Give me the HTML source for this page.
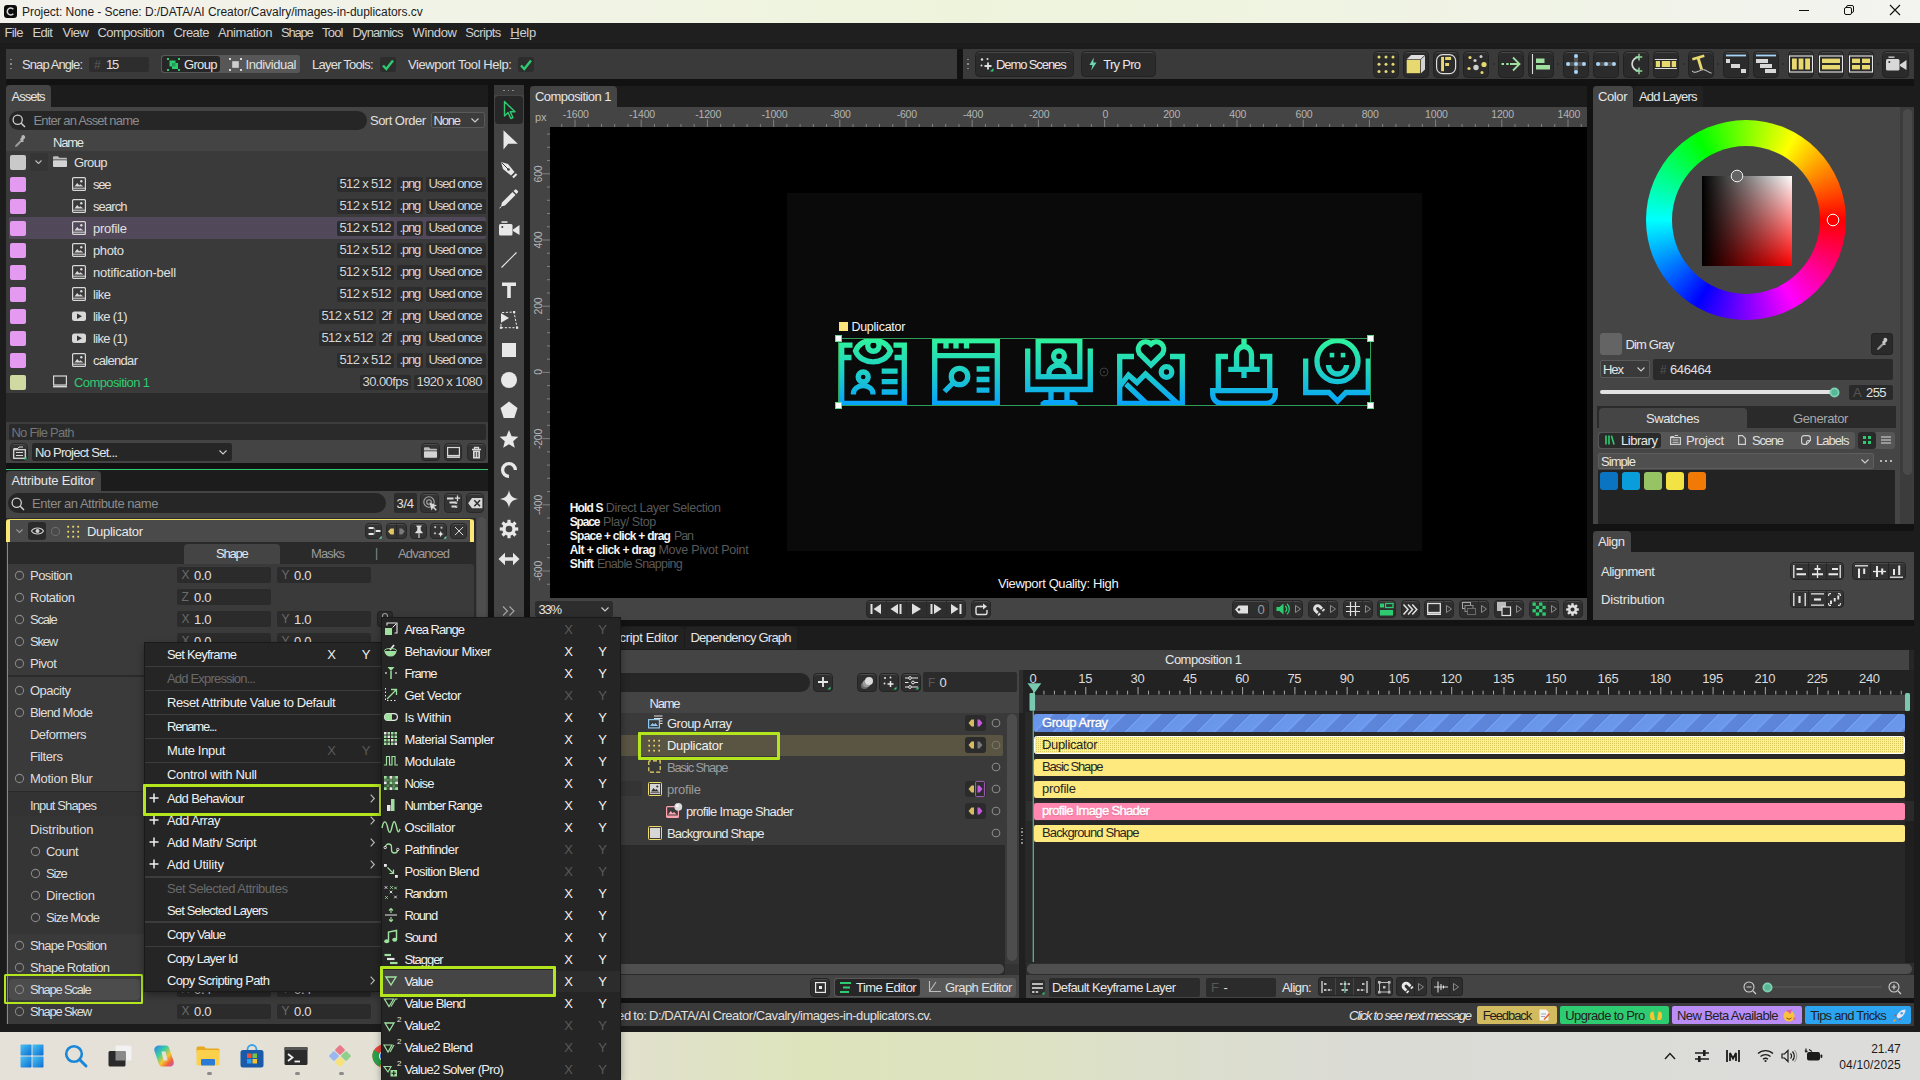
<!DOCTYPE html>
<html lang="en"><head><meta charset="utf-8"><title>Cavalry</title>
<style>
html,body{margin:0;padding:0;}
body{width:1920px;height:1080px;overflow:hidden;position:relative;background:#1e1e1e;
font-family:"Liberation Sans",sans-serif;font-size:13px;color:#dcdcdc;}
.b{position:absolute;display:block;overflow:hidden;}
.t{position:absolute;white-space:pre;}
svg.b{overflow:visible;}
</style></head>
<body>
<!-- p_chrome -->
<div class="b" style="left:0px;top:0px;width:1920px;height:22.6px;background:linear-gradient(90deg,#f3f1ec 0%,#f1f3e6 25%,#eef4dc 50%,#f0f3e4 75%,#f3f3f0 100%);"></div>
<svg class="b" style="left:3.5px;top:4.5px;" width="13" height="13" viewBox="0 0 13 13"><rect x="0" y="0" width="13" height="13" rx="3" fill="#0c0c0c"/><path d="M9.3 4.3A3.4 3.4 0 1 0 9.3 8.7" fill="none" stroke="#d8d8d8" stroke-width="1.5"/></svg>
<div class="t" style="top:3.5px;line-height:16px;font-size:12px;color:#1b1b1b;left:22px;letter-spacing:-0.05px;">Project: None - Scene: D:/DATA/AI Creator/Cavalry/images-in-duplicators.cv</div>
<svg class="b" style="left:1799px;top:5px;" width="10" height="10" viewBox="0 0 10 10"><path d="M0 5.5H10" stroke="#111" stroke-width="1"/></svg>
<svg class="b" style="left:1844px;top:5px;" width="10" height="10" viewBox="0 0 10 10"><rect x="0.5" y="2.5" width="7" height="7" rx="1.5" fill="none" stroke="#111"/><path d="M2.5 2.5V2A1.5 1.5 0 0 1 4 0.5H8A1.5 1.5 0 0 1 9.5 2V6A1.5 1.5 0 0 1 8 7.5H7.5" fill="none" stroke="#111"/></svg>
<svg class="b" style="left:1890px;top:5px;" width="10" height="10" viewBox="0 0 10 10"><path d="M0 0L10 10M10 0L0 10" stroke="#111" stroke-width="1.1"/></svg>
<div class="b" style="left:0px;top:22.6px;width:1920px;height:20.4px;background:#1f1f1f;"></div>
<div class="t" style="top:24px;line-height:17px;font-size:13px;color:#cfcfcf;left:4.5px;letter-spacing:-0.65px;">File</div>
<div class="t" style="top:24px;line-height:17px;font-size:13px;color:#cfcfcf;left:32.5px;letter-spacing:-0.64px;">Edit</div>
<div class="t" style="top:24px;line-height:17px;font-size:13px;color:#cfcfcf;left:62.5px;letter-spacing:-0.48px;">View</div>
<div class="t" style="top:24px;line-height:17px;font-size:13px;color:#cfcfcf;left:97.5px;letter-spacing:-0.53px;">Composition</div>
<div class="t" style="top:24px;line-height:17px;font-size:13px;color:#cfcfcf;left:173.5px;letter-spacing:-0.61px;">Create</div>
<div class="t" style="top:24px;line-height:17px;font-size:13px;color:#cfcfcf;left:218px;letter-spacing:-0.41px;">Animation</div>
<div class="t" style="top:24px;line-height:17px;font-size:13px;color:#cfcfcf;left:281px;letter-spacing:-1.2px;">Shape</div>
<div class="t" style="top:24px;line-height:17px;font-size:13px;color:#cfcfcf;left:322px;letter-spacing:-0.79px;">Tool</div>
<div class="t" style="top:24px;line-height:17px;font-size:13px;color:#cfcfcf;left:352.5px;letter-spacing:-0.87px;">Dynamics</div>
<div class="t" style="top:24px;line-height:17px;font-size:13px;color:#cfcfcf;left:412.5px;letter-spacing:-0.35px;">Window</div>
<div class="t" style="top:24px;line-height:17px;font-size:13px;color:#cfcfcf;left:465.3px;letter-spacing:-0.62px;">Scripts</div>
<div class="t" style="top:24px;line-height:17px;font-size:13px;color:#cfcfcf;left:510.3px;letter-spacing:-0.3px;"><u>H</u>elp</div>
<div class="b" style="left:0px;top:43px;width:1920px;height:989px;background:#1c1c1c;"></div>
<div class="b" style="left:6px;top:49px;width:1908px;height:951px;background:#121212;"></div>
<div class="b" style="left:6px;top:49px;width:951px;height:30px;background:#3a3a3a;"></div>
<div class="b" style="left:10px;top:58.5px;width:1.5px;height:1.5px;background:#8a8a8a;"></div>
<div class="b" style="left:10px;top:63px;width:1.5px;height:1.5px;background:#8a8a8a;"></div>
<div class="b" style="left:10px;top:67.5px;width:1.5px;height:1.5px;background:#8a8a8a;"></div>
<div class="t" style="top:56px;line-height:17px;font-size:13px;color:#e0e0e0;left:22px;letter-spacing:-0.91px;">Snap Angle:</div>
<div class="b" style="left:89px;top:56.5px;width:60px;height:15.5px;background:#2d2d2d;border-radius:2px;"></div>
<div class="t" style="top:56.5px;line-height:16px;font-size:12px;color:#5a5a5a;left:94px;">#</div>
<div class="t" style="top:56px;line-height:17px;font-size:13px;color:#e0e0e0;left:106px;letter-spacing:-1.2px;">15</div>
<div class="b" style="left:161px;top:55px;width:139px;height:18px;background:#575757;border-radius:3px;"></div>
<div class="b" style="left:162px;top:56px;width:58px;height:16px;background:#262626;border-radius:3px;"></div>
<svg class="b" style="left:167px;top:58px;" width="13" height="13" viewBox="0 0 13 13"><rect x="0" y="0" width="2" height="2" fill="#2ecc71"/><rect x="0" y="11" width="2" height="2" fill="#2ecc71"/><rect x="11" y="0" width="2" height="2" fill="#2ecc71"/><rect x="11" y="11" width="2" height="2" fill="#2ecc71"/><rect x="2.500" y="2.500" width="6" height="6" fill="#2ecc71"/><rect x="5" y="5" width="6" height="6" fill="#2ecc71"/><rect x="5" y="5" width="3.500" height="3.500" fill="#1f9f58"/></svg>
<div class="t" style="top:56px;line-height:17px;font-size:13px;color:#e8e8e8;left:184px;letter-spacing:-0.66px;">Group</div>
<svg class="b" style="left:229px;top:58px;" width="13" height="13" viewBox="0 0 13 13"><rect x="0" y="0" width="2" height="2" fill="#d8d8d8"/><rect x="0" y="11" width="2" height="2" fill="#d8d8d8"/><rect x="11" y="0" width="2" height="2" fill="#d8d8d8"/><rect x="11" y="11" width="2" height="2" fill="#d8d8d8"/><rect x="3.200" y="3.200" width="6.600" height="6.600" fill="#cfcfcf"/></svg>
<div class="t" style="top:56px;line-height:17px;font-size:13px;color:#e0e0e0;left:245.5px;letter-spacing:-0.44px;">Individual</div>
<div class="t" style="top:56px;line-height:17px;font-size:13px;color:#e0e0e0;left:312px;letter-spacing:-0.76px;">Layer Tools:</div>
<div class="b" style="left:380px;top:56.5px;width:16px;height:15.5px;background:#2d2d2d;border-radius:2px;"></div>
<svg class="b" style="left:380px;top:56.5px;" width="16" height="16" viewBox="0 0 16 16"><path d="M3 8.500L6.300 12L13 3.500" fill="none" stroke="#2ecc71" stroke-width="2.400"/></svg>
<div class="t" style="top:56px;line-height:17px;font-size:13px;color:#e0e0e0;left:408px;letter-spacing:-0.42px;">Viewport Tool Help:</div>
<div class="b" style="left:518px;top:56.5px;width:16px;height:15.5px;background:#2d2d2d;border-radius:2px;"></div>
<svg class="b" style="left:518px;top:56.5px;" width="16" height="16" viewBox="0 0 16 16"><path d="M3 8.500L6.300 12L13 3.500" fill="none" stroke="#2ecc71" stroke-width="2.400"/></svg>
<div class="b" style="left:963px;top:49px;width:951.2px;height:30px;background:#3a3a3a;"></div>
<div class="b" style="left:967px;top:58.5px;width:1.5px;height:1.5px;background:#8a8a8a;"></div>
<div class="b" style="left:967px;top:63px;width:1.5px;height:1.5px;background:#8a8a8a;"></div>
<div class="b" style="left:967px;top:67.5px;width:1.5px;height:1.5px;background:#8a8a8a;"></div>
<div class="b" style="left:974.5px;top:50.6px;width:99.1px;height:26.7px;background:#2b2b2b;border-radius:4.5px;border:1px solid #222;box-sizing:border-box;box-shadow:inset 0 1px 0 #484848;"></div>
<svg class="b" style="left:979px;top:57px;" width="15" height="15" viewBox="0 0 15 15"><path d="M9 5.5V12.5M5.5 9H12.5" stroke="#e0e0e0" stroke-width="1.8"/><circle cx="3" cy="2.5" r="1.2" fill="#e0e0e0"/><circle cx="8.5" cy="2" r="1" fill="#e0e0e0"/><circle cx="2.5" cy="8.5" r="1" fill="#e0e0e0"/><path d="M14.5 11V14.5H11z" fill="#2ecc71"/></svg>
<div class="t" style="top:56px;line-height:17px;font-size:13px;color:#e8e8e8;left:996px;letter-spacing:-1.1px;">Demo Scenes</div>
<div class="b" style="left:1081px;top:50.6px;width:74.5px;height:26.7px;background:#2b2b2b;border-radius:4.5px;border:1px solid #222;box-sizing:border-box;box-shadow:inset 0 1px 0 #484848;"></div>
<svg class="b" style="left:1088px;top:57px;" width="10" height="15" viewBox="0 0 10 15"><path d="M5.800 0.500L1.500 8H4.500L3.200 13.500L8.500 5.500H5.300z" fill="#6fd8b0"/></svg>
<div class="t" style="top:56px;line-height:17px;font-size:13px;color:#e8e8e8;left:1103.3px;letter-spacing:-0.74px;">Try Pro</div>
<div class="b" style="left:1372.6px;top:50.7px;width:26.4px;height:26.9px;background:#2b2b2b;border-radius:4.5px;border:1px solid #222;box-sizing:border-box;box-shadow:inset 0 1px 0 #484848;"></div>
<div class="b" style="left:1402.8px;top:50.7px;width:26.4px;height:26.9px;background:#2b2b2b;border-radius:4.5px;border:1px solid #222;box-sizing:border-box;box-shadow:inset 0 1px 0 #484848;"></div>
<div class="b" style="left:1432.7px;top:50.7px;width:26.4px;height:26.9px;background:#2b2b2b;border-radius:4.5px;border:1px solid #222;box-sizing:border-box;box-shadow:inset 0 1px 0 #484848;"></div>
<div class="b" style="left:1462.8px;top:50.7px;width:26.4px;height:26.9px;background:#2b2b2b;border-radius:4.5px;border:1px solid #222;box-sizing:border-box;box-shadow:inset 0 1px 0 #484848;"></div>
<div class="b" style="left:1497.6px;top:50.7px;width:26.4px;height:26.9px;background:#2b2b2b;border-radius:4.5px;border:1px solid #222;box-sizing:border-box;box-shadow:inset 0 1px 0 #484848;"></div>
<div class="b" style="left:1527.5px;top:50.7px;width:26.4px;height:26.9px;background:#2b2b2b;border-radius:4.5px;border:1px solid #222;box-sizing:border-box;box-shadow:inset 0 1px 0 #484848;"></div>
<div class="b" style="left:1562.5px;top:50.7px;width:26.4px;height:26.9px;background:#2b2b2b;border-radius:4.5px;border:1px solid #222;box-sizing:border-box;box-shadow:inset 0 1px 0 #484848;"></div>
<div class="b" style="left:1592.7px;top:50.7px;width:26.4px;height:26.9px;background:#2b2b2b;border-radius:4.5px;border:1px solid #222;box-sizing:border-box;box-shadow:inset 0 1px 0 #484848;"></div>
<div class="b" style="left:1622.7px;top:50.7px;width:26.4px;height:26.9px;background:#2b2b2b;border-radius:4.5px;border:1px solid #222;box-sizing:border-box;box-shadow:inset 0 1px 0 #484848;"></div>
<div class="b" style="left:1652.8px;top:50.7px;width:26.4px;height:26.9px;background:#2b2b2b;border-radius:4.5px;border:1px solid #222;box-sizing:border-box;box-shadow:inset 0 1px 0 #484848;"></div>
<div class="b" style="left:1687.8px;top:50.7px;width:26.4px;height:26.9px;background:#2b2b2b;border-radius:4.5px;border:1px solid #222;box-sizing:border-box;box-shadow:inset 0 1px 0 #484848;"></div>
<div class="b" style="left:1722.5px;top:50.7px;width:26.4px;height:26.9px;background:#2b2b2b;border-radius:4.5px;border:1px solid #222;box-sizing:border-box;box-shadow:inset 0 1px 0 #484848;"></div>
<div class="b" style="left:1752.6px;top:50.7px;width:26.4px;height:26.9px;background:#2b2b2b;border-radius:4.5px;border:1px solid #222;box-sizing:border-box;box-shadow:inset 0 1px 0 #484848;"></div>
<div class="b" style="left:1787.6px;top:50.7px;width:26.4px;height:26.9px;background:#2b2b2b;border-radius:4.5px;border:1px solid #222;box-sizing:border-box;box-shadow:inset 0 1px 0 #484848;"></div>
<div class="b" style="left:1817.6px;top:50.7px;width:26.4px;height:26.9px;background:#2b2b2b;border-radius:4.5px;border:1px solid #222;box-sizing:border-box;box-shadow:inset 0 1px 0 #484848;"></div>
<div class="b" style="left:1847.7px;top:50.7px;width:26.4px;height:26.9px;background:#2b2b2b;border-radius:4.5px;border:1px solid #222;box-sizing:border-box;box-shadow:inset 0 1px 0 #484848;"></div>
<div class="b" style="left:1882.4px;top:50.7px;width:26.4px;height:26.9px;background:#2b2b2b;border-radius:4.5px;border:1px solid #222;box-sizing:border-box;box-shadow:inset 0 1px 0 #484848;"></div>
<div class="b" style="left:1492.5px;top:63px;width:2px;height:2px;background:#2a2a2a;border-radius:1px;"></div>
<div class="b" style="left:1557.2px;top:63px;width:2px;height:2px;background:#2a2a2a;border-radius:1px;"></div>
<div class="b" style="left:1682.5px;top:63px;width:2px;height:2px;background:#2a2a2a;border-radius:1px;"></div>
<div class="b" style="left:1717.4px;top:63px;width:2px;height:2px;background:#2a2a2a;border-radius:1px;"></div>
<div class="b" style="left:1782.3px;top:63px;width:2px;height:2px;background:#2a2a2a;border-radius:1px;"></div>
<div class="b" style="left:1877.2px;top:63px;width:2px;height:2px;background:#2a2a2a;border-radius:1px;"></div>
<svg class="b" style="left:1375.9px;top:54px;" width="20" height="20" viewBox="0 0 20 20"><circle cx="3" cy="3.0" r="1.5" fill="#e8d870"/><circle cx="10" cy="3.0" r="1.5" fill="#e8d870"/><circle cx="17" cy="3.0" r="1.5" fill="#e8d870"/><circle cx="3" cy="10.2" r="1.5" fill="#e8d870"/><circle cx="10" cy="10.2" r="1.5" fill="#e8d870"/><circle cx="17" cy="10.2" r="1.5" fill="#e8d870"/><circle cx="3" cy="17.4" r="1.5" fill="#e8d870"/><circle cx="10" cy="17.4" r="1.5" fill="#e8d870"/><circle cx="17" cy="17.4" r="1.5" fill="#e8d870"/></svg>
<svg class="b" style="left:1406.1px;top:54px;" width="20" height="20" viewBox="0 0 20 20"><path d="M0.7 5.2L5.200 0.900H18.800L14.500 5.200z" fill="#dedede"/><path d="M14.900 5.600L19 1.700V15.500L15 19.200z" fill="#d4d4d4"/><rect x="0.700" y="5.900" width="13.500" height="13.300" fill="#e8d870"/></svg>
<svg class="b" style="left:1436px;top:54px;" width="20" height="20" viewBox="0 0 20 20"><rect x="0.600" y="0.600" width="19" height="19" rx="6" fill="none" stroke="#dcdcdc" stroke-width="1.200"/><rect x="5.100" y="2.900" width="2.900" height="14.300" fill="#e8d870"/><rect x="9.200" y="2.900" width="5.900" height="3.100" fill="#e8d870"/><rect x="9.200" y="9" width="3.900" height="3" fill="#e8d870"/></svg>
<svg class="b" style="left:1466.1px;top:54px;" width="20" height="20" viewBox="0 0 20 20"><circle cx="4" cy="3.5" r="1.6" fill="#e8d870"/><circle cx="15" cy="2.5" r="1.5" fill="#cfcfcf"/><circle cx="9" cy="6.5" r="1.6" fill="#cfcfcf"/><circle cx="18" cy="10.5" r="2.6" fill="#e8d870"/><circle cx="10" cy="13.5" r="2.7" fill="#cfcfcf"/><circle cx="3" cy="14.5" r="1.6" fill="#e8d870"/><circle cx="16" cy="18.5" r="1.5" fill="#e8d870"/></svg>
<svg class="b" style="left:1500.9px;top:54px;" width="20" height="20" viewBox="0 0 20 20"><path d="M0.5 10H13" stroke="#9fe09f" stroke-width="1.8" stroke-dasharray="2.5 2.2"/><path d="M12 3.5L18.5 10L12 16.5M9 10H18" fill="none" stroke="#9fe09f" stroke-width="1.8"/></svg>
<svg class="b" style="left:1530.8px;top:54px;" width="20" height="20" viewBox="0 0 20 20"><path d="M1.5 0V20" stroke="#dcdcdc" stroke-width="1.1"/><rect x="5" y="4.5" width="8.5" height="4.5" fill="#9fe09f"/><rect x="5" y="11" width="14" height="4.5" fill="#9fe09f"/></svg>
<svg class="b" style="left:1565.8px;top:54px;" width="20" height="20" viewBox="0 0 20 20"><path d="M10 2V18M2 10H18" stroke="#555" stroke-width="4"/><circle cx="10" cy="2" r="2" fill="#a8d4f8"/><circle cx="10" cy="10" r="2" fill="#a8d4f8"/><circle cx="10" cy="18" r="2" fill="#a8d4f8"/><circle cx="2" cy="10" r="2" fill="#a8d4f8"/><circle cx="18" cy="10" r="2" fill="#a8d4f8"/></svg>
<svg class="b" style="left:1596px;top:54px;" width="20" height="20" viewBox="0 0 20 20"><path d="M2 10H18" stroke="#555" stroke-width="4"/><circle cx="2" cy="10" r="2" fill="#a8d4f8"/><circle cx="10" cy="10" r="2" fill="#a8d4f8"/><circle cx="18" cy="10" r="2" fill="#a8d4f8"/></svg>
<svg class="b" style="left:1626px;top:54px;" width="20" height="20" viewBox="0 0 20 20"><path d="M13 3.1A6.9 6.9 0 0 0 13 16.9" fill="none" stroke="#d8d8d8" stroke-width="1.7"/><path d="M9.700 3.100H16.300M13 -0.200V6.400M9.700 16.900H16.300M13 13.600V20.200" stroke="#8fd69a" stroke-width="1.500"/></svg>
<svg class="b" style="left:1656.1px;top:54px;" width="20" height="20" viewBox="0 0 20 20"><path d="M-1.200 5.500H20.900M-1.200 14.500H20.900" stroke="#dcdcdc" stroke-width="1"/><rect x="-0.200" y="7" width="4.200" height="6" fill="#e8d870"/><rect x="5.800" y="7" width="8.400" height="6" fill="#e8d870"/><rect x="15.700" y="7" width="4.400" height="6" fill="#e8d870"/></svg>
<svg class="b" style="left:1691.1px;top:54px;" width="20" height="20" viewBox="0 0 20 20"><path d="M1 4L13 0.5L13.6 3L8.8 4.4L12 15L9.2 15.8L6 5.2L1.7 6.5z" fill="#e8d870"/><path d="M1 17C5 21 10 14 14 16S19 19 20.5 19" fill="none" stroke="#dcdcdc" stroke-width="1"/></svg>
<svg class="b" style="left:1725.8px;top:54px;" width="20" height="20" viewBox="0 0 20 20"><path d="M0 1.5H20" stroke="#a8d4f8" stroke-width="1.8"/><rect x="0" y="5" width="4" height="4" fill="#d8d8d8"/><rect x="5" y="10" width="9" height="4" fill="#d8d8d8"/><rect x="15" y="15" width="5" height="4" fill="#d8d8d8"/></svg>
<svg class="b" style="left:1755.9px;top:54px;" width="20" height="20" viewBox="0 0 20 20"><path d="M0 1.5H20" stroke="#a8d4f8" stroke-width="1.8"/><rect x="0" y="5" width="12" height="4" fill="#d8d8d8"/><rect x="4" y="10" width="12" height="4" fill="#d8d8d8"/><rect x="9" y="15" width="11" height="4" fill="#d8d8d8"/></svg>
<svg class="b" style="left:1790.9px;top:54px;" width="20" height="20" viewBox="0 0 20 20"><rect x="-1.5" y="2" width="23" height="16" fill="none" stroke="#e8e8e8" stroke-width="1.1"/><rect x="1" y="4.5" width="4.8" height="11" fill="#e8d870"/><rect x="7.6" y="4.5" width="4.8" height="11" fill="#e8d870"/><rect x="14.2" y="4.5" width="4.8" height="11" fill="#e8d870"/></svg>
<svg class="b" style="left:1820.9px;top:54px;" width="20" height="20" viewBox="0 0 20 20"><rect x="-1.5" y="2" width="23" height="16" fill="none" stroke="#e8e8e8" stroke-width="1.1"/><rect x="1" y="4.6" width="18" height="4.4" fill="#e8d870"/><rect x="1" y="11" width="18" height="4.4" fill="#e8d870"/></svg>
<svg class="b" style="left:1851px;top:54px;" width="20" height="20" viewBox="0 0 20 20"><rect x="-1.5" y="2" width="23" height="16" fill="none" stroke="#e8e8e8" stroke-width="1.1"/><rect x="1" y="4.6" width="8" height="4.4" fill="#e8d870"/><rect x="1" y="11" width="8" height="4.4" fill="#e8d870"/><rect x="11" y="4.6" width="8" height="4.4" fill="#e8d870"/><rect x="11" y="11" width="8" height="4.4" fill="#e8d870"/></svg>
<svg class="b" style="left:1885.7px;top:54px;" width="20" height="20" viewBox="0 0 20 20"><rect x="0" y="5" width="13.5" height="11.5" rx="1.5" fill="#d8d8d8"/><path d="M14 10.5L20.5 6V16L14 12z" fill="#d8d8d8"/><rect x="2.5" y="2.5" width="6" height="1.3" fill="#d8d8d8"/><circle cx="3.3" cy="8" r="1" fill="#333"/></svg>
<!-- p_left -->
<div class="b" style="left:6px;top:85px;width:482px;height:22px;background:#1c1c1c;"></div>
<div class="b" style="left:6px;top:85px;width:45px;height:22px;background:#444;border-radius:4px 4px 0 0;"></div>
<div class="t" style="top:88px;line-height:17px;font-size:13px;color:#e6e6e6;left:11.5px;letter-spacing:-1px;">Assets</div>
<div class="b" style="left:6px;top:107px;width:482px;height:356px;background:#444;"></div>
<div class="b" style="left:9px;top:110.5px;width:357.5px;height:19px;background:#262626;border-radius:9.5px;"></div>
<svg class="b" style="left:12px;top:113.5px;" width="14" height="14" viewBox="0 0 14 14"><circle cx="5.7" cy="5.7" r="4.6" fill="none" stroke="#d0d0d0" stroke-width="1.3"/><path d="M9.2 9.2L13 13" stroke="#d0d0d0" stroke-width="1.5"/></svg>
<div class="t" style="top:112px;line-height:17px;font-size:13px;color:#8c8c8c;left:33.5px;letter-spacing:-0.82px;">Enter an Asset name</div>
<div class="t" style="top:112px;line-height:17px;font-size:13px;color:#e0e0e0;left:370px;letter-spacing:-0.52px;">Sort Order</div>
<div class="b" style="left:430.5px;top:112px;width:54.5px;height:16px;background:#3c3c3c;border-radius:2px;border:1px solid #5a5a5a;box-sizing:border-box;"></div>
<div class="t" style="top:112px;line-height:17px;font-size:13px;color:#e0e0e0;left:433.5px;letter-spacing:-1.19px;">None</div>
<svg class="b" style="left:471px;top:118px;" width="8" height="5" viewBox="0 0 8 5"><path d="M0.5 0.5L4 4L7.5 0.5" fill="none" stroke="#cfcfcf" stroke-width="1.1"/></svg>
<div class="b" style="left:6px;top:134px;width:482px;height:17px;background:#444;"></div>
<svg class="b" style="left:14px;top:136px;" width="12" height="12" viewBox="0 0 12 12"><path d="M1 11L1.5 9L7 3.5L8.5 5L3 10.5z" fill="#9a9a9a"/><path d="M6.5 2.5L9.5 5.5M8 4L10 2A1.2 1.2 0 0 0 8.3 0.3z" stroke="#b8b8b8" stroke-width="1.6" fill="#b8b8b8"/></svg>
<div class="t" style="top:134px;line-height:17px;font-size:13px;color:#e6e6e6;left:53px;letter-spacing:-1.2px;">Name</div>
<div class="b" style="left:6px;top:151px;width:482px;height:242px;background:#3a3a3a;"></div>
<div class="b" style="left:10px;top:154.5px;width:16px;height:15.5px;background:#c9c9c9;border-radius:2px;"></div>
<div class="b" style="left:30px;top:153px;width:17.5px;height:18px;background:#353535;border-radius:2px;"></div>
<svg class="b" style="left:35px;top:160.25px;" width="7" height="4.5" viewBox="0 0 7 4.5"><path d="M0.5 0.5L3.5 3.5L6.5 0.5" fill="none" stroke="#bdbdbd" stroke-width="1.1"/></svg>
<svg class="b" style="left:53px;top:155px;" width="14" height="13" viewBox="0 0 14 13"><path d="M0 2.2A1 1 0 0 1 1 1.2H5L6.3 2.8H13A1 1 0 0 1 14 3.8V4.6H0z" fill="#bcbcbc"/><rect x="0" y="5.3" width="14" height="6.8" rx="0.8" fill="#d4d4d4"/></svg>
<div class="t" style="top:154px;line-height:17px;font-size:13px;color:#e0e0e0;left:74px;letter-spacing:-0.66px;">Group</div>
<div class="b" style="left:10px;top:176.5px;width:16px;height:15.5px;background:#e59af1;border-radius:2px;"></div>
<svg class="b" style="left:72px;top:177px;" width="14" height="14" viewBox="0 0 14 14"><rect x="0.6" y="0.6" width="12.8" height="12.8" rx="1" fill="none" stroke="#d8d8d8" stroke-width="1.2"/><path d="M2.5 9.5L5.2 6L7.2 8.3L8.3 7.2L11.5 9.5z" fill="#d8d8d8"/><circle cx="9.3" cy="4.3" r="1.2" fill="#d8d8d8"/><path d="M1 11.2H13" stroke="#d8d8d8" stroke-width="1"/></svg>
<div class="t" style="top:176px;line-height:17px;font-size:13px;color:#e0e0e0;left:93px;letter-spacing:-1.2px;">see</div>
<div class="b" style="left:337px;top:176.5px;width:57px;height:15.5px;background:#2c2c2c;border-radius:2px;"></div><div class="t" style="top:175px;line-height:17px;font-size:13px;color:#d6d6d6;left:339.5px;letter-spacing:-0.64px;">512 x 512</div>
<div class="b" style="left:397px;top:176.5px;width:26px;height:15.5px;background:#2c2c2c;border-radius:2px;"></div><div class="t" style="top:175px;line-height:17px;font-size:13px;color:#d6d6d6;left:399.5px;letter-spacing:-1.2px;">.png</div>
<div class="b" style="left:426px;top:176.5px;width:59.5px;height:15.5px;background:#2c2c2c;border-radius:2px;"></div><div class="t" style="top:175px;line-height:17px;font-size:13px;color:#d6d6d6;left:428.5px;letter-spacing:-1.02px;">Used once</div>
<div class="b" style="left:10px;top:198.5px;width:16px;height:15.5px;background:#e59af1;border-radius:2px;"></div>
<svg class="b" style="left:72px;top:199px;" width="14" height="14" viewBox="0 0 14 14"><rect x="0.6" y="0.6" width="12.8" height="12.8" rx="1" fill="none" stroke="#d8d8d8" stroke-width="1.2"/><path d="M2.5 9.5L5.2 6L7.2 8.3L8.3 7.2L11.5 9.5z" fill="#d8d8d8"/><circle cx="9.3" cy="4.3" r="1.2" fill="#d8d8d8"/><path d="M1 11.2H13" stroke="#d8d8d8" stroke-width="1"/></svg>
<div class="t" style="top:198px;line-height:17px;font-size:13px;color:#e0e0e0;left:93px;letter-spacing:-0.91px;">search</div>
<div class="b" style="left:337px;top:198.5px;width:57px;height:15.5px;background:#2c2c2c;border-radius:2px;"></div><div class="t" style="top:197px;line-height:17px;font-size:13px;color:#d6d6d6;left:339.5px;letter-spacing:-0.64px;">512 x 512</div>
<div class="b" style="left:397px;top:198.5px;width:26px;height:15.5px;background:#2c2c2c;border-radius:2px;"></div><div class="t" style="top:197px;line-height:17px;font-size:13px;color:#d6d6d6;left:399.5px;letter-spacing:-1.2px;">.png</div>
<div class="b" style="left:426px;top:198.5px;width:59.5px;height:15.5px;background:#2c2c2c;border-radius:2px;"></div><div class="t" style="top:197px;line-height:17px;font-size:13px;color:#d6d6d6;left:428.5px;letter-spacing:-1.02px;">Used once</div>
<div class="b" style="left:9px;top:217px;width:477px;height:22px;background:#51495a;border-radius:2px;"></div>
<div class="b" style="left:10px;top:220.5px;width:16px;height:15.5px;background:#e59af1;border-radius:2px;"></div>
<svg class="b" style="left:72px;top:221px;" width="14" height="14" viewBox="0 0 14 14"><rect x="0.6" y="0.6" width="12.8" height="12.8" rx="1" fill="none" stroke="#d8d8d8" stroke-width="1.2"/><path d="M2.5 9.5L5.2 6L7.2 8.3L8.3 7.2L11.5 9.5z" fill="#d8d8d8"/><circle cx="9.3" cy="4.3" r="1.2" fill="#d8d8d8"/><path d="M1 11.2H13" stroke="#d8d8d8" stroke-width="1"/></svg>
<div class="t" style="top:220px;line-height:17px;font-size:13px;color:#e0e0e0;left:93px;letter-spacing:-0.24px;">profile</div>
<div class="b" style="left:337px;top:220.5px;width:57px;height:15.5px;background:#2c2c2c;border-radius:2px;"></div><div class="t" style="top:219px;line-height:17px;font-size:13px;color:#d6d6d6;left:339.5px;letter-spacing:-0.64px;">512 x 512</div>
<div class="b" style="left:397px;top:220.5px;width:26px;height:15.5px;background:#2c2c2c;border-radius:2px;"></div><div class="t" style="top:219px;line-height:17px;font-size:13px;color:#d6d6d6;left:399.5px;letter-spacing:-1.2px;">.png</div>
<div class="b" style="left:426px;top:220.5px;width:59.5px;height:15.5px;background:#2c2c2c;border-radius:2px;"></div><div class="t" style="top:219px;line-height:17px;font-size:13px;color:#d6d6d6;left:428.5px;letter-spacing:-1.02px;">Used once</div>
<div class="b" style="left:10px;top:242.5px;width:16px;height:15.5px;background:#e59af1;border-radius:2px;"></div>
<svg class="b" style="left:72px;top:243px;" width="14" height="14" viewBox="0 0 14 14"><rect x="0.6" y="0.6" width="12.8" height="12.8" rx="1" fill="none" stroke="#d8d8d8" stroke-width="1.2"/><path d="M2.5 9.5L5.2 6L7.2 8.3L8.3 7.2L11.5 9.5z" fill="#d8d8d8"/><circle cx="9.3" cy="4.3" r="1.2" fill="#d8d8d8"/><path d="M1 11.2H13" stroke="#d8d8d8" stroke-width="1"/></svg>
<div class="t" style="top:242px;line-height:17px;font-size:13px;color:#e0e0e0;left:93px;letter-spacing:-0.39px;">photo</div>
<div class="b" style="left:337px;top:242.5px;width:57px;height:15.5px;background:#2c2c2c;border-radius:2px;"></div><div class="t" style="top:241px;line-height:17px;font-size:13px;color:#d6d6d6;left:339.5px;letter-spacing:-0.64px;">512 x 512</div>
<div class="b" style="left:397px;top:242.5px;width:26px;height:15.5px;background:#2c2c2c;border-radius:2px;"></div><div class="t" style="top:241px;line-height:17px;font-size:13px;color:#d6d6d6;left:399.5px;letter-spacing:-1.2px;">.png</div>
<div class="b" style="left:426px;top:242.5px;width:59.5px;height:15.5px;background:#2c2c2c;border-radius:2px;"></div><div class="t" style="top:241px;line-height:17px;font-size:13px;color:#d6d6d6;left:428.5px;letter-spacing:-1.02px;">Used once</div>
<div class="b" style="left:10px;top:264.5px;width:16px;height:15.5px;background:#e59af1;border-radius:2px;"></div>
<svg class="b" style="left:72px;top:265px;" width="14" height="14" viewBox="0 0 14 14"><rect x="0.6" y="0.6" width="12.8" height="12.8" rx="1" fill="none" stroke="#d8d8d8" stroke-width="1.2"/><path d="M2.5 9.5L5.2 6L7.2 8.3L8.3 7.2L11.5 9.5z" fill="#d8d8d8"/><circle cx="9.3" cy="4.3" r="1.2" fill="#d8d8d8"/><path d="M1 11.2H13" stroke="#d8d8d8" stroke-width="1"/></svg>
<div class="t" style="top:264px;line-height:17px;font-size:13px;color:#e0e0e0;left:93px;letter-spacing:-0.23px;">notification-bell</div>
<div class="b" style="left:337px;top:264.5px;width:57px;height:15.5px;background:#2c2c2c;border-radius:2px;"></div><div class="t" style="top:263px;line-height:17px;font-size:13px;color:#d6d6d6;left:339.5px;letter-spacing:-0.64px;">512 x 512</div>
<div class="b" style="left:397px;top:264.5px;width:26px;height:15.5px;background:#2c2c2c;border-radius:2px;"></div><div class="t" style="top:263px;line-height:17px;font-size:13px;color:#d6d6d6;left:399.5px;letter-spacing:-1.2px;">.png</div>
<div class="b" style="left:426px;top:264.5px;width:59.5px;height:15.5px;background:#2c2c2c;border-radius:2px;"></div><div class="t" style="top:263px;line-height:17px;font-size:13px;color:#d6d6d6;left:428.5px;letter-spacing:-1.02px;">Used once</div>
<div class="b" style="left:10px;top:286.5px;width:16px;height:15.5px;background:#e59af1;border-radius:2px;"></div>
<svg class="b" style="left:72px;top:287px;" width="14" height="14" viewBox="0 0 14 14"><rect x="0.6" y="0.6" width="12.8" height="12.8" rx="1" fill="none" stroke="#d8d8d8" stroke-width="1.2"/><path d="M2.5 9.5L5.2 6L7.2 8.3L8.3 7.2L11.5 9.5z" fill="#d8d8d8"/><circle cx="9.3" cy="4.3" r="1.2" fill="#d8d8d8"/><path d="M1 11.2H13" stroke="#d8d8d8" stroke-width="1"/></svg>
<div class="t" style="top:286px;line-height:17px;font-size:13px;color:#e0e0e0;left:93px;letter-spacing:-0.51px;">like</div>
<div class="b" style="left:337px;top:286.5px;width:57px;height:15.5px;background:#2c2c2c;border-radius:2px;"></div><div class="t" style="top:285px;line-height:17px;font-size:13px;color:#d6d6d6;left:339.5px;letter-spacing:-0.64px;">512 x 512</div>
<div class="b" style="left:397px;top:286.5px;width:26px;height:15.5px;background:#2c2c2c;border-radius:2px;"></div><div class="t" style="top:285px;line-height:17px;font-size:13px;color:#d6d6d6;left:399.5px;letter-spacing:-1.2px;">.png</div>
<div class="b" style="left:426px;top:286.5px;width:59.5px;height:15.5px;background:#2c2c2c;border-radius:2px;"></div><div class="t" style="top:285px;line-height:17px;font-size:13px;color:#d6d6d6;left:428.5px;letter-spacing:-1.02px;">Used once</div>
<div class="b" style="left:10px;top:308.5px;width:16px;height:15.5px;background:#e59af1;border-radius:2px;"></div>
<svg class="b" style="left:72px;top:309px;" width="14" height="14" viewBox="0 0 14 14"><rect x="0" y="2.5" width="14" height="9.5" rx="2.5" fill="#d8d8d8"/><path d="M5 4.5V10L10 7.2z" fill="#333"/></svg>
<div class="t" style="top:308px;line-height:17px;font-size:13px;color:#e0e0e0;left:93px;letter-spacing:-0.65px;">like (1)</div>
<div class="b" style="left:319px;top:308.5px;width:56.5px;height:15.5px;background:#2c2c2c;border-radius:2px;"></div><div class="t" style="top:307px;line-height:17px;font-size:13px;color:#d6d6d6;left:321.5px;letter-spacing:-0.64px;">512 x 512</div>
<div class="b" style="left:379px;top:308.5px;width:15px;height:15.5px;background:#2c2c2c;border-radius:2px;"></div><div class="t" style="top:307px;line-height:17px;font-size:13px;color:#d6d6d6;left:381.5px;letter-spacing:-0.84px;">2f</div>
<div class="b" style="left:397px;top:308.5px;width:26px;height:15.5px;background:#2c2c2c;border-radius:2px;"></div><div class="t" style="top:307px;line-height:17px;font-size:13px;color:#d6d6d6;left:399.5px;letter-spacing:-1.2px;">.png</div>
<div class="b" style="left:426px;top:308.5px;width:59.5px;height:15.5px;background:#2c2c2c;border-radius:2px;"></div><div class="t" style="top:307px;line-height:17px;font-size:13px;color:#d6d6d6;left:428.5px;letter-spacing:-1.02px;">Used once</div>
<div class="b" style="left:10px;top:330.5px;width:16px;height:15.5px;background:#e59af1;border-radius:2px;"></div>
<svg class="b" style="left:72px;top:331px;" width="14" height="14" viewBox="0 0 14 14"><rect x="0" y="2.5" width="14" height="9.5" rx="2.5" fill="#d8d8d8"/><path d="M5 4.5V10L10 7.2z" fill="#333"/></svg>
<div class="t" style="top:330px;line-height:17px;font-size:13px;color:#e0e0e0;left:93px;letter-spacing:-0.65px;">like (1)</div>
<div class="b" style="left:319px;top:330.5px;width:56.5px;height:15.5px;background:#2c2c2c;border-radius:2px;"></div><div class="t" style="top:329px;line-height:17px;font-size:13px;color:#d6d6d6;left:321.5px;letter-spacing:-0.64px;">512 x 512</div>
<div class="b" style="left:379px;top:330.5px;width:15px;height:15.5px;background:#2c2c2c;border-radius:2px;"></div><div class="t" style="top:329px;line-height:17px;font-size:13px;color:#d6d6d6;left:381.5px;letter-spacing:-0.84px;">2f</div>
<div class="b" style="left:397px;top:330.5px;width:26px;height:15.5px;background:#2c2c2c;border-radius:2px;"></div><div class="t" style="top:329px;line-height:17px;font-size:13px;color:#d6d6d6;left:399.5px;letter-spacing:-1.2px;">.png</div>
<div class="b" style="left:426px;top:330.5px;width:59.5px;height:15.5px;background:#2c2c2c;border-radius:2px;"></div><div class="t" style="top:329px;line-height:17px;font-size:13px;color:#d6d6d6;left:428.5px;letter-spacing:-1.02px;">Used once</div>
<div class="b" style="left:10px;top:352.5px;width:16px;height:15.5px;background:#e59af1;border-radius:2px;"></div>
<svg class="b" style="left:72px;top:353px;" width="14" height="14" viewBox="0 0 14 14"><rect x="0.6" y="0.6" width="12.8" height="12.8" rx="1" fill="none" stroke="#d8d8d8" stroke-width="1.2"/><path d="M2.5 9.5L5.2 6L7.2 8.3L8.3 7.2L11.5 9.5z" fill="#d8d8d8"/><circle cx="9.3" cy="4.3" r="1.2" fill="#d8d8d8"/><path d="M1 11.2H13" stroke="#d8d8d8" stroke-width="1"/></svg>
<div class="t" style="top:352px;line-height:17px;font-size:13px;color:#e0e0e0;left:93px;letter-spacing:-0.7px;">calendar</div>
<div class="b" style="left:337px;top:352.5px;width:57px;height:15.5px;background:#2c2c2c;border-radius:2px;"></div><div class="t" style="top:351px;line-height:17px;font-size:13px;color:#d6d6d6;left:339.5px;letter-spacing:-0.64px;">512 x 512</div>
<div class="b" style="left:397px;top:352.5px;width:26px;height:15.5px;background:#2c2c2c;border-radius:2px;"></div><div class="t" style="top:351px;line-height:17px;font-size:13px;color:#d6d6d6;left:399.5px;letter-spacing:-1.2px;">.png</div>
<div class="b" style="left:426px;top:352.5px;width:59.5px;height:15.5px;background:#2c2c2c;border-radius:2px;"></div><div class="t" style="top:351px;line-height:17px;font-size:13px;color:#d6d6d6;left:428.5px;letter-spacing:-1.02px;">Used once</div>
<div class="b" style="left:10px;top:374.5px;width:16px;height:15.5px;background:#d0d9a2;border-radius:2px;"></div>
<svg class="b" style="left:53px;top:375px;" width="14" height="13" viewBox="0 0 14 13"><rect x="0.6" y="1" width="12.8" height="9" fill="none" stroke="#d8d8d8" stroke-width="1.2"/><rect x="0" y="10.8" width="14" height="1.6" fill="#d8d8d8"/></svg>
<div class="t" style="top:374px;line-height:17px;font-size:13px;color:#2ecc71;left:74px;letter-spacing:-0.59px;">Composition 1</div>
<div class="b" style="left:360px;top:374.5px;width:50.5px;height:15.5px;background:#2c2c2c;border-radius:2px;"></div><div class="t" style="top:373px;line-height:17px;font-size:13px;color:#d6d6d6;left:362.5px;letter-spacing:-0.55px;">30.00fps</div>
<div class="b" style="left:414px;top:374.5px;width:71.5px;height:15.5px;background:#2c2c2c;border-radius:2px;"></div><div class="t" style="top:373px;line-height:17px;font-size:13px;color:#d6d6d6;left:416.5px;letter-spacing:-0.56px;">1920 x 1080</div>
<div class="b" style="left:6px;top:393px;width:482px;height:28.5px;background:#2a2a2a;"></div>
<div class="b" style="left:6px;top:421.5px;width:482px;height:18.5px;background:#3d3d3d;"></div>
<div class="b" style="left:8.75px;top:423.75px;width:476.75px;height:16.25px;background:#2a2a2a;border-radius:2px;"></div>
<div class="t" style="top:424px;line-height:17px;font-size:13px;color:#707878;left:11.5px;letter-spacing:-0.78px;">No File Path</div>
<div class="b" style="left:6px;top:440px;width:482px;height:23px;background:#444;"></div>
<div class="b" style="left:9.7px;top:442.5px;width:18.8px;height:18.8px;background:#333;border-radius:4px;border:1px solid #282828;box-sizing:border-box;box-shadow:inset 0 1px 0 #4c4c4c;"></div>
<svg class="b" style="left:12.7px;top:445.5px;" width="13" height="13" viewBox="0 0 13 13"><path d="M0.5 2.5H5L6 1H10" stroke="#d8d8d8" fill="none"/><rect x="0.7" y="3.7" width="11.6" height="8.6" fill="none" stroke="#d8d8d8" stroke-width="1.3"/><path d="M3 6.5H10M3 9.5H10" stroke="#d8d8d8" stroke-width="1.2"/><path d="M13.5 10.5V13.5H10.5z" fill="#2ecc71"/></svg>
<div class="b" style="left:32.2px;top:443px;width:199.8px;height:17.6px;background:#262626;border-radius:2.5px;"></div>
<div class="t" style="top:443.5px;line-height:17px;font-size:13px;color:#e6e6e6;left:35px;letter-spacing:-0.73px;">No Project Set...</div>
<svg class="b" style="left:218.5px;top:450px;" width="8" height="5" viewBox="0 0 8 5"><path d="M0.5 0.5L4 4L7.5 0.5" fill="none" stroke="#cfcfcf" stroke-width="1.1"/></svg>
<div class="b" style="left:421px;top:442.5px;width:18.5px;height:18.8px;background:#333;border-radius:4px;border:1px solid #282828;box-sizing:border-box;box-shadow:inset 0 1px 0 #4c4c4c;"></div>
<svg class="b" style="left:424px;top:445.5px;" width="13" height="13" viewBox="0 0 13 13"><path d="M0 2.2A1 1 0 0 1 1 1.2H5L6.3 2.8H12A1 1 0 0 1 13 3.8V4.6H0z" fill="#bcbcbc"/><rect x="0" y="5.3" width="13" height="6.5" rx="0.8" fill="#d4d4d4"/></svg>
<div class="b" style="left:443.5px;top:442.5px;width:18.5px;height:18.8px;background:#333;border-radius:4px;border:1px solid #282828;box-sizing:border-box;box-shadow:inset 0 1px 0 #4c4c4c;"></div>
<svg class="b" style="left:446.5px;top:445.5px;" width="13" height="13" viewBox="0 0 13 13"><rect x="0.6" y="1.5" width="11.8" height="8" fill="none" stroke="#d8d8d8" stroke-width="1.2"/><rect x="0" y="10.3" width="13" height="1.6" fill="#d8d8d8"/></svg>
<div class="b" style="left:466.5px;top:442.5px;width:19px;height:18.8px;background:#333;border-radius:4px;border:1px solid #282828;box-sizing:border-box;box-shadow:inset 0 1px 0 #4c4c4c;"></div>
<svg class="b" style="left:469.5px;top:445.5px;" width="13" height="13" viewBox="0 0 13 13"><path d="M2 3.5H11M4.5 3V1.5H8.5V3" stroke="#d8d8d8" stroke-width="1.3" fill="none"/><path d="M3 4.5H10V12.5H3z" fill="#d8d8d8"/><path d="M5.2 6V11M7.8 6V11" stroke="#353535" stroke-width="1"/></svg>
<div class="b" style="left:6px;top:468.7px;width:482px;height:1.5px;background:#2ecc71;"></div>
<div class="b" style="left:6px;top:470.2px;width:482px;height:20.8px;background:#1c1c1c;"></div>
<div class="b" style="left:6px;top:470.5px;width:95px;height:20.5px;background:#444;border-radius:4px 4px 0 0;"></div>
<div class="t" style="top:471.8px;line-height:17px;font-size:13px;color:#e6e6e6;left:11.5px;letter-spacing:-0.17px;">Attribute Editor</div>
<div class="b" style="left:6px;top:491px;width:482px;height:533px;background:#444;"></div>
<div class="b" style="left:8px;top:493.2px;width:377.7px;height:19.8px;background:#262626;border-radius:10px;"></div>
<svg class="b" style="left:11px;top:496.5px;" width="14" height="14" viewBox="0 0 14 14"><circle cx="5.7" cy="5.7" r="4.6" fill="none" stroke="#d0d0d0" stroke-width="1.3"/><path d="M9.2 9.2L13 13" stroke="#d0d0d0" stroke-width="1.5"/></svg>
<div class="t" style="top:495px;line-height:17px;font-size:13px;color:#8c8c8c;left:32px;letter-spacing:-0.46px;">Enter an Attribute name</div>
<div class="b" style="left:394.2px;top:493.2px;width:22.5px;height:19.5px;background:#2c2c2c;border-radius:2.5px;"></div>
<div class="t" style="top:495px;line-height:17px;font-size:13px;color:#e0e0e0;left:396.5px;letter-spacing:-0.29px;">3/4</div>
<div class="b" style="left:420.3px;top:493.4px;width:19.1px;height:19.3px;background:#333;border-radius:4px;border:1px solid #282828;box-sizing:border-box;box-shadow:inset 0 1px 0 #4c4c4c;"></div>
<svg class="b" style="left:422.8px;top:495.5px;" width="15" height="15" viewBox="0 0 15 15"><circle cx="6" cy="6" r="5.200" fill="none" stroke="#a8a8a8" stroke-width="1.100"/><circle cx="6" cy="6" r="2.300" fill="none" stroke="#a8a8a8" stroke-width="1.100"/><path d="M6.500 6.500L14 9.500L11 10.800L13.800 13.800L12.800 14.800L10 12L8.500 14.500z" fill="#d8d8d8"/></svg>
<div class="b" style="left:443.6px;top:493.4px;width:18.6px;height:19.3px;background:#333;border-radius:4px;border:1px solid #282828;box-sizing:border-box;box-shadow:inset 0 1px 0 #4c4c4c;"></div>
<svg class="b" style="left:446px;top:496px;" width="14" height="14" viewBox="0 0 14 14"><path d="M1 2.500H7.500M3.500 6.500H10M5.500 10.500H10" stroke="#dcdcdc" stroke-width="2.200"/><path d="M10.800 5.500V7.500H9.500M10.800 9.500V11.500H9.500" stroke="#dcdcdc" stroke-width="1" fill="none"/><path d="M11.500 -0.500V5M8.800 2.200H14.200" stroke="#dcdcdc" stroke-width="1.300"/></svg>
<div class="b" style="left:465.6px;top:493.4px;width:18.6px;height:19.3px;background:#333;border-radius:4px;border:1px solid #282828;box-sizing:border-box;box-shadow:inset 0 1px 0 #4c4c4c;"></div>
<svg class="b" style="left:467.8px;top:498px;" width="15" height="10.5" viewBox="0 0 15 10.5"><path d="M0.200 5.200L4 0.100H14.400V10.200H4z" fill="#d8d8d8"/><path d="M6.300 2.200L12 8.200M12 2.200L6.300 8.200" stroke="#2c2c2c" stroke-width="1.500"/></svg>
<div class="b" style="left:6px;top:518.3px;width:470px;height:505.7px;background:#2a2a2a;"></div>
<div class="b" style="left:476.5px;top:516.5px;width:9px;height:507.5px;background:#4e4e4e;border-radius:4.5px;"></div>
<div class="b" style="left:6px;top:519px;width:468.2px;height:23px;background:#4a4a4a;border-top:1.5px solid #f3e163;border-left:4px solid #fbe877;border-right:4px solid #fbe877;box-sizing:border-box;border-radius:3px 3px 0 0;"></div>
<svg class="b" style="left:15.5px;top:529.25px;" width="7" height="4.5" viewBox="0 0 7 4.5"><path d="M0.5 0.5L3.5 3.5L6.5 0.5" fill="none" stroke="#9a9a9a" stroke-width="1.1"/></svg>
<div class="b" style="left:28px;top:522px;width:18px;height:18px;background:#2a2a2a;border-radius:3px;"></div>
<svg class="b" style="left:30.5px;top:526px;" width="13" height="10" viewBox="0 0 13 10"><path d="M0.5 5C3 1 10 1 12.5 5C10 9 3 9 0.5 5z" fill="none" stroke="#d0d0d0" stroke-width="1.2"/><circle cx="6.5" cy="5" r="2" fill="#d0d0d0"/></svg>
<svg class="b" style="left:49.5px;top:525.5px;" width="11" height="11" viewBox="0 0 11 11"><circle cx="5.5" cy="5.5" r="4.1" fill="none" stroke="#6a6a6a" stroke-width="1.1"/></svg>
<svg class="b" style="left:67px;top:525px;" width="13" height="13" viewBox="0 0 13 13"><rect x="0.3" y="0.8" width="1.8" height="1.8" fill="#f0dc6a"/><rect x="5.3" y="0.8" width="1.8" height="1.8" fill="#f0dc6a"/><rect x="10.3" y="0.8" width="1.8" height="1.8" fill="#f0dc6a"/><rect x="0.3" y="5.8" width="1.8" height="1.8" fill="#f0dc6a"/><rect x="5.3" y="5.8" width="1.8" height="1.8" fill="#f0dc6a"/><rect x="10.3" y="5.8" width="1.8" height="1.8" fill="#f0dc6a"/><rect x="0.3" y="10.8" width="1.8" height="1.8" fill="#f0dc6a"/><rect x="5.3" y="10.8" width="1.8" height="1.8" fill="#f0dc6a"/><rect x="10.3" y="10.8" width="1.8" height="1.8" fill="#f0dc6a"/></svg>
<div class="t" style="top:523px;line-height:17px;font-size:13px;color:#e8e8e8;left:87px;letter-spacing:-0.28px;">Duplicator</div>
<div class="b" style="left:365.4px;top:522.5px;width:16.9px;height:16.9px;background:#333;border-radius:4px;border:1px solid #272727;box-sizing:border-box;box-shadow:inset 0 1px 0 #4c4c4c;"></div>
<svg class="b" style="left:367.5px;top:525px;" width="13" height="13" viewBox="0 0 13 13"><path d="M0.600 3H5.700M0.600 9H5.700M7.700 6H12.500" stroke="#e6e6e6" stroke-width="2"/><path d="M5.700 3H6.700V9H5.700" stroke="#8a8a8a" stroke-width="0.800" fill="none"/><path d="M13.700 10.700V13.700H10.700z" fill="#5fd0a5"/></svg>
<div class="b" style="left:386.4px;top:522.5px;width:20.3px;height:16.9px;background:#333;border-radius:4px;border:1px solid #272727;box-sizing:border-box;box-shadow:inset 0 1px 0 #4c4c4c;"></div>
<div class="b" style="left:396px;top:523.5px;width:1px;height:14.9px;background:#272727;"></div>
<svg class="b" style="left:388px;top:526.5px;" width="18" height="9" viewBox="0 0 18 9"><path d="M0.100 4.500L2.700 1.400H5.900V7.600H2.700z" fill="#e2c766"/><path d="M16.700 4.500L14.100 1.400H11.300V7.600H14.100z" fill="#7a7a7a"/></svg>
<div class="b" style="left:410.4px;top:522.5px;width:17px;height:16.9px;background:#333;border-radius:4px;border:1px solid #272727;box-sizing:border-box;box-shadow:inset 0 1px 0 #4c4c4c;"></div>
<svg class="b" style="left:412.9px;top:524.5px;" width="12" height="13" viewBox="0 0 12 13"><path d="M3.400 0.500H8.600V1.500L7.700 2.300V5.300L9.700 7.500V8.300H2.300V7.500L4.300 5.300V2.300L3.400 1.500z" fill="#dcdcdc"/><path d="M6 8.300V13" stroke="#dcdcdc" stroke-width="1.100"/></svg>
<div class="b" style="left:430.4px;top:522.5px;width:16.9px;height:16.9px;background:#333;border-radius:4px;border:1px solid #272727;box-sizing:border-box;box-shadow:inset 0 1px 0 #4c4c4c;"></div>
<svg class="b" style="left:432.4px;top:524.5px;" width="13" height="13" viewBox="0 0 13 13"><path d="M8.700 5.500C9 8 9.700 8.700 12.200 9C9.700 9.300 9 10 8.700 12.500C8.400 10 7.700 9.300 5.200 9C7.700 8.700 8.400 8 8.700 5.500z" fill="#e6e6e6"/><circle cx="3.200" cy="2.200" r="1.100" fill="#bdbdbd"/><circle cx="9.500" cy="2.700" r="1.100" fill="#bdbdbd"/><circle cx="3" cy="8.300" r="1.100" fill="#bdbdbd"/><path d="M14.300 10.700V13.700H11.300z" fill="#5fd0a5"/></svg>
<div class="b" style="left:450.4px;top:522.5px;width:16.9px;height:16.9px;background:#333;border-radius:4px;border:1px solid #272727;box-sizing:border-box;box-shadow:inset 0 1px 0 #4c4c4c;"></div>
<svg class="b" style="left:454.8px;top:526.9px;" width="8.1" height="8.1" viewBox="0 0 8.1 8.1"><path d="M0 0L8.100 8.100M8.100 0L0 8.100" stroke="#dcdcdc" stroke-width="1"/></svg>
<div class="b" style="left:6.6px;top:542px;width:1px;height:482px;background:#2bbd68;"></div>
<div class="b" style="left:7.5px;top:542px;width:468.5px;height:22px;background:#2a2a2a;"></div>
<div class="b" style="left:7.5px;top:564px;width:466.5px;height:111px;background:#3a3a3a;border-radius:0 3px 0 0;"></div>
<div class="b" style="left:7.5px;top:677px;width:466.5px;height:114px;background:#3a3a3a;"></div>
<div class="b" style="left:7.5px;top:816px;width:466.5px;height:118px;background:#353535;"></div>
<div class="b" style="left:7.5px;top:934px;width:466.5px;height:90px;background:#3a3a3a;"></div>
<div class="b" style="left:184px;top:544px;width:96px;height:20px;background:#444;border-radius:4px 4px 0 0;"></div>
<div class="t" style="top:545px;line-height:17px;font-size:13px;color:#e8e8e8;left:216px;letter-spacing:-1.2px;">Shape</div>
<div class="t" style="top:545px;line-height:17px;font-size:13px;color:#9a9a9a;left:311px;letter-spacing:-0.89px;">Masks</div>
<div class="t" style="top:545px;line-height:16px;font-size:12px;color:#8a8a8a;left:76.5px;width:600px;text-align:center;">|</div>
<div class="t" style="top:545px;line-height:17px;font-size:13px;color:#9a9a9a;left:398px;letter-spacing:-0.83px;">Advanced</div>
<svg class="b" style="left:13.5px;top:569.5px;" width="11" height="11" viewBox="0 0 11 11"><circle cx="5.5" cy="5.5" r="4.1" fill="none" stroke="#858585" stroke-width="1.1"/></svg><div class="t" style="top:567px;line-height:17px;font-size:13px;color:#dedede;left:30px;letter-spacing:-0.54px;">Position</div>
<div class="b" style="left:177px;top:567px;width:94px;height:16px;background:#2b2b2b;border-radius:2px;"></div><div class="t" style="top:567px;line-height:16px;font-size:12px;color:#6a6a6a;left:181.5px;letter-spacing:-0.5px;">X</div><div class="t" style="top:566.5px;line-height:17px;font-size:13px;color:#e0e0e0;left:194px;letter-spacing:-0.3px;">0.0</div>
<div class="b" style="left:277px;top:567px;width:94px;height:16px;background:#2b2b2b;border-radius:2px;"></div><div class="t" style="top:567px;line-height:16px;font-size:12px;color:#6a6a6a;left:281.5px;letter-spacing:-0.5px;">Y</div><div class="t" style="top:566.5px;line-height:17px;font-size:13px;color:#e0e0e0;left:294px;letter-spacing:-0.3px;">0.0</div>
<svg class="b" style="left:13.5px;top:591.5px;" width="11" height="11" viewBox="0 0 11 11"><circle cx="5.5" cy="5.5" r="4.1" fill="none" stroke="#858585" stroke-width="1.1"/></svg><div class="t" style="top:589px;line-height:17px;font-size:13px;color:#dedede;left:30px;letter-spacing:-0.49px;">Rotation</div>
<div class="b" style="left:177px;top:589px;width:94px;height:16px;background:#2b2b2b;border-radius:2px;"></div><div class="t" style="top:589px;line-height:16px;font-size:12px;color:#6a6a6a;left:181.5px;letter-spacing:-0.5px;">Z</div><div class="t" style="top:588.5px;line-height:17px;font-size:13px;color:#e0e0e0;left:194px;letter-spacing:-0.3px;">0.0</div>
<svg class="b" style="left:13.5px;top:613.5px;" width="11" height="11" viewBox="0 0 11 11"><circle cx="5.5" cy="5.5" r="4.1" fill="none" stroke="#858585" stroke-width="1.1"/></svg><div class="t" style="top:611px;line-height:17px;font-size:13px;color:#dedede;left:30px;letter-spacing:-1.2px;">Scale</div>
<div class="b" style="left:177px;top:611px;width:94px;height:16px;background:#2b2b2b;border-radius:2px;"></div><div class="t" style="top:611px;line-height:16px;font-size:12px;color:#6a6a6a;left:181.5px;letter-spacing:-0.5px;">X</div><div class="t" style="top:610.5px;line-height:17px;font-size:13px;color:#e0e0e0;left:194px;letter-spacing:-0.3px;">1.0</div>
<div class="b" style="left:277px;top:611px;width:94px;height:16px;background:#2b2b2b;border-radius:2px;"></div><div class="t" style="top:611px;line-height:16px;font-size:12px;color:#6a6a6a;left:281.5px;letter-spacing:-0.5px;">Y</div><div class="t" style="top:610.5px;line-height:17px;font-size:13px;color:#e0e0e0;left:294px;letter-spacing:-0.3px;">1.0</div>
<div class="b" style="left:377px;top:611px;width:15.5px;height:16px;background:#2b2b2b;border-radius:3px;border:1px solid #222;box-sizing:border-box;"></div>
<svg class="b" style="left:381px;top:613px;" width="8" height="6" viewBox="0 0 8 6"><path d="M1.5 6V3A2.5 2.5 0 0 1 6.5 3V6" fill="none" stroke="#9a9a9a" stroke-width="1.2"/></svg>
<svg class="b" style="left:13.5px;top:635.5px;" width="11" height="11" viewBox="0 0 11 11"><circle cx="5.5" cy="5.5" r="4.1" fill="none" stroke="#858585" stroke-width="1.1"/></svg><div class="t" style="top:633px;line-height:17px;font-size:13px;color:#dedede;left:30px;letter-spacing:-1.2px;">Skew</div>
<div class="b" style="left:177px;top:633px;width:94px;height:16px;background:#2b2b2b;border-radius:2px;"></div><div class="t" style="top:633px;line-height:16px;font-size:12px;color:#6a6a6a;left:181.5px;letter-spacing:-0.5px;">X</div><div class="t" style="top:632.5px;line-height:17px;font-size:13px;color:#e0e0e0;left:194px;letter-spacing:-0.3px;">0.0</div>
<div class="b" style="left:277px;top:633px;width:94px;height:16px;background:#2b2b2b;border-radius:2px;"></div><div class="t" style="top:633px;line-height:16px;font-size:12px;color:#6a6a6a;left:281.5px;letter-spacing:-0.5px;">Y</div><div class="t" style="top:632.5px;line-height:17px;font-size:13px;color:#e0e0e0;left:294px;letter-spacing:-0.3px;">0.0</div>
<svg class="b" style="left:13.5px;top:657.5px;" width="11" height="11" viewBox="0 0 11 11"><circle cx="5.5" cy="5.5" r="4.1" fill="none" stroke="#858585" stroke-width="1.1"/></svg><div class="t" style="top:655px;line-height:17px;font-size:13px;color:#dedede;left:30px;letter-spacing:-0.48px;">Pivot</div>
<svg class="b" style="left:13.5px;top:684.5px;" width="11" height="11" viewBox="0 0 11 11"><circle cx="5.5" cy="5.5" r="4.1" fill="none" stroke="#858585" stroke-width="1.1"/></svg><div class="t" style="top:682px;line-height:17px;font-size:13px;color:#dedede;left:30px;letter-spacing:-0.51px;">Opacity</div>
<svg class="b" style="left:13.5px;top:706.5px;" width="11" height="11" viewBox="0 0 11 11"><circle cx="5.5" cy="5.5" r="4.1" fill="none" stroke="#858585" stroke-width="1.1"/></svg><div class="t" style="top:704px;line-height:17px;font-size:13px;color:#dedede;left:30px;letter-spacing:-0.71px;">Blend Mode</div>
<div class="t" style="top:726px;line-height:17px;font-size:13px;color:#dedede;left:30px;letter-spacing:-0.52px;">Deformers</div>
<div class="t" style="top:748px;line-height:17px;font-size:13px;color:#dedede;left:30px;letter-spacing:-0.4px;">Filters</div>
<svg class="b" style="left:13.5px;top:772.5px;" width="11" height="11" viewBox="0 0 11 11"><circle cx="5.5" cy="5.5" r="4.1" fill="none" stroke="#858585" stroke-width="1.1"/></svg><div class="t" style="top:770px;line-height:17px;font-size:13px;color:#dedede;left:30px;letter-spacing:-0.28px;">Motion Blur</div>
<div class="b" style="left:7.5px;top:792px;width:466.5px;height:24px;background:#333;"></div>
<div class="t" style="top:797px;line-height:17px;font-size:13px;color:#dedede;left:30px;letter-spacing:-0.88px;">Input Shapes</div>
<div class="t" style="top:821px;line-height:17px;font-size:13px;color:#dedede;left:30px;letter-spacing:-0.14px;">Distribution</div>
<svg class="b" style="left:29.5px;top:845.5px;" width="11" height="11" viewBox="0 0 11 11"><circle cx="5.5" cy="5.5" r="4.1" fill="none" stroke="#858585" stroke-width="1.1"/></svg><div class="t" style="top:843px;line-height:17px;font-size:13px;color:#dedede;left:46px;letter-spacing:-0.55px;">Count</div>
<svg class="b" style="left:29.5px;top:867.5px;" width="11" height="11" viewBox="0 0 11 11"><circle cx="5.5" cy="5.5" r="4.1" fill="none" stroke="#858585" stroke-width="1.1"/></svg><div class="t" style="top:865px;line-height:17px;font-size:13px;color:#dedede;left:46px;letter-spacing:-1.2px;">Size</div>
<svg class="b" style="left:29.5px;top:889.5px;" width="11" height="11" viewBox="0 0 11 11"><circle cx="5.5" cy="5.5" r="4.1" fill="none" stroke="#858585" stroke-width="1.1"/></svg><div class="t" style="top:887px;line-height:17px;font-size:13px;color:#dedede;left:46px;letter-spacing:-0.29px;">Direction</div>
<svg class="b" style="left:29.5px;top:911.5px;" width="11" height="11" viewBox="0 0 11 11"><circle cx="5.5" cy="5.5" r="4.1" fill="none" stroke="#858585" stroke-width="1.1"/></svg><div class="t" style="top:909px;line-height:17px;font-size:13px;color:#dedede;left:46px;letter-spacing:-0.93px;">Size Mode</div>
<svg class="b" style="left:13.5px;top:939.5px;" width="11" height="11" viewBox="0 0 11 11"><circle cx="5.5" cy="5.5" r="4.1" fill="none" stroke="#858585" stroke-width="1.1"/></svg><div class="t" style="top:937px;line-height:17px;font-size:13px;color:#dedede;left:30px;letter-spacing:-0.8px;">Shape Position</div>
<svg class="b" style="left:13.5px;top:961.5px;" width="11" height="11" viewBox="0 0 11 11"><circle cx="5.5" cy="5.5" r="4.1" fill="none" stroke="#858585" stroke-width="1.1"/></svg><div class="t" style="top:959px;line-height:17px;font-size:13px;color:#dedede;left:30px;letter-spacing:-0.74px;">Shape Rotation</div>
<div class="b" style="left:9px;top:978.7px;width:131px;height:21.3px;background:#4c4c4c;border-radius:4px;"></div>
<svg class="b" style="left:13.5px;top:983.5px;" width="11" height="11" viewBox="0 0 11 11"><circle cx="5.5" cy="5.5" r="4.1" fill="none" stroke="#858585" stroke-width="1.1"/></svg><div class="t" style="top:981px;line-height:17px;font-size:13px;color:#dedede;left:30px;letter-spacing:-1.2px;">Shape Scale</div>
<div class="b" style="left:177px;top:981px;width:94px;height:16px;background:#2b2b2b;border-radius:2px;"></div><div class="t" style="top:981px;line-height:16px;font-size:12px;color:#6a6a6a;left:181.5px;letter-spacing:-0.5px;">X</div><div class="t" style="top:980.5px;line-height:17px;font-size:13px;color:#e0e0e0;left:194px;letter-spacing:-0.3px;">0.4</div>
<div class="b" style="left:277px;top:981px;width:94px;height:16px;background:#2b2b2b;border-radius:2px;"></div><div class="t" style="top:981px;line-height:16px;font-size:12px;color:#6a6a6a;left:281.5px;letter-spacing:-0.5px;">Y</div><div class="t" style="top:980.5px;line-height:17px;font-size:13px;color:#e0e0e0;left:294px;letter-spacing:-0.3px;">0.4</div>
<svg class="b" style="left:13.5px;top:1005.5px;" width="11" height="11" viewBox="0 0 11 11"><circle cx="5.5" cy="5.5" r="4.1" fill="none" stroke="#858585" stroke-width="1.1"/></svg><div class="t" style="top:1003px;line-height:17px;font-size:13px;color:#dedede;left:30px;letter-spacing:-1.2px;">Shape Skew</div>
<div class="b" style="left:177px;top:1003.5px;width:94px;height:15.5px;background:#2b2b2b;border-radius:2px;"></div><div class="t" style="top:1003.25px;line-height:16px;font-size:12px;color:#6a6a6a;left:181.5px;letter-spacing:-0.5px;">X</div><div class="t" style="top:1002.75px;line-height:17px;font-size:13px;color:#e0e0e0;left:194px;letter-spacing:-0.3px;">0.0</div>
<div class="b" style="left:277px;top:1003.5px;width:94px;height:15.5px;background:#2b2b2b;border-radius:2px;"></div><div class="t" style="top:1003.25px;line-height:16px;font-size:12px;color:#6a6a6a;left:281.5px;letter-spacing:-0.5px;">Y</div><div class="t" style="top:1002.75px;line-height:17px;font-size:13px;color:#e0e0e0;left:294px;letter-spacing:-0.3px;">0.0</div>
<div class="b" style="left:4px;top:974.2px;width:139px;height:29.6px;border-radius:1.5px;border:2.6px solid #b4e61e;box-sizing:border-box;"></div>
<div class="b" style="left:494px;top:85px;width:30px;height:535px;background:#444;"></div>
<div class="b" style="left:494px;top:85px;width:30px;height:9.7px;background:#3a3a3a;"></div>
<div class="b" style="left:503px;top:89.5px;width:1.5px;height:1.5px;background:#8a8a8a;"></div>
<div class="b" style="left:507.5px;top:89.5px;width:1.5px;height:1.5px;background:#8a8a8a;"></div>
<div class="b" style="left:512px;top:89.5px;width:1.5px;height:1.5px;background:#8a8a8a;"></div>
<div class="b" style="left:495.2px;top:96px;width:27.6px;height:27.5px;background:#272727;border-radius:3.5px;"></div>
<svg class="b" style="left:499px;top:100px;" width="20" height="20" viewBox="0 0 20 20"><path d="M5.5 1.5V16L9 12.5L11.8 18.5L14 17.5L11.2 11.8H16z" fill="none" stroke="#2ecc71" stroke-width="1.4" stroke-linejoin="round"/></svg>
<svg class="b" style="left:499px;top:130px;" width="20" height="20" viewBox="0 0 20 20"><path d="M4.5 0.3V19.5L9.2 13.8H18.8z" fill="#e8e8e8"/></svg>
<svg class="b" style="left:499px;top:160px;" width="20" height="20" viewBox="0 0 20 20"><path d="M2 2L9 4L15.5 12L12 15.5L4 9z" fill="#e8e8e8"/><path d="M13.2 16.8L16.8 13.2L18.3 14.7L14.7 18.3z" fill="#e8e8e8"/><path d="M2.5 2.5L9 9" stroke="#3b3b3b" stroke-width="1"/><circle cx="9.5" cy="9.5" r="1.3" fill="#3b3b3b"/></svg>
<svg class="b" style="left:499px;top:189px;" width="20" height="20" viewBox="0 0 20 20"><path d="M2 17.5L3 13.5L13.5 3L16.5 6L6 16.5z" fill="#e8e8e8"/><path d="M14.5 2L16 0.7A1 1 0 0 1 17.5 0.7L18.8 2A1 1 0 0 1 18.8 3.5L17.5 5z" fill="#e8e8e8"/><path d="M0.7 19.3L2 17.5" stroke="#e8e8e8" stroke-width="1"/></svg>
<svg class="b" style="left:499px;top:219px;" width="20" height="20" viewBox="0 0 20 20"><rect x="0" y="5" width="13.5" height="11.5" rx="1.5" fill="#e8e8e8"/><path d="M14 10.5L20.5 6V16L14 12z" fill="#e8e8e8"/><rect x="2.5" y="2.3" width="6" height="1.5" fill="#e8e8e8"/><circle cx="3.3" cy="8" r="1" fill="#333"/></svg>
<svg class="b" style="left:499px;top:250px;" width="20" height="20" viewBox="0 0 20 20"><path d="M2.5 17.5L17.5 2.5" stroke="#e8e8e8" stroke-width="1.1"/></svg>
<svg class="b" style="left:499px;top:280px;" width="20" height="20" viewBox="0 0 20 20"><path d="M3 2.5H17V6H11.8V18H8.2V6H3z" fill="#e8e8e8"/></svg>
<svg class="b" style="left:499px;top:310px;" width="20" height="20" viewBox="0 0 20 20"><path d="M2 3.2V12.7L10 8z" fill="#e8e8e8"/><path d="M3 2.6L15 2L18 17.7H2V13" stroke="#e8e8e8" stroke-width="1" fill="none" stroke-dasharray="2.2 1.6"/><rect x="14" y="1" width="2.2" height="2.2" fill="#e8e8e8"/><rect x="17" y="16.6" width="2.2" height="2.2" fill="#e8e8e8"/><rect x="0.9" y="16.6" width="2.2" height="2.2" fill="#e8e8e8"/></svg>
<svg class="b" style="left:499px;top:340px;" width="20" height="20" viewBox="0 0 20 20"><rect x="3" y="3" width="14" height="14" fill="#e8e8e8"/></svg>
<svg class="b" style="left:499px;top:370px;" width="20" height="20" viewBox="0 0 20 20"><circle cx="10" cy="10" r="8" fill="#e8e8e8"/></svg>
<svg class="b" style="left:499px;top:400px;" width="20" height="20" viewBox="0 0 20 20"><path d="M10 1.5L18.5 8L15.3 18H4.7L1.5 8z" fill="#e8e8e8"/></svg>
<svg class="b" style="left:499px;top:429px;" width="20" height="20" viewBox="0 0 20 20"><path d="M10 1L12.6 7.2L19.3 7.8L14.2 12.2L15.8 18.8L10 15.3L4.2 18.8L5.8 12.2L0.7 7.8L7.4 7.2z" fill="#e8e8e8"/></svg>
<svg class="b" style="left:499px;top:459px;" width="20" height="20" viewBox="0 0 20 20"><path d="M16.4 11A6.4 6.4 0 1 0 10 17.4" fill="none" stroke="#e8e8e8" stroke-width="3.3"/></svg>
<svg class="b" style="left:499px;top:489px;" width="20" height="20" viewBox="0 0 20 20"><path d="M10 1C10.8 6.5 13.5 9.2 19 10C13.5 10.8 10.8 13.5 10 19C9.2 13.5 6.5 10.8 1 10C6.5 9.2 9.2 6.5 10 1z" fill="#e8e8e8"/></svg>
<svg class="b" style="left:499px;top:519px;" width="20" height="20" viewBox="0 0 20 20"><rect x="8.4" y="0.8" width="3.2" height="4.4" fill="#e8e8e8" transform="rotate(0 10 10)"/><rect x="8.4" y="0.8" width="3.2" height="4.4" fill="#e8e8e8" transform="rotate(45 10 10)"/><rect x="8.4" y="0.8" width="3.2" height="4.4" fill="#e8e8e8" transform="rotate(90 10 10)"/><rect x="8.4" y="0.8" width="3.2" height="4.4" fill="#e8e8e8" transform="rotate(135 10 10)"/><rect x="8.4" y="0.8" width="3.2" height="4.4" fill="#e8e8e8" transform="rotate(180 10 10)"/><rect x="8.4" y="0.8" width="3.2" height="4.4" fill="#e8e8e8" transform="rotate(225 10 10)"/><rect x="8.4" y="0.8" width="3.2" height="4.4" fill="#e8e8e8" transform="rotate(270 10 10)"/><rect x="8.4" y="0.8" width="3.2" height="4.4" fill="#e8e8e8" transform="rotate(315 10 10)"/><circle cx="10" cy="10" r="5" fill="none" stroke="#e8e8e8" stroke-width="3.4"/></svg>
<svg class="b" style="left:499px;top:549px;" width="20" height="20" viewBox="0 0 20 20"><path d="M-0.5 10L6 3.8V8.3H14V3.8L20.5 10L14 16.2V11.700H6V16.2z" fill="#e8e8e8"/></svg>
<svg class="b" style="left:502px;top:606px;" width="14" height="10" viewBox="0 0 14 10"><path d="M1 0.5L5.5 5L1 9.5M7.5 0.5L12 5L7.5 9.5" fill="none" stroke="#a8a8a8" stroke-width="1.1"/></svg>
<!-- p_view -->
<div class="b" style="left:530px;top:85.5px;width:1057px;height:21.5px;background:#1c1c1c;"></div>
<div class="b" style="left:530px;top:85.5px;width:87px;height:21.5px;background:#444;border-radius:4px 4px 0 0;"></div>
<div class="t" style="top:88px;line-height:17px;font-size:13px;color:#e6e6e6;left:535px;letter-spacing:-0.55px;">Composition 1</div>
<div class="b" style="left:530px;top:107px;width:1057px;height:513px;background:#444;"></div>
<div class="b" style="left:550px;top:127px;width:1037px;height:471px;background:#000;"></div>
<div class="b" style="left:786.8px;top:193px;width:635.6px;height:357.5px;background:#0a0a0a;"></div>
<svg class="b" style="left:530px;top:107px;" width="1057" height="20" viewBox="0 0 1057 20"><rect x="31.26" y="17" width="1" height="3" fill="#808080"/><rect x="44.5" y="12.5" width="1" height="7.5" fill="#808080"/><rect x="57.74" y="17" width="1" height="3" fill="#808080"/><rect x="70.98" y="17" width="1" height="3" fill="#808080"/><rect x="84.22" y="17" width="1" height="3" fill="#808080"/><rect x="97.46" y="17" width="1" height="3" fill="#808080"/><rect x="110.7" y="12.5" width="1" height="7.5" fill="#808080"/><rect x="123.94" y="17" width="1" height="3" fill="#808080"/><rect x="137.18" y="17" width="1" height="3" fill="#808080"/><rect x="150.42" y="17" width="1" height="3" fill="#808080"/><rect x="163.66" y="17" width="1" height="3" fill="#808080"/><rect x="176.9" y="12.5" width="1" height="7.5" fill="#808080"/><rect x="190.14" y="17" width="1" height="3" fill="#808080"/><rect x="203.38" y="17" width="1" height="3" fill="#808080"/><rect x="216.62" y="17" width="1" height="3" fill="#808080"/><rect x="229.86" y="17" width="1" height="3" fill="#808080"/><rect x="243.1" y="12.5" width="1" height="7.5" fill="#808080"/><rect x="256.34" y="17" width="1" height="3" fill="#808080"/><rect x="269.58" y="17" width="1" height="3" fill="#808080"/><rect x="282.82" y="17" width="1" height="3" fill="#808080"/><rect x="296.06" y="17" width="1" height="3" fill="#808080"/><rect x="309.3" y="12.5" width="1" height="7.5" fill="#808080"/><rect x="322.54" y="17" width="1" height="3" fill="#808080"/><rect x="335.78" y="17" width="1" height="3" fill="#808080"/><rect x="349.02" y="17" width="1" height="3" fill="#808080"/><rect x="362.26" y="17" width="1" height="3" fill="#808080"/><rect x="375.5" y="12.5" width="1" height="7.5" fill="#808080"/><rect x="388.74" y="17" width="1" height="3" fill="#808080"/><rect x="401.98" y="17" width="1" height="3" fill="#808080"/><rect x="415.22" y="17" width="1" height="3" fill="#808080"/><rect x="428.46" y="17" width="1" height="3" fill="#808080"/><rect x="441.7" y="12.5" width="1" height="7.5" fill="#808080"/><rect x="454.94" y="17" width="1" height="3" fill="#808080"/><rect x="468.18" y="17" width="1" height="3" fill="#808080"/><rect x="481.42" y="17" width="1" height="3" fill="#808080"/><rect x="494.66" y="17" width="1" height="3" fill="#808080"/><rect x="507.9" y="12.5" width="1" height="7.5" fill="#808080"/><rect x="521.14" y="17" width="1" height="3" fill="#808080"/><rect x="534.38" y="17" width="1" height="3" fill="#808080"/><rect x="547.62" y="17" width="1" height="3" fill="#808080"/><rect x="560.86" y="17" width="1" height="3" fill="#808080"/><rect x="574.1" y="12.5" width="1" height="7.5" fill="#808080"/><rect x="587.34" y="17" width="1" height="3" fill="#808080"/><rect x="600.58" y="17" width="1" height="3" fill="#808080"/><rect x="613.82" y="17" width="1" height="3" fill="#808080"/><rect x="627.06" y="17" width="1" height="3" fill="#808080"/><rect x="640.3" y="12.5" width="1" height="7.5" fill="#808080"/><rect x="653.54" y="17" width="1" height="3" fill="#808080"/><rect x="666.78" y="17" width="1" height="3" fill="#808080"/><rect x="680.02" y="17" width="1" height="3" fill="#808080"/><rect x="693.26" y="17" width="1" height="3" fill="#808080"/><rect x="706.5" y="12.5" width="1" height="7.5" fill="#808080"/><rect x="719.74" y="17" width="1" height="3" fill="#808080"/><rect x="732.98" y="17" width="1" height="3" fill="#808080"/><rect x="746.22" y="17" width="1" height="3" fill="#808080"/><rect x="759.46" y="17" width="1" height="3" fill="#808080"/><rect x="772.7" y="12.5" width="1" height="7.5" fill="#808080"/><rect x="785.94" y="17" width="1" height="3" fill="#808080"/><rect x="799.18" y="17" width="1" height="3" fill="#808080"/><rect x="812.42" y="17" width="1" height="3" fill="#808080"/><rect x="825.66" y="17" width="1" height="3" fill="#808080"/><rect x="838.9" y="12.5" width="1" height="7.5" fill="#808080"/><rect x="852.14" y="17" width="1" height="3" fill="#808080"/><rect x="865.38" y="17" width="1" height="3" fill="#808080"/><rect x="878.62" y="17" width="1" height="3" fill="#808080"/><rect x="891.86" y="17" width="1" height="3" fill="#808080"/><rect x="905.1" y="12.5" width="1" height="7.5" fill="#808080"/><rect x="918.34" y="17" width="1" height="3" fill="#808080"/><rect x="931.58" y="17" width="1" height="3" fill="#808080"/><rect x="944.82" y="17" width="1" height="3" fill="#808080"/><rect x="958.06" y="17" width="1" height="3" fill="#808080"/><rect x="971.3" y="12.5" width="1" height="7.5" fill="#808080"/><rect x="984.54" y="17" width="1" height="3" fill="#808080"/><rect x="997.78" y="17" width="1" height="3" fill="#808080"/><rect x="1011.02" y="17" width="1" height="3" fill="#808080"/><rect x="1024.26" y="17" width="1" height="3" fill="#808080"/><rect x="1037.5" y="12.5" width="1" height="7.5" fill="#808080"/><rect x="1050.74" y="17" width="1" height="3" fill="#808080"/></svg>
<div class="t" style="top:107.25px;line-height:14.5px;font-size:10.5px;color:#b4b4b4;left:275.8px;width:600px;text-align:center;letter-spacing:-0.2px;">-1600</div>
<div class="t" style="top:107.25px;line-height:14.5px;font-size:10.5px;color:#b4b4b4;left:342px;width:600px;text-align:center;letter-spacing:-0.2px;">-1400</div>
<div class="t" style="top:107.25px;line-height:14.5px;font-size:10.5px;color:#b4b4b4;left:408.2px;width:600px;text-align:center;letter-spacing:-0.2px;">-1200</div>
<div class="t" style="top:107.25px;line-height:14.5px;font-size:10.5px;color:#b4b4b4;left:474.4px;width:600px;text-align:center;letter-spacing:-0.2px;">-1000</div>
<div class="t" style="top:107.25px;line-height:14.5px;font-size:10.5px;color:#b4b4b4;left:540.6px;width:600px;text-align:center;letter-spacing:-0.2px;">-800</div>
<div class="t" style="top:107.25px;line-height:14.5px;font-size:10.5px;color:#b4b4b4;left:606.8px;width:600px;text-align:center;letter-spacing:-0.2px;">-600</div>
<div class="t" style="top:107.25px;line-height:14.5px;font-size:10.5px;color:#b4b4b4;left:673px;width:600px;text-align:center;letter-spacing:-0.2px;">-400</div>
<div class="t" style="top:107.25px;line-height:14.5px;font-size:10.5px;color:#b4b4b4;left:739.2px;width:600px;text-align:center;letter-spacing:-0.2px;">-200</div>
<div class="t" style="top:107.25px;line-height:14.5px;font-size:10.5px;color:#b4b4b4;left:805.4px;width:600px;text-align:center;letter-spacing:-0.2px;">0</div>
<div class="t" style="top:107.25px;line-height:14.5px;font-size:10.5px;color:#b4b4b4;left:871.6px;width:600px;text-align:center;letter-spacing:-0.2px;">200</div>
<div class="t" style="top:107.25px;line-height:14.5px;font-size:10.5px;color:#b4b4b4;left:937.8px;width:600px;text-align:center;letter-spacing:-0.2px;">400</div>
<div class="t" style="top:107.25px;line-height:14.5px;font-size:10.5px;color:#b4b4b4;left:1004px;width:600px;text-align:center;letter-spacing:-0.2px;">600</div>
<div class="t" style="top:107.25px;line-height:14.5px;font-size:10.5px;color:#b4b4b4;left:1070.2px;width:600px;text-align:center;letter-spacing:-0.2px;">800</div>
<div class="t" style="top:107.25px;line-height:14.5px;font-size:10.5px;color:#b4b4b4;left:1136.4px;width:600px;text-align:center;letter-spacing:-0.2px;">1000</div>
<div class="t" style="top:107.25px;line-height:14.5px;font-size:10.5px;color:#b4b4b4;left:1202.6px;width:600px;text-align:center;letter-spacing:-0.2px;">1200</div>
<div class="t" style="top:107.25px;line-height:14.5px;font-size:10.5px;color:#b4b4b4;left:1268.8px;width:600px;text-align:center;letter-spacing:-0.2px;">1400</div>
<div class="t" style="top:110px;line-height:15px;font-size:11px;color:#b4b4b4;left:535px;letter-spacing:-0.2px;">px</div>
<svg class="b" style="left:530px;top:127px;" width="20" height="471" viewBox="0 0 20 471"><rect x="17" y="456.74" width="3" height="1" fill="#808080"/><rect x="12.5" y="443.5" width="7.5" height="1" fill="#808080"/><rect x="17" y="430.26" width="3" height="1" fill="#808080"/><rect x="17" y="417.02" width="3" height="1" fill="#808080"/><rect x="17" y="403.78" width="3" height="1" fill="#808080"/><rect x="17" y="390.54" width="3" height="1" fill="#808080"/><rect x="12.5" y="377.3" width="7.5" height="1" fill="#808080"/><rect x="17" y="364.06" width="3" height="1" fill="#808080"/><rect x="17" y="350.82" width="3" height="1" fill="#808080"/><rect x="17" y="337.58" width="3" height="1" fill="#808080"/><rect x="17" y="324.34" width="3" height="1" fill="#808080"/><rect x="12.5" y="311.1" width="7.5" height="1" fill="#808080"/><rect x="17" y="297.86" width="3" height="1" fill="#808080"/><rect x="17" y="284.62" width="3" height="1" fill="#808080"/><rect x="17" y="271.38" width="3" height="1" fill="#808080"/><rect x="17" y="258.14" width="3" height="1" fill="#808080"/><rect x="12.5" y="244.9" width="7.5" height="1" fill="#808080"/><rect x="17" y="231.66" width="3" height="1" fill="#808080"/><rect x="17" y="218.42" width="3" height="1" fill="#808080"/><rect x="17" y="205.18" width="3" height="1" fill="#808080"/><rect x="17" y="191.94" width="3" height="1" fill="#808080"/><rect x="12.5" y="178.7" width="7.5" height="1" fill="#808080"/><rect x="17" y="165.46" width="3" height="1" fill="#808080"/><rect x="17" y="152.22" width="3" height="1" fill="#808080"/><rect x="17" y="138.98" width="3" height="1" fill="#808080"/><rect x="17" y="125.74" width="3" height="1" fill="#808080"/><rect x="12.5" y="112.5" width="7.5" height="1" fill="#808080"/><rect x="17" y="99.26" width="3" height="1" fill="#808080"/><rect x="17" y="86.02" width="3" height="1" fill="#808080"/><rect x="17" y="72.78" width="3" height="1" fill="#808080"/><rect x="17" y="59.54" width="3" height="1" fill="#808080"/><rect x="12.5" y="46.3" width="7.5" height="1" fill="#808080"/><rect x="17" y="33.06" width="3" height="1" fill="#808080"/><rect x="17" y="19.82" width="3" height="1" fill="#808080"/><rect x="17" y="6.58" width="3" height="1" fill="#808080"/></svg>
<div class="t" style="left:507.5px;top:166.8px;width:60px;height:14px;line-height:14px;text-align:center;font-size:10.5px;color:#b4b4b4;letter-spacing:-0.2px;transform:rotate(-90deg);">600</div>
<div class="t" style="left:507.5px;top:233px;width:60px;height:14px;line-height:14px;text-align:center;font-size:10.5px;color:#b4b4b4;letter-spacing:-0.2px;transform:rotate(-90deg);">400</div>
<div class="t" style="left:507.5px;top:299.2px;width:60px;height:14px;line-height:14px;text-align:center;font-size:10.5px;color:#b4b4b4;letter-spacing:-0.2px;transform:rotate(-90deg);">200</div>
<div class="t" style="left:507.5px;top:365.4px;width:60px;height:14px;line-height:14px;text-align:center;font-size:10.5px;color:#b4b4b4;letter-spacing:-0.2px;transform:rotate(-90deg);">0</div>
<div class="t" style="left:507.5px;top:431.6px;width:60px;height:14px;line-height:14px;text-align:center;font-size:10.5px;color:#b4b4b4;letter-spacing:-0.2px;transform:rotate(-90deg);">-200</div>
<div class="t" style="left:507.5px;top:497.8px;width:60px;height:14px;line-height:14px;text-align:center;font-size:10.5px;color:#b4b4b4;letter-spacing:-0.2px;transform:rotate(-90deg);">-400</div>
<div class="t" style="left:507.5px;top:564px;width:60px;height:14px;line-height:14px;text-align:center;font-size:10.5px;color:#b4b4b4;letter-spacing:-0.2px;transform:rotate(-90deg);">-600</div>
<div class="b" style="left:839px;top:322.3px;width:9px;height:9px;background:#fbe27a;"></div>
<div class="t" style="top:318.75px;line-height:16.5px;font-size:12.5px;color:#f4f4f4;left:851.4px;letter-spacing:-0.25px;">Duplicator</div>
<svg class="b" style="left:0px;top:0px;" width="1" height="1" viewBox="0 0 1 1"><defs><linearGradient id="ig" gradientUnits="userSpaceOnUse" x1="0" y1="0" x2="0" y2="68"><stop offset="0" stop-color="#2ff59a"/><stop offset="0.5" stop-color="#1fcfc6"/><stop offset="1" stop-color="#06a0ff"/></linearGradient></defs></svg>
<svg class="b" style="left:838.9px;top:338.2px;overflow:hidden;" width="68" height="68" viewBox="0 0 68 68"><path d="M13.5 7.2H2.7V65.3H65.3V7.2H54.5M2.7 19.5H12.5M65.3 19.5H55.5" fill="none" stroke="url(#ig)" stroke-width="5.3"/><clipPath id="eyec"><path d="M16.5 13C22 -1.5 46 -1.5 51.5 13C46 27.5 22 27.5 16.5 13z"/></clipPath><g clip-path="url(#eyec)"><circle cx="34.4" cy="7.8" r="8.3" fill="url(#ig)"/><circle cx="34.4" cy="7.6" r="3" fill="#0a0a0a"/></g><path d="M16.5 13C22 -1.5 46 -1.5 51.5 13C46 27.5 22 27.5 16.5 13z" fill="none" stroke="url(#ig)" stroke-width="5.3"/><circle cx="24.2" cy="39" r="5" fill="none" stroke="url(#ig)" stroke-width="5.3"/><path d="M14.4 56.5V55.5A9.8 7.8 0 0 1 34 55.5V56.5" fill="none" stroke="url(#ig)" stroke-width="5.3"/><path d="M42.7 33.2H58.6M42.7 43.6H58.6M42.7 54H58.6" fill="none" stroke="url(#ig)" stroke-width="5.3"/></svg>
<svg class="b" style="left:931.7px;top:338.2px;overflow:hidden;" width="68" height="68" viewBox="0 0 68 68"><rect x="2.7" y="2.7" width="62.6" height="62.6" fill="none" stroke="url(#ig)" stroke-width="5.3"/><path d="M2.7 17.7H65.3M14 3V10.5M24 3V10.5M34.5 3V10.5" fill="none" stroke="url(#ig)" stroke-width="5.3"/><circle cx="27.5" cy="38.5" r="8.2" fill="none" stroke="url(#ig)" stroke-width="5.3"/><path d="M21 45L12.5 53.5" fill="none" stroke="url(#ig)" stroke-width="5.3"/><path d="M44.6 31H57.4M44.6 41.5H57.4M44.6 52.1H57.4" fill="none" stroke="url(#ig)" stroke-width="5.3"/></svg>
<svg class="b" style="left:1024.5px;top:338.2px;overflow:hidden;" width="68" height="68" viewBox="0 0 68 68"><rect x="13.2" y="2.7" width="41.6" height="36" fill="none" stroke="url(#ig)" stroke-width="5.3"/><circle cx="34" cy="18.2" r="5.4" fill="none" stroke="url(#ig)" stroke-width="5.3"/><path d="M24 38V35A10 8 0 0 1 44 35V38" fill="none" stroke="url(#ig)" stroke-width="5.3"/><path d="M2.7 10.5V51.5H65.3V10.5" fill="none" stroke="url(#ig)" stroke-width="5.3"/><path d="M26 54V62M42 54V62" fill="none" stroke="url(#ig)" stroke-width="5.3"/><path d="M15.5 68V64.5L19 62H49L52.5 64.5V68z" fill="url(#ig)"/></svg>
<svg class="b" style="left:1117.3px;top:338.2px;overflow:hidden;" width="68" height="68" viewBox="0 0 68 68"><path d="M17 18.5H2.7V65.3H65.3V18.5H53" fill="none" stroke="url(#ig)" stroke-width="5.3"/><path d="M34 27L22.5 15.5A7.5 7.5 0 0 1 34 6A7.5 7.5 0 0 1 45.5 15.5z" fill="none" stroke="url(#ig)" stroke-width="5.3" stroke-linejoin="miter"/><circle cx="49.5" cy="34" r="5.3" fill="none" stroke="url(#ig)" stroke-width="5.3"/><path d="M3 48L11.5 37L20 44.5L28.5 36L60 65M9 46L29 65" fill="none" stroke="url(#ig)" stroke-width="5.3"/></svg>
<svg class="b" style="left:1210.1px;top:338.2px;overflow:hidden;" width="68" height="68" viewBox="0 0 68 68"><path d="M18 18.5H8.3V53M50 18.5H59.7V53" fill="none" stroke="url(#ig)" stroke-width="5.3"/><path d="M2.7 52.6H65.3V56A9 9 0 0 1 56.3 65.3H11.7A9 9 0 0 1 2.7 56z" fill="none" stroke="url(#ig)" stroke-width="5.3"/><path d="M34 0V6M26.5 31V17A7.5 8.5 0 0 1 41.5 17V31M18.3 31.3H49.7M34 34V40" fill="none" stroke="url(#ig)" stroke-width="5.3"/></svg>
<svg class="b" style="left:1302.9px;top:338.2px;overflow:hidden;" width="68" height="68" viewBox="0 0 68 68"><path d="M2.7 20.5V54.5H26L34.5 63L43 54.5H65.3V20.5" fill="none" stroke="url(#ig)" stroke-width="5.3"/><circle cx="34.5" cy="23.2" r="20.5" fill="none" stroke="url(#ig)" stroke-width="5.3"/><rect x="26.7" y="14.8" width="4.6" height="4.6" fill="url(#ig)"/><rect x="37.7" y="14.8" width="4.6" height="4.6" fill="url(#ig)"/><path d="M25.5 27A9 9 0 0 0 43.5 27" fill="none" stroke="url(#ig)" stroke-width="5.3"/></svg>
<svg class="b" style="left:1099px;top:367px;" width="10" height="10" viewBox="0 0 10 10"><circle cx="5" cy="5" r="4" fill="none" stroke="#3c3c3c" stroke-width="1"/><circle cx="5" cy="5" r="1" fill="#3c3c3c"/></svg>
<div class="b" style="left:838.4px;top:338.2px;width:532.5px;height:68.2px;border:1px solid #2f9e58;box-sizing:border-box;"></div>
<div class="b" style="left:834.9px;top:334.7px;width:7px;height:7px;background:#fff;border:1px solid #6fd69a;box-sizing:border-box;"></div>
<div class="b" style="left:1366.9px;top:334.7px;width:7px;height:7px;background:#fff;border:1px solid #6fd69a;box-sizing:border-box;"></div>
<div class="b" style="left:834.9px;top:402.4px;width:7px;height:7px;background:#fff;border:1px solid #6fd69a;box-sizing:border-box;"></div>
<div class="b" style="left:1366.9px;top:402.4px;width:7px;height:7px;background:#fff;border:1px solid #6fd69a;box-sizing:border-box;"></div>
<div class="t" style="top:499.8px;line-height:16px;font-size:12px;color:#f4f4f4;left:569.8px;font-weight:700;letter-spacing:-0.88px;">Hold S</div>
<div class="t" style="top:499.55px;line-height:16.5px;font-size:12.5px;color:#595959;left:605.8px;letter-spacing:-0.34px;">Direct Layer Selection</div>
<div class="t" style="top:513.9px;line-height:16px;font-size:12px;color:#f4f4f4;left:569.8px;font-weight:700;letter-spacing:-1.2px;">Space</div>
<div class="t" style="top:513.65px;line-height:16.5px;font-size:12.5px;color:#595959;left:603.1px;letter-spacing:-0.42px;">Play/ Stop</div>
<div class="t" style="top:528px;line-height:16px;font-size:12px;color:#f4f4f4;left:569.8px;font-weight:700;letter-spacing:-0.75px;">Space + click + drag</div>
<div class="t" style="top:527.75px;line-height:16.5px;font-size:12.5px;color:#595959;left:674px;letter-spacing:-1.2px;">Pan</div>
<div class="t" style="top:542.1px;line-height:16px;font-size:12px;color:#f4f4f4;left:569.8px;font-weight:700;letter-spacing:-0.59px;">Alt + click + drag</div>
<div class="t" style="top:541.85px;line-height:16.5px;font-size:12.5px;color:#595959;left:658.4px;letter-spacing:-0.23px;">Move Pivot Point</div>
<div class="t" style="top:556.2px;line-height:16px;font-size:12px;color:#f4f4f4;left:569.8px;font-weight:700;letter-spacing:-0.67px;">Shift</div>
<div class="t" style="top:555.95px;line-height:16.5px;font-size:12.5px;color:#595959;left:596.9px;letter-spacing:-0.67px;">Enable Snapping</div>
<div class="t" style="top:574.5px;line-height:17px;font-size:13px;color:#f2f2f2;left:998px;letter-spacing:-0.37px;">Viewport Quality: High</div>
<div class="b" style="left:530px;top:598px;width:1057px;height:22px;background:#444;"></div>
<div class="b" style="left:535px;top:601px;width:77.8px;height:15.5px;background:#2d2d2d;border-radius:2.5px;"></div>
<div class="t" style="top:600.5px;line-height:17px;font-size:13px;color:#e6e6e6;left:538.5px;letter-spacing:-1.2px;">33%</div>
<svg class="b" style="left:600.5px;top:606.5px;" width="8" height="5" viewBox="0 0 8 5"><path d="M0.5 0.5L4 4L7.5 0.5" fill="none" stroke="#cfcfcf" stroke-width="1.1"/></svg>
<div class="b" style="left:866px;top:599.5px;width:99.5px;height:18.8px;background:#2e2e2e;border-radius:4px;border:1px solid #262626;box-sizing:border-box;box-shadow:inset 0 1px 0 #4a4a4a;"></div>
<div class="b" style="left:885.5px;top:600.5px;width:1px;height:17px;background:#2a2a2a;"></div>
<div class="b" style="left:905.5px;top:600.5px;width:1px;height:17px;background:#2a2a2a;"></div>
<div class="b" style="left:925.5px;top:600.5px;width:1px;height:17px;background:#2a2a2a;"></div>
<div class="b" style="left:945.5px;top:600.5px;width:1px;height:17px;background:#2a2a2a;"></div>
<svg class="b" style="left:870px;top:603px;" width="12" height="12" viewBox="0 0 12 12"><path d="M1.5 1V11" stroke="#e0e0e0" stroke-width="2"/><path d="M11 1V11L3.5 6z" fill="#e0e0e0"/></svg>
<svg class="b" style="left:890px;top:603px;" width="12" height="12" viewBox="0 0 12 12"><path d="M10.5 1V11" stroke="#e0e0e0" stroke-width="2"/><path d="M8 1V11L0.5 6z" fill="#e0e0e0"/></svg>
<svg class="b" style="left:910px;top:603px;" width="12" height="12" viewBox="0 0 12 12"><path d="M2 0.5V11.5L11 6z" fill="#e0e0e0"/></svg>
<svg class="b" style="left:930px;top:603px;" width="12" height="12" viewBox="0 0 12 12"><path d="M1.5 1V11" stroke="#e0e0e0" stroke-width="2"/><path d="M4 1V11L11.5 6z" fill="#e0e0e0"/></svg>
<svg class="b" style="left:950px;top:603px;" width="12" height="12" viewBox="0 0 12 12"><path d="M10.5 1V11" stroke="#e0e0e0" stroke-width="2"/><path d="M1 1V11L8.5 6z" fill="#e0e0e0"/></svg>
<div class="b" style="left:971px;top:599.5px;width:20px;height:18.8px;background:#2e2e2e;border-radius:4px;border:1px solid #262626;box-sizing:border-box;box-shadow:inset 0 1px 0 #4a4a4a;"></div>
<svg class="b" style="left:974.5px;top:602.5px;" width="13" height="13" viewBox="0 0 13 13"><path d="M7 3.5H2.5A1.5 1.5 0 0 0 1 5V10A1.5 1.5 0 0 0 2.5 11.5H10.5A1.5 1.5 0 0 0 12 10V7" fill="none" stroke="#e0e0e0" stroke-width="1.4"/><path d="M8 0.5L12 3.5L8 6.5z" fill="#e0e0e0"/><path d="M5 3.5H9" stroke="#e0e0e0" stroke-width="1.4"/></svg>
<div class="b" style="left:1232px;top:599.5px;width:37px;height:18.8px;background:#2e2e2e;border-radius:4px;border:1px solid #262626;box-sizing:border-box;box-shadow:inset 0 1px 0 #4a4a4a;"></div>
<svg class="b" style="left:1235px;top:603.5px;" width="14" height="11" viewBox="0 0 14 11"><path d="M0 5.5L3.5 1.5H13V9.5H3.5z" fill="#e0e0e0"/><circle cx="4" cy="5.5" r="1.3" fill="#2e2e2e"/></svg>
<div class="t" style="top:600.5px;line-height:17px;font-size:13px;color:#9a9a9a;left:961px;width:600px;text-align:center;">0</div>
<div class="b" style="left:1272.5px;top:599.5px;width:30.5px;height:18.8px;background:#2e2e2e;border-radius:4px;border:1px solid #262626;box-sizing:border-box;box-shadow:inset 0 1px 0 #4a4a4a;"></div>
<div class="b" style="left:1291.5px;top:600.5px;width:1px;height:17px;background:#2a2a2a;"></div>
<svg class="b" style="left:1275.5px;top:602px;" width="14" height="14" viewBox="0 0 14 14"><path d="M0.5 5H3.5L7.5 1.5V12.5L3.5 9H0.5z" fill="#2ecc71"/><path d="M9.3 4A4 4 0 0 1 9.3 10M11 1.8A7 7 0 0 1 11 12.2" fill="none" stroke="#2ecc71" stroke-width="1.3"/></svg>
<svg class="b" style="left:1295px;top:605px;" width="6" height="8" viewBox="0 0 6 8"><path d="M0.5 0.5L5.5 4L0.5 7.5z" fill="none" stroke="#8a8a8a" stroke-width="1"/></svg>
<div class="b" style="left:1307.5px;top:599.5px;width:30.5px;height:18.8px;background:#2e2e2e;border-radius:4px;border:1px solid #262626;box-sizing:border-box;box-shadow:inset 0 1px 0 #4a4a4a;"></div>
<div class="b" style="left:1326.5px;top:600.5px;width:1px;height:17px;background:#2a2a2a;"></div>
<svg class="b" style="left:1310.5px;top:602px;" width="14" height="14" viewBox="0 0 14 14"><g transform="translate(0.5 0.5)"><g transform="rotate(-45 6.5 6.5)"><path d="M2 12V6A4.5 4.5 0 0 1 11 6V12H8V6A1.500 1.500 0 0 0 5 6V12z" fill="#e0e0e0"/><path d="M1.500 9.700H5.500M7.500 9.700H11.500" stroke="#2e2e2e" stroke-width="1"/></g></g></svg>
<svg class="b" style="left:1330px;top:605px;" width="6" height="8" viewBox="0 0 6 8"><path d="M0.5 0.5L5.5 4L0.5 7.5z" fill="none" stroke="#8a8a8a" stroke-width="1"/></svg>
<div class="b" style="left:1342.5px;top:599.5px;width:30.5px;height:18.8px;background:#2e2e2e;border-radius:4px;border:1px solid #262626;box-sizing:border-box;box-shadow:inset 0 1px 0 #4a4a4a;"></div>
<div class="b" style="left:1361.5px;top:600.5px;width:1px;height:17px;background:#2a2a2a;"></div>
<svg class="b" style="left:1345.5px;top:602px;" width="14" height="14" viewBox="0 0 14 14"><path d="M4.5 0V14M9.5 0V14M0 4.5H14M0 9.5H14" stroke="#e0e0e0" stroke-width="1.2"/></svg>
<svg class="b" style="left:1365px;top:605px;" width="6" height="8" viewBox="0 0 6 8"><path d="M0.5 0.5L5.5 4L0.5 7.5z" fill="none" stroke="#8a8a8a" stroke-width="1"/></svg>
<div class="b" style="left:1377px;top:599.5px;width:19px;height:18.8px;background:#2e2e2e;border-radius:4px;border:1px solid #262626;box-sizing:border-box;box-shadow:inset 0 1px 0 #4a4a4a;"></div>
<svg class="b" style="left:1380px;top:602.5px;" width="13" height="13" viewBox="0 0 13 13"><rect x="0" y="0.5" width="4" height="4" fill="#2ecc71"/><rect x="5.5" y="0.5" width="7.5" height="4" fill="none" stroke="#2ecc71" stroke-width="1.3"/><rect x="0" y="7" width="13" height="5.5" fill="#2ecc71"/></svg>
<div class="b" style="left:1400.5px;top:599.5px;width:19px;height:18.8px;background:#2e2e2e;border-radius:4px;border:1px solid #262626;box-sizing:border-box;box-shadow:inset 0 1px 0 #4a4a4a;"></div>
<svg class="b" style="left:1403px;top:603.5px;" width="14" height="11" viewBox="0 0 14 11"><path d="M0.5 0.5L5 5.5L0.5 10.5M5 0.5L9.5 5.5L5 10.5M9.3 0.5L13.8 5.5L9.3 10.5" fill="none" stroke="#e0e0e0" stroke-width="1.5"/></svg>
<div class="b" style="left:1423.5px;top:599.5px;width:30.5px;height:18.8px;background:#2e2e2e;border-radius:4px;border:1px solid #262626;box-sizing:border-box;box-shadow:inset 0 1px 0 #4a4a4a;"></div>
<div class="b" style="left:1442.5px;top:600.5px;width:1px;height:17px;background:#2a2a2a;"></div>
<svg class="b" style="left:1426.5px;top:602px;" width="14" height="14" viewBox="0 0 14 14"><rect x="0.7" y="1.5" width="12.6" height="9" fill="none" stroke="#e0e0e0" stroke-width="1.3"/><rect x="0" y="11.3" width="14" height="1.7" fill="#e0e0e0"/></svg>
<svg class="b" style="left:1446px;top:605px;" width="6" height="8" viewBox="0 0 6 8"><path d="M0.5 0.5L5.5 4L0.5 7.5z" fill="none" stroke="#8a8a8a" stroke-width="1"/></svg>
<div class="b" style="left:1458.5px;top:599.5px;width:30.5px;height:18.8px;background:#2e2e2e;border-radius:4px;border:1px solid #262626;box-sizing:border-box;box-shadow:inset 0 1px 0 #4a4a4a;"></div>
<div class="b" style="left:1477.5px;top:600.5px;width:1px;height:17px;background:#2a2a2a;"></div>
<svg class="b" style="left:1461.5px;top:602px;" width="14" height="14" viewBox="0 0 14 14"><rect x="0.5" y="0.5" width="8" height="6" fill="none" stroke="#a8a8a8"/><rect x="3" y="3.5" width="8" height="6" fill="#2e2e2e" stroke="#8a8a8a"/><rect x="5.5" y="6.5" width="8" height="6" fill="#2e2e2e" stroke="#6a6a6a"/></svg>
<svg class="b" style="left:1481px;top:605px;" width="6" height="8" viewBox="0 0 6 8"><path d="M0.5 0.5L5.5 4L0.5 7.5z" fill="none" stroke="#8a8a8a" stroke-width="1"/></svg>
<div class="b" style="left:1493.5px;top:599.5px;width:30.5px;height:18.8px;background:#2e2e2e;border-radius:4px;border:1px solid #262626;box-sizing:border-box;box-shadow:inset 0 1px 0 #4a4a4a;"></div>
<div class="b" style="left:1512.5px;top:600.5px;width:1px;height:17px;background:#2a2a2a;"></div>
<svg class="b" style="left:1496.5px;top:602px;" width="14" height="14" viewBox="0 0 14 14"><rect x="0" y="0" width="9" height="9" fill="#bdbdbd"/><rect x="5" y="5" width="8.5" height="8.5" fill="#2e2e2e" stroke="#e0e0e0" stroke-width="1.2"/></svg>
<svg class="b" style="left:1516px;top:605px;" width="6" height="8" viewBox="0 0 6 8"><path d="M0.5 0.5L5.5 4L0.5 7.5z" fill="none" stroke="#8a8a8a" stroke-width="1"/></svg>
<div class="b" style="left:1528.5px;top:599.5px;width:30.5px;height:18.8px;background:#2e2e2e;border-radius:4px;border:1px solid #262626;box-sizing:border-box;box-shadow:inset 0 1px 0 #4a4a4a;"></div>
<div class="b" style="left:1547.5px;top:600.5px;width:1px;height:17px;background:#2a2a2a;"></div>
<svg class="b" style="left:1531.5px;top:602px;" width="14" height="14" viewBox="0 0 14 14"><rect x="0.5" y="0.5" width="3.3" height="3.3" fill="#2ecc71"/><rect x="7.1" y="0.5" width="3.3" height="3.3" fill="#2ecc71"/><rect x="3.8" y="3.8" width="3.3" height="3.3" fill="#2ecc71"/><rect x="10.399999999999999" y="3.8" width="3.3" height="3.3" fill="#2ecc71"/><rect x="0.5" y="7.1" width="3.3" height="3.3" fill="#2ecc71"/><rect x="7.1" y="7.1" width="3.3" height="3.3" fill="#2ecc71"/><rect x="3.8" y="10.399999999999999" width="3.3" height="3.3" fill="#2ecc71"/><rect x="10.399999999999999" y="10.399999999999999" width="3.3" height="3.3" fill="#2ecc71"/></svg>
<svg class="b" style="left:1551px;top:605px;" width="6" height="8" viewBox="0 0 6 8"><path d="M0.5 0.5L5.5 4L0.5 7.5z" fill="none" stroke="#8a8a8a" stroke-width="1"/></svg>
<div class="b" style="left:1563px;top:599.5px;width:19.5px;height:18.8px;background:#2e2e2e;border-radius:4px;border:1px solid #262626;box-sizing:border-box;box-shadow:inset 0 1px 0 #4a4a4a;"></div>
<svg class="b" style="left:1566.3px;top:602.5px;" width="13" height="13" viewBox="0 0 13 13"><rect x="5.3" y="0.2" width="2.4" height="3.2" fill="#e0e0e0" transform="rotate(0 6.5 6.5)"/><rect x="5.3" y="0.2" width="2.4" height="3.2" fill="#e0e0e0" transform="rotate(45 6.5 6.5)"/><rect x="5.3" y="0.2" width="2.4" height="3.2" fill="#e0e0e0" transform="rotate(90 6.5 6.5)"/><rect x="5.3" y="0.2" width="2.4" height="3.2" fill="#e0e0e0" transform="rotate(135 6.5 6.5)"/><rect x="5.3" y="0.2" width="2.4" height="3.2" fill="#e0e0e0" transform="rotate(180 6.5 6.5)"/><rect x="5.3" y="0.2" width="2.4" height="3.2" fill="#e0e0e0" transform="rotate(225 6.5 6.5)"/><rect x="5.3" y="0.2" width="2.4" height="3.2" fill="#e0e0e0" transform="rotate(270 6.5 6.5)"/><rect x="5.3" y="0.2" width="2.4" height="3.2" fill="#e0e0e0" transform="rotate(315 6.5 6.5)"/><circle cx="6.5" cy="6.5" r="3.3" fill="none" stroke="#e0e0e0" stroke-width="2.4"/></svg>
<!-- p_right -->
<div class="b" style="left:1593px;top:85.5px;width:321px;height:21.5px;background:#1c1c1c;"></div>
<div class="b" style="left:1593px;top:85.5px;width:40px;height:21.5px;background:#454545;border-radius:4px 4px 0 0;"></div>
<div class="b" style="left:1634px;top:85.5px;width:68.5px;height:21.5px;background:#222;border-radius:4px 4px 0 0;"></div>
<div class="t" style="top:88px;line-height:17px;font-size:13px;color:#e6e6e6;left:1598px;letter-spacing:-0.39px;">Color</div>
<div class="t" style="top:88px;line-height:17px;font-size:13px;color:#e6e6e6;left:1639px;letter-spacing:-0.81px;">Add Layers</div>
<div class="b" style="left:1593px;top:107px;width:321px;height:417px;background:#3c3c3c;"></div>
<div class="b" style="left:1593px;top:107px;width:307px;height:417px;background:#454545;"></div>
<div class="b" style="left:1902.5px;top:109px;width:9px;height:366px;background:#4a4a4a;border-radius:4.5px;"></div>
<div class="b" style="left:1646px;top:120px;width:200px;height:200px;background:conic-gradient(from 90deg,#f00,#f0f,#00f,#0ff,#0f0,#ff0,#f00);border-radius:50%;"></div>
<div class="b" style="left:1672px;top:146px;width:148px;height:148px;background:#454545;border-radius:50%;"></div>
<div class="b" style="left:1702px;top:176px;width:90px;height:90px;background:linear-gradient(to right,#000,rgba(0,0,0,0)),linear-gradient(to bottom,#fff,#f00);"></div>
<svg class="b" style="left:1730px;top:169px;" width="14" height="14" viewBox="0 0 14 14"><circle cx="7" cy="7" r="5.8" fill="#646464" stroke="#f0f0f0" stroke-width="1"/></svg>
<svg class="b" style="left:1826px;top:213px;" width="14" height="14" viewBox="0 0 14 14"><circle cx="7" cy="7" r="5.8" fill="#ff0000" stroke="#fff" stroke-width="1"/></svg>
<div class="b" style="left:1600px;top:333px;width:22px;height:22px;background:#646464;border-radius:3px;"></div>
<div class="t" style="top:336px;line-height:17px;font-size:13px;color:#e6e6e6;left:1625.5px;letter-spacing:-0.84px;">Dim Gray</div>
<div class="b" style="left:1871px;top:333px;width:22px;height:22px;background:#2a2a2a;border-radius:3px;border:1px solid #222;box-sizing:border-box;"></div>
<svg class="b" style="left:1875.5px;top:337.5px;" width="13" height="13" viewBox="0 0 13 13"><path d="M1 12L1.5 10L7 4.5L8.5 6L3 11.5z" fill="#9a9a9a"/><path d="M6.5 3.5L9.5 6.5M8 5L10.3 2.7A1.3 1.3 0 0 0 8.5 0.9z" stroke="#c8c8c8" stroke-width="1.7" fill="#c8c8c8"/></svg>
<div class="b" style="left:1600px;top:360px;width:49.5px;height:17.5px;background:#3a3a3a;border-radius:2px;border:1px solid #5a5a5a;box-sizing:border-box;"></div>
<div class="t" style="top:360.5px;line-height:17px;font-size:13px;color:#e6e6e6;left:1603px;letter-spacing:-1.06px;">Hex</div>
<svg class="b" style="left:1636.5px;top:366.5px;" width="8" height="5" viewBox="0 0 8 5"><path d="M0.5 0.5L4 4L7.5 0.5" fill="none" stroke="#cfcfcf" stroke-width="1.1"/></svg>
<div class="b" style="left:1653px;top:358.5px;width:240px;height:21.5px;background:#2a2a2a;border-radius:2px;"></div>
<div class="t" style="top:361.5px;line-height:16px;font-size:12px;color:#555;left:1660px;">#</div>
<div class="t" style="top:361px;line-height:17px;font-size:13px;color:#e0e0e0;left:1670px;letter-spacing:-0.38px;">646464</div>
<div class="b" style="left:1600px;top:390px;width:235px;height:4px;background:#e2e2e2;border-radius:2px;"></div>
<svg class="b" style="left:1828.5px;top:386.5px;" width="11" height="11" viewBox="0 0 11 11"><circle cx="5.5" cy="5.5" r="5" fill="#7fd1b4"/><circle cx="5.5" cy="5.5" r="3.2" fill="#58b896"/></svg>
<div class="b" style="left:1849px;top:384.5px;width:44px;height:15px;background:#2a2a2a;border-radius:2px;"></div>
<div class="t" style="top:383.5px;line-height:17px;font-size:13px;color:#555;left:1853px;">A</div>
<div class="t" style="top:383.5px;line-height:17px;font-size:13px;color:#e0e0e0;left:1866px;letter-spacing:-0.6px;">255</div>
<div class="b" style="left:1597px;top:406px;width:299px;height:22px;background:#2a2a2a;"></div>
<div class="b" style="left:1599px;top:408px;width:148px;height:20px;background:#454545;border-radius:4px 4px 0 0;"></div>
<div class="t" style="top:409.5px;line-height:17px;font-size:13px;color:#e8e8e8;left:1372.5px;width:600px;text-align:center;letter-spacing:-0.4px;">Swatches</div>
<div class="t" style="top:409.5px;line-height:17px;font-size:13px;color:#a8a8a8;left:1520.5px;width:600px;text-align:center;letter-spacing:-0.4px;">Generator</div>
<div class="b" style="left:1598px;top:431.5px;width:257px;height:17px;background:#565656;border-radius:3px;"></div>
<div class="b" style="left:1599px;top:432.5px;width:62px;height:15px;background:#2a2a2a;border-radius:3px;"></div>
<svg class="b" style="left:1605px;top:435px;" width="10" height="10" viewBox="0 0 10 10"><path d="M1 0.5V9.5M4 0.5V9.5M6.5 0.8L9 9.5" stroke="#2ecc71" stroke-width="1.6"/></svg>
<div class="t" style="top:431.5px;line-height:17px;font-size:13px;color:#e8e8e8;left:1621px;letter-spacing:-0.46px;">Library</div>
<svg class="b" style="left:1670px;top:434.5px;" width="11" height="10" viewBox="0 0 11 10"><path d="M0.5 1.5H4L5 0.5H8" stroke="#cfcfcf" fill="none"/><rect x="0.6" y="2.6" width="9.8" height="6.8" fill="none" stroke="#cfcfcf" stroke-width="1.2"/><path d="M2.5 5H8.5M2.5 7.3H8.5" stroke="#cfcfcf" stroke-width="1"/></svg>
<div class="t" style="top:431.5px;line-height:17px;font-size:13px;color:#e0e0e0;left:1686px;letter-spacing:-0.41px;">Project</div>
<svg class="b" style="left:1738px;top:434.5px;" width="8" height="10" viewBox="0 0 8 10"><path d="M0.6 0.6H4.5L7.4 3.5V9.4H0.6z" fill="none" stroke="#cfcfcf" stroke-width="1.2"/></svg>
<div class="t" style="top:431.5px;line-height:17px;font-size:13px;color:#e0e0e0;left:1752px;letter-spacing:-1.2px;">Scene</div>
<svg class="b" style="left:1801px;top:434.5px;" width="10" height="10" viewBox="0 0 10 10"><path d="M3 0.6H7A2.4 2.4 0 0 1 9.4 3V5.5L5.5 9.4H3A2.4 2.4 0 0 1 0.6 7V3A2.4 2.4 0 0 1 3 0.6z" fill="none" stroke="#cfcfcf" stroke-width="1.2"/><path d="M9.4 5.5H7A1.5 1.5 0 0 0 5.5 7V9.4" fill="none" stroke="#cfcfcf" stroke-width="1"/></svg>
<div class="t" style="top:431.5px;line-height:17px;font-size:13px;color:#e0e0e0;left:1816px;letter-spacing:-0.96px;">Labels</div>
<div class="b" style="left:1858px;top:431.5px;width:37px;height:17px;background:#565656;border-radius:3px;"></div>
<div class="b" style="left:1858px;top:431.5px;width:17.5px;height:17px;background:#2a2a2a;border-radius:3px;"></div>
<svg class="b" style="left:1862.5px;top:436px;" width="8" height="8" viewBox="0 0 8 8"><rect x="0" y="0" width="3" height="3" fill="#2ecc71"/><rect x="0" y="5" width="3" height="3" fill="#2ecc71"/><rect x="5" y="0" width="3" height="3" fill="#2ecc71"/><rect x="5" y="5" width="3" height="3" fill="#2ecc71"/></svg>
<svg class="b" style="left:1880.5px;top:436px;" width="10" height="8" viewBox="0 0 10 8"><path d="M0 1H10M0 4H10M0 7H10" stroke="#dcdcdc" stroke-width="1.1"/></svg>
<div class="b" style="left:1598px;top:452.5px;width:275.5px;height:16.5px;background:#4f4f4f;border-radius:2px;border:1px solid #5e5e5e;box-sizing:border-box;"></div>
<div class="t" style="top:452.5px;line-height:17px;font-size:13px;color:#e8e8e8;left:1601px;letter-spacing:-0.95px;">Simple</div>
<svg class="b" style="left:1860.5px;top:458.5px;" width="8" height="5" viewBox="0 0 8 5"><path d="M0.5 0.5L4 4L7.5 0.5" fill="none" stroke="#cfcfcf" stroke-width="1.1"/></svg>
<div class="b" style="left:1880px;top:460px;width:2px;height:2px;background:#dcdcdc;border-radius:1px;"></div>
<div class="b" style="left:1885px;top:460px;width:2px;height:2px;background:#dcdcdc;border-radius:1px;"></div>
<div class="b" style="left:1890px;top:460px;width:2px;height:2px;background:#dcdcdc;border-radius:1px;"></div>
<div class="b" style="left:1598px;top:470px;width:297px;height:54px;background:#232323;"></div>
<div class="b" style="left:1600px;top:472px;width:18px;height:18px;background:#0b74c2;border-radius:3px;"></div>
<div class="b" style="left:1622px;top:472px;width:18px;height:18px;background:#0a9ddb;border-radius:3px;"></div>
<div class="b" style="left:1644px;top:472px;width:18px;height:18px;background:#96c465;border-radius:3px;"></div>
<div class="b" style="left:1666px;top:472px;width:18px;height:18px;background:#f2e243;border-radius:3px;"></div>
<div class="b" style="left:1688px;top:472px;width:18px;height:18px;background:#f07a05;border-radius:3px;"></div>
<div class="b" style="left:1593px;top:530.5px;width:321px;height:21px;background:#1c1c1c;"></div>
<div class="b" style="left:1593px;top:530.5px;width:38px;height:21px;background:#454545;border-radius:4px 4px 0 0;"></div>
<div class="t" style="top:533px;line-height:17px;font-size:13px;color:#e6e6e6;left:1598px;letter-spacing:-0.48px;">Align</div>
<div class="b" style="left:1593px;top:551.5px;width:321px;height:68.5px;background:#454545;"></div>
<div class="t" style="top:562.8px;line-height:17px;font-size:13px;color:#e6e6e6;left:1601px;letter-spacing:-0.48px;">Alignment</div>
<div class="t" style="top:591px;line-height:17px;font-size:13px;color:#e6e6e6;left:1601px;letter-spacing:-0.14px;">Distribution</div>
<div class="b" style="left:1790.2px;top:562.3px;width:53.6px;height:17.5px;background:#333;border-radius:4px;border:1px solid #262626;box-sizing:border-box;box-shadow:inset 0 1px 0 #4a4a4a;"></div>
<div class="b" style="left:1807.6px;top:563.3px;width:1px;height:15.5px;background:#262626;"></div>
<div class="b" style="left:1825.5px;top:563.3px;width:1px;height:15.5px;background:#262626;"></div>
<div class="b" style="left:1852.2px;top:562.3px;width:53.6px;height:17.5px;background:#333;border-radius:4px;border:1px solid #262626;box-sizing:border-box;box-shadow:inset 0 1px 0 #4a4a4a;"></div>
<div class="b" style="left:1869.6px;top:563.3px;width:1px;height:15.5px;background:#262626;"></div>
<div class="b" style="left:1887.5px;top:563.3px;width:1px;height:15.5px;background:#262626;"></div>
<div class="b" style="left:1790.2px;top:590.3px;width:53.6px;height:17.5px;background:#333;border-radius:4px;border:1px solid #262626;box-sizing:border-box;box-shadow:inset 0 1px 0 #4a4a4a;"></div>
<div class="b" style="left:1807.6px;top:591.3px;width:1px;height:15.5px;background:#262626;"></div>
<div class="b" style="left:1825.5px;top:591.3px;width:1px;height:15.5px;background:#262626;"></div>
<svg class="b" style="left:1792.6px;top:564.6px;" width="13" height="13" viewBox="0 0 13 13"><path d="M0.800 0V13" stroke="#e8e8e8" stroke-width="1.300"/><path d="M3.500 4H9.500M3.500 9.300H13" stroke="#e8e8e8" stroke-width="2"/></svg>
<svg class="b" style="left:1810.5px;top:564.6px;" width="13" height="13" viewBox="0 0 13 13"><path d="M6.500 0V13" stroke="#e8e8e8" stroke-width="1.300"/><path d="M3.500 4H9.500M1 9.300H12" stroke="#e8e8e8" stroke-width="2"/></svg>
<svg class="b" style="left:1828.4px;top:564.6px;" width="13" height="13" viewBox="0 0 13 13"><path d="M12.200 0V13" stroke="#e8e8e8" stroke-width="1.300"/><path d="M4 4H10M0.500 9.300H10" stroke="#e8e8e8" stroke-width="2"/></svg>
<svg class="b" style="left:1854.6px;top:564.6px;" width="13" height="13" viewBox="0 0 13 13"><path d="M0 0.800H13" stroke="#e8e8e8" stroke-width="1.300"/><path d="M4 3.500V13M9.200 3.500V9" stroke="#e8e8e8" stroke-width="2"/></svg>
<svg class="b" style="left:1872.5px;top:564.6px;" width="13" height="13" viewBox="0 0 13 13"><path d="M0 6.500H13" stroke="#e8e8e8" stroke-width="1.300"/><path d="M4 1V12M9.200 3.500V9.500" stroke="#e8e8e8" stroke-width="2"/></svg>
<svg class="b" style="left:1890.4px;top:564.6px;" width="13" height="13" viewBox="0 0 13 13"><path d="M0 12.200H13" stroke="#e8e8e8" stroke-width="1.300"/><path d="M4 4V10M9.200 0.500V10" stroke="#e8e8e8" stroke-width="2"/></svg>
<svg class="b" style="left:1792.6px;top:592.6px;" width="13" height="13" viewBox="0 0 13 13"><path d="M0.800 0V13M12.200 0V13" stroke="#e8e8e8" stroke-width="1.300"/><path d="M6.500 3V10" stroke="#e8e8e8" stroke-width="2.200"/></svg>
<svg class="b" style="left:1810.5px;top:592.6px;" width="13" height="13" viewBox="0 0 13 13"><path d="M0 0.800H13M0 12.200H13" stroke="#e8e8e8" stroke-width="1.300"/><path d="M3 6.500H10" stroke="#e8e8e8" stroke-width="2.200"/></svg>
<svg class="b" style="left:1828.4px;top:592.6px;" width="13" height="13" viewBox="0 0 13 13"><path d="M0.600 3V2A1.400 1.400 0 0 1 2 0.600H3M10 0.600H11A1.400 1.400 0 0 1 12.400 2V3M12.400 10V11A1.400 1.400 0 0 1 11 12.400H10M3 12.400H2A1.400 1.400 0 0 1 0.600 11V10" fill="none" stroke="#e8e8e8" stroke-width="1.100"/><path d="M3 7.500V11M6.700 5V8.500M10.300 2.500V6.500" stroke="#e8e8e8" stroke-width="1.900"/></svg>
<!-- p_bottom -->
<div class="b" style="left:494px;top:626px;width:1420px;height:24px;background:#1c1c1c;"></div>
<div class="b" style="left:494px;top:626px;width:66px;height:24px;background:#444;border-radius:4px 4px 0 0;"></div>
<div class="b" style="left:561px;top:626.5px;width:122.5px;height:22.5px;background:#222;border-radius:4px 4px 0 0;"></div>
<div class="t" style="top:629px;line-height:17px;font-size:13px;color:#e6e6e6;left:619.5px;letter-spacing:-0.33px;">cript Editor</div>
<div class="b" style="left:685px;top:626.5px;width:112px;height:22.5px;background:#222;border-radius:4px 4px 0 0;"></div>
<div class="t" style="top:629px;line-height:17px;font-size:13px;color:#e6e6e6;left:690.5px;letter-spacing:-0.78px;">Dependency Graph</div>
<div class="b" style="left:494px;top:650px;width:1420px;height:348.3px;background:#444;"></div>
<div class="b" style="left:1908.8px;top:650px;width:5.2px;height:20px;background:#262626;"></div>
<div class="t" style="top:650.8px;line-height:17px;font-size:13px;color:#e6e6e6;left:1165px;letter-spacing:-0.51px;">Composition 1</div>
<div class="b" style="left:500px;top:672.5px;width:310px;height:19px;background:#262626;border-radius:9.5px;"></div>
<div class="b" style="left:813px;top:673px;width:19.5px;height:18.5px;background:#2e2e2e;border-radius:4px;border:1px solid #242424;box-sizing:border-box;box-shadow:inset 0 1px 0 #4a4a4a;"></div>
<svg class="b" style="left:816.5px;top:676px;" width="12" height="12" viewBox="0 0 12 12"><path d="M6 1V11M1 6H11" stroke="#e8e8e8" stroke-width="1.8"/><path d="M13.5 10.5V13.5H10.5z" fill="#2ecc71"/></svg>
<div class="b" style="left:857px;top:673px;width:19.5px;height:18.5px;background:#2e2e2e;border-radius:4px;border:1px solid #242424;box-sizing:border-box;box-shadow:inset 0 1px 0 #4a4a4a;"></div>
<svg class="b" style="left:860px;top:675.5px;" width="14" height="14" viewBox="0 0 14 14"><circle cx="4.5" cy="9.5" r="3.6" fill="#6a6a6a"/><circle cx="6.5" cy="7.5" r="3.8" fill="#9a9a9a"/><circle cx="9" cy="5" r="4" fill="#dcdcdc"/></svg>
<div class="b" style="left:879px;top:673px;width:19.5px;height:18.5px;background:#2e2e2e;border-radius:4px;border:1px solid #242424;box-sizing:border-box;box-shadow:inset 0 1px 0 #4a4a4a;"></div>
<svg class="b" style="left:882.5px;top:676px;" width="13" height="13" viewBox="0 0 13 13"><path d="M7.5 5V11M4.5 8H10.5" stroke="#e8e8e8" stroke-width="1.5"/><circle cx="2" cy="2" r="1" fill="#e8e8e8"/><circle cx="7.5" cy="1.5" r="0.9" fill="#e8e8e8"/><circle cx="1.5" cy="7.5" r="0.9" fill="#e8e8e8"/><path d="M13.5 10.5V13.5H10.5z" fill="#2ecc71"/></svg>
<div class="b" style="left:901px;top:673px;width:19.5px;height:18.5px;background:#2e2e2e;border-radius:4px;border:1px solid #242424;box-sizing:border-box;box-shadow:inset 0 1px 0 #4a4a4a;"></div>
<svg class="b" style="left:904.5px;top:676px;" width="13" height="13" viewBox="0 0 13 13"><path d="M0 2H13M0 6.5H13M0 11H13" stroke="#e8e8e8" stroke-width="1" stroke-dasharray="3.5 3 6.5 0"/><circle cx="5" cy="2" r="1.4" fill="#2e2e2e" stroke="#e8e8e8"/><circle cx="8" cy="6.5" r="1.4" fill="#2e2e2e" stroke="#e8e8e8"/><circle cx="5" cy="11" r="1.4" fill="#2e2e2e" stroke="#e8e8e8"/><path d="M13.5 10.5V13.5H10.5z" fill="#2ecc71"/></svg>
<div class="b" style="left:923px;top:672px;width:94px;height:19.5px;background:#2b2b2b;border-radius:2px;"></div>
<div class="t" style="top:674.5px;line-height:16px;font-size:12px;color:#585858;left:928px;">F</div>
<div class="t" style="top:674px;line-height:17px;font-size:13px;color:#e0e0e0;left:939.5px;">0</div>
<div class="t" style="top:695px;line-height:17px;font-size:13px;color:#e6e6e6;left:649.5px;letter-spacing:-1.2px;">Name</div>
<div class="b" style="left:494px;top:712.5px;width:511px;height:132px;background:#3a3a3a;"></div>
<div class="b" style="left:494px;top:844.5px;width:525px;height:130.8px;background:#2a2a2a;"></div>
<div class="b" style="left:1005px;top:962px;width:14px;height:13.3px;background:#333;"></div>
<div class="b" style="left:1005px;top:712.5px;width:14px;height:251.5px;background:#3a3a3a;"></div>
<div class="b" style="left:1007px;top:713.5px;width:10px;height:247px;background:#4d4d4d;border-radius:5px;"></div>
<div class="b" style="left:494px;top:735px;width:509px;height:21px;background:#5a5442;border-radius:2px;"></div>
<div class="t" style="top:715px;line-height:17px;font-size:13px;color:#e8e8e8;left:667px;letter-spacing:-0.51px;">Group Array</div>
<svg class="b" style="left:991px;top:718px;" width="10" height="10" viewBox="0 0 10 10"><circle cx="5" cy="5" r="3.8" fill="none" stroke="#8a8a8a" stroke-width="1.1"/></svg>
<div class="t" style="top:737px;line-height:17px;font-size:13px;color:#f0f0f0;left:667px;letter-spacing:-0.28px;">Duplicator</div>
<svg class="b" style="left:991px;top:740px;" width="10" height="10" viewBox="0 0 10 10"><circle cx="5" cy="5" r="3.8" fill="none" stroke="#7a7a6a" stroke-width="1.1"/></svg>
<div class="t" style="top:759px;line-height:17px;font-size:13px;color:#9c9c9c;left:667px;letter-spacing:-1.15px;">Basic Shape</div>
<svg class="b" style="left:991px;top:762px;" width="10" height="10" viewBox="0 0 10 10"><circle cx="5" cy="5" r="3.8" fill="none" stroke="#8a8a8a" stroke-width="1.1"/></svg>
<div class="t" style="top:781px;line-height:17px;font-size:13px;color:#9c9c9c;left:667px;letter-spacing:-0.24px;">profile</div>
<svg class="b" style="left:991px;top:784px;" width="10" height="10" viewBox="0 0 10 10"><circle cx="5" cy="5" r="3.8" fill="none" stroke="#8a8a8a" stroke-width="1.1"/></svg>
<div class="t" style="top:803px;line-height:17px;font-size:13px;color:#e8e8e8;left:686px;letter-spacing:-0.69px;">profile Image Shader</div>
<svg class="b" style="left:991px;top:806px;" width="10" height="10" viewBox="0 0 10 10"><circle cx="5" cy="5" r="3.8" fill="none" stroke="#8a8a8a" stroke-width="1.1"/></svg>
<div class="t" style="top:825px;line-height:17px;font-size:13px;color:#e8e8e8;left:667px;letter-spacing:-0.87px;">Background Shape</div>
<svg class="b" style="left:991px;top:828px;" width="10" height="10" viewBox="0 0 10 10"><circle cx="5" cy="5" r="3.8" fill="none" stroke="#8a8a8a" stroke-width="1.1"/></svg>
<svg class="b" style="left:647.7px;top:715.3px;" width="15" height="14" viewBox="0 0 15 14"><path d="M6 1H14.5M6 3.5H14.5" stroke="#e0e0e0" stroke-width="1.1"/><rect x="0.6" y="4.6" width="10.8" height="8.3" fill="none" stroke="#8cc8f0" stroke-width="1.2"/><path d="M2 11L4.5 8L6 9.5L7.5 8L10 11z" fill="#8cc8f0"/><path d="M12 6H14.5M12 8.5H14.5" stroke="#e0e0e0" stroke-width="1.1"/></svg>
<svg class="b" style="left:648.3px;top:738.5px;" width="13" height="13" viewBox="0 0 13 13"><rect x="0.3" y="0.8" width="1.7" height="1.7" fill="#f0dc6a"/><rect x="5.3" y="0.8" width="1.7" height="1.7" fill="#f0dc6a"/><rect x="10.3" y="0.8" width="1.7" height="1.7" fill="#f0dc6a"/><rect x="0.3" y="5.8" width="1.7" height="1.7" fill="#f0dc6a"/><rect x="5.3" y="5.8" width="1.7" height="1.7" fill="#f0dc6a"/><rect x="10.3" y="5.8" width="1.7" height="1.7" fill="#f0dc6a"/><rect x="0.3" y="10.8" width="1.7" height="1.7" fill="#f0dc6a"/><rect x="5.3" y="10.8" width="1.7" height="1.7" fill="#f0dc6a"/><rect x="10.3" y="10.8" width="1.7" height="1.7" fill="#f0dc6a"/></svg>
<svg class="b" style="left:648.3px;top:760.3px;" width="13" height="13" viewBox="0 0 13 13"><rect x="0.8" y="0.8" width="11.4" height="11.4" fill="none" stroke="#f0dc6a" stroke-width="1.2" stroke-dasharray="4 2.2" stroke-dashoffset="2"/></svg>
<svg class="b" style="left:647.7px;top:781.8px;" width="14" height="14" viewBox="0 0 14 14"><rect x="0.5" y="0.5" width="13" height="13" rx="1" fill="none" stroke="#f0dc6a" stroke-width="1"/><rect x="2" y="2" width="10" height="10" fill="#d6d6d6"/><path d="M3 9.500L5.500 6L7.200 8L8.300 7L11 9.500z" fill="#333"/><circle cx="9.300" cy="4.500" r="1.100" fill="#333"/><path d="M2.500 10.700H11.500" stroke="#333" stroke-width="0.800"/></svg>
<svg class="b" style="left:666px;top:803.3px;" width="17" height="15" viewBox="0 0 17 15"><rect x="0.600" y="3.600" width="11.800" height="10.800" rx="1" fill="none" stroke="#ffa3b0" stroke-width="1.200"/><path d="M2 11.500L4.800 8L6.800 10.200L8 9L10.800 11.500z" fill="#ffa3b0"/><path d="M0.600 12.500H12.400V14.400H0.600z" fill="#ffa3b0"/><circle cx="12.300" cy="3.800" r="3.900" fill="#dcdcdc"/><circle cx="11.300" cy="2.800" r="1.300" fill="#fff"/></svg>
<svg class="b" style="left:647.7px;top:825.8px;" width="14" height="14" viewBox="0 0 14 14"><rect x="0.5" y="0.5" width="13" height="13" rx="1" fill="none" stroke="#f0dc6a" stroke-width="1"/><rect x="2" y="2" width="10" height="10" fill="#d6d6d6"/></svg>
<div class="b" style="left:606px;top:781px;width:35.6px;height:15px;background:#343434;border-radius:3px;"></div>
<div class="b" style="left:637.9px;top:732px;width:142.1px;height:27.8px;border-radius:1px;border:3px solid #b4e61e;box-sizing:border-box;"></div>
<div class="b" style="left:965px;top:715px;width:21px;height:16px;background:#2b2b2b;border-radius:3px;"></div>
<svg class="b" style="left:968px;top:718px;" width="15" height="10" viewBox="0 0 15 10"><path d="M0.5 5L3.5 1.5H6V8.5H3.5z" fill="#d9bc62"/><path d="M14.5 5L11.5 1.5H9.5V8.5H11.5z" fill="#c45ce0"/></svg>
<div class="b" style="left:965px;top:737px;width:21px;height:16px;background:#2b2b2b;border-radius:3px;"></div>
<svg class="b" style="left:968px;top:740px;" width="15" height="10" viewBox="0 0 15 10"><path d="M0.5 5L3.5 1.5H6V8.5H3.5z" fill="#d9bc62"/><path d="M14.5 5L11.5 1.5H9.5V8.5H11.5z" fill="#7a7a7a"/></svg>
<div class="b" style="left:965px;top:781px;width:21px;height:16px;background:#2b2b2b;border-radius:3px;"></div>
<svg class="b" style="left:968px;top:784px;" width="15" height="10" viewBox="0 0 15 10"><path d="M0.5 5L3.5 1.5H6V8.5H3.5z" fill="#d9bc62"/><path d="M14.5 5L11.5 1.5H9.5V8.5H11.5z" fill="#c45ce0"/><rect x="7.6" y="-2.6" width="8.8" height="15.2" rx="1" fill="none" stroke="#a860c0" stroke-width="1"/></svg>
<div class="b" style="left:965px;top:803px;width:21px;height:16px;background:#2b2b2b;border-radius:3px;"></div>
<svg class="b" style="left:968px;top:806px;" width="15" height="10" viewBox="0 0 15 10"><path d="M0.5 5L3.5 1.5H6V8.5H3.5z" fill="#d9bc62"/><path d="M14.5 5L11.5 1.5H9.5V8.5H11.5z" fill="#c45ce0"/></svg>
<div class="b" style="left:494px;top:964.2px;width:510.2px;height:9.5px;background:#4f4f4f;border-radius:4.7px;"></div>
<div class="b" style="left:494px;top:975.3px;width:525px;height:23px;background:#444;"></div>
<div class="b" style="left:810px;top:977.5px;width:20px;height:19px;background:#2e2e2e;border-radius:4px;border:1px solid #242424;box-sizing:border-box;box-shadow:inset 0 1px 0 #4a4a4a;"></div>
<svg class="b" style="left:814.5px;top:981.5px;" width="11" height="11" viewBox="0 0 11 11"><rect x="0.6" y="0.6" width="9.8" height="9.8" fill="none" stroke="#e8e8e8" stroke-width="1.2"/><rect x="4" y="4" width="3" height="3" fill="#e8e8e8"/></svg>
<div class="b" style="left:833.5px;top:977.5px;width:182.5px;height:19px;background:#575757;border-radius:3px;"></div>
<div class="b" style="left:834.5px;top:978.5px;width:85.5px;height:17px;background:#262626;border-radius:3px;"></div>
<svg class="b" style="left:840px;top:981.5px;" width="12" height="11" viewBox="0 0 12 11"><path d="M0 1H11M3 5.5H10M0 10H9" stroke="#2ecc71" stroke-width="1.8"/></svg>
<div class="t" style="top:978.5px;line-height:17px;font-size:13px;color:#e8e8e8;left:856px;letter-spacing:-0.53px;">Time Editor</div>
<svg class="b" style="left:927.5px;top:981px;" width="13" height="12" viewBox="0 0 13 12"><path d="M1.5 0V10.5H13" fill="none" stroke="#bdbdbd" stroke-width="1.1"/><path d="M1.5 10.5L8 1" stroke="#bdbdbd" stroke-width="1.1"/></svg>
<div class="t" style="top:978.5px;line-height:17px;font-size:13px;color:#e0e0e0;left:945px;letter-spacing:-0.58px;">Graph Editor</div>
<div class="b" style="left:1019px;top:670px;width:6.8px;height:328.3px;background:#202020;"></div>
<div class="b" style="left:1019px;top:670px;width:4.3px;height:43px;background:#2e2e2e;"></div>
<div class="b" style="left:1021.3px;top:827.5px;width:1.5px;height:1.5px;background:#8a8a8a;"></div>
<div class="b" style="left:1021.3px;top:831.2px;width:1.5px;height:1.5px;background:#8a8a8a;"></div>
<div class="b" style="left:1021.3px;top:834.9px;width:1.5px;height:1.5px;background:#8a8a8a;"></div>
<div class="b" style="left:1021.3px;top:838.6px;width:1.5px;height:1.5px;background:#8a8a8a;"></div>
<div class="b" style="left:1021.3px;top:842.3px;width:1.5px;height:1.5px;background:#8a8a8a;"></div>
<div class="b" style="left:1023.3px;top:670px;width:890.7px;height:43px;background:#222;"></div>
<div class="b" style="left:1034.5px;top:694.5px;width:871.5px;height:16px;background:#444;"></div>
<div class="b" style="left:1025px;top:712px;width:889px;height:252px;background:#282828;"></div>
<div class="b" style="left:1025.8px;top:800.7px;width:879.2px;height:20px;background:#2f2f2f;"></div>
<div class="b" style="left:1905px;top:712px;width:9px;height:252px;background:#1f1f1f;"></div>
<div class="b" style="left:1905px;top:800.7px;width:9px;height:20px;background:#2a2a2a;"></div>
<svg class="b" style="left:1025px;top:670px;" width="889" height="25" viewBox="0 0 889 25"><rect x="8" y="17" width="1" height="7.5" fill="#a8a8a8"/><rect x="18.45" y="20.7" width="1" height="3.8" fill="#a8a8a8"/><rect x="28.91" y="20.7" width="1" height="3.8" fill="#a8a8a8"/><rect x="39.37" y="20.7" width="1" height="3.8" fill="#a8a8a8"/><rect x="49.82" y="20.7" width="1" height="3.8" fill="#a8a8a8"/><rect x="60.28" y="17" width="1" height="7.5" fill="#a8a8a8"/><rect x="70.73" y="20.7" width="1" height="3.8" fill="#a8a8a8"/><rect x="81.18" y="20.7" width="1" height="3.8" fill="#a8a8a8"/><rect x="91.64" y="20.7" width="1" height="3.8" fill="#a8a8a8"/><rect x="102.1" y="20.7" width="1" height="3.8" fill="#a8a8a8"/><rect x="112.55" y="17" width="1" height="7.5" fill="#a8a8a8"/><rect x="123.01" y="20.7" width="1" height="3.8" fill="#a8a8a8"/><rect x="133.46" y="20.7" width="1" height="3.8" fill="#a8a8a8"/><rect x="143.91" y="20.7" width="1" height="3.8" fill="#a8a8a8"/><rect x="154.37" y="20.7" width="1" height="3.8" fill="#a8a8a8"/><rect x="164.83" y="17" width="1" height="7.5" fill="#a8a8a8"/><rect x="175.28" y="20.7" width="1" height="3.8" fill="#a8a8a8"/><rect x="185.73" y="20.7" width="1" height="3.8" fill="#a8a8a8"/><rect x="196.19" y="20.7" width="1" height="3.8" fill="#a8a8a8"/><rect x="206.64" y="20.7" width="1" height="3.8" fill="#a8a8a8"/><rect x="217.1" y="17" width="1" height="7.5" fill="#a8a8a8"/><rect x="227.56" y="20.7" width="1" height="3.8" fill="#a8a8a8"/><rect x="238.01" y="20.7" width="1" height="3.8" fill="#a8a8a8"/><rect x="248.46" y="20.7" width="1" height="3.8" fill="#a8a8a8"/><rect x="258.92" y="20.7" width="1" height="3.8" fill="#a8a8a8"/><rect x="269.38" y="17" width="1" height="7.5" fill="#a8a8a8"/><rect x="279.83" y="20.7" width="1" height="3.8" fill="#a8a8a8"/><rect x="290.28" y="20.7" width="1" height="3.8" fill="#a8a8a8"/><rect x="300.74" y="20.7" width="1" height="3.8" fill="#a8a8a8"/><rect x="311.19" y="20.7" width="1" height="3.8" fill="#a8a8a8"/><rect x="321.65" y="17" width="1" height="7.5" fill="#a8a8a8"/><rect x="332.11" y="20.7" width="1" height="3.8" fill="#a8a8a8"/><rect x="342.56" y="20.7" width="1" height="3.8" fill="#a8a8a8"/><rect x="353.01" y="20.7" width="1" height="3.8" fill="#a8a8a8"/><rect x="363.47" y="20.7" width="1" height="3.8" fill="#a8a8a8"/><rect x="373.92" y="17" width="1" height="7.5" fill="#a8a8a8"/><rect x="384.38" y="20.7" width="1" height="3.8" fill="#a8a8a8"/><rect x="394.84" y="20.7" width="1" height="3.8" fill="#a8a8a8"/><rect x="405.29" y="20.7" width="1" height="3.8" fill="#a8a8a8"/><rect x="415.74" y="20.7" width="1" height="3.8" fill="#a8a8a8"/><rect x="426.2" y="17" width="1" height="7.5" fill="#a8a8a8"/><rect x="436.65" y="20.7" width="1" height="3.8" fill="#a8a8a8"/><rect x="447.11" y="20.7" width="1" height="3.8" fill="#a8a8a8"/><rect x="457.57" y="20.7" width="1" height="3.8" fill="#a8a8a8"/><rect x="468.02" y="20.7" width="1" height="3.8" fill="#a8a8a8"/><rect x="478.47" y="17" width="1" height="7.5" fill="#a8a8a8"/><rect x="488.93" y="20.7" width="1" height="3.8" fill="#a8a8a8"/><rect x="499.38" y="20.7" width="1" height="3.8" fill="#a8a8a8"/><rect x="509.84" y="20.7" width="1" height="3.8" fill="#a8a8a8"/><rect x="520.3" y="20.7" width="1" height="3.8" fill="#a8a8a8"/><rect x="530.75" y="17" width="1" height="7.5" fill="#a8a8a8"/><rect x="541.2" y="20.7" width="1" height="3.8" fill="#a8a8a8"/><rect x="551.66" y="20.7" width="1" height="3.8" fill="#a8a8a8"/><rect x="562.12" y="20.7" width="1" height="3.8" fill="#a8a8a8"/><rect x="572.57" y="20.7" width="1" height="3.8" fill="#a8a8a8"/><rect x="583.03" y="17" width="1" height="7.5" fill="#a8a8a8"/><rect x="593.48" y="20.7" width="1" height="3.8" fill="#a8a8a8"/><rect x="603.93" y="20.7" width="1" height="3.8" fill="#a8a8a8"/><rect x="614.39" y="20.7" width="1" height="3.8" fill="#a8a8a8"/><rect x="624.85" y="20.7" width="1" height="3.8" fill="#a8a8a8"/><rect x="635.3" y="17" width="1" height="7.5" fill="#a8a8a8"/><rect x="645.76" y="20.7" width="1" height="3.8" fill="#a8a8a8"/><rect x="656.21" y="20.7" width="1" height="3.8" fill="#a8a8a8"/><rect x="666.66" y="20.7" width="1" height="3.8" fill="#a8a8a8"/><rect x="677.12" y="20.7" width="1" height="3.8" fill="#a8a8a8"/><rect x="687.57" y="17" width="1" height="7.5" fill="#a8a8a8"/><rect x="698.03" y="20.7" width="1" height="3.8" fill="#a8a8a8"/><rect x="708.49" y="20.7" width="1" height="3.8" fill="#a8a8a8"/><rect x="718.94" y="20.7" width="1" height="3.8" fill="#a8a8a8"/><rect x="729.39" y="20.7" width="1" height="3.8" fill="#a8a8a8"/><rect x="739.85" y="17" width="1" height="7.5" fill="#a8a8a8"/><rect x="750.3" y="20.7" width="1" height="3.8" fill="#a8a8a8"/><rect x="760.76" y="20.7" width="1" height="3.8" fill="#a8a8a8"/><rect x="771.21" y="20.7" width="1" height="3.8" fill="#a8a8a8"/><rect x="781.67" y="20.7" width="1" height="3.8" fill="#a8a8a8"/><rect x="792.12" y="17" width="1" height="7.5" fill="#a8a8a8"/><rect x="802.58" y="20.7" width="1" height="3.8" fill="#a8a8a8"/><rect x="813.03" y="20.7" width="1" height="3.8" fill="#a8a8a8"/><rect x="823.49" y="20.7" width="1" height="3.8" fill="#a8a8a8"/><rect x="833.94" y="20.7" width="1" height="3.8" fill="#a8a8a8"/><rect x="844.4" y="17" width="1" height="7.5" fill="#a8a8a8"/><rect x="854.86" y="20.7" width="1" height="3.8" fill="#a8a8a8"/><rect x="865.31" y="20.7" width="1" height="3.8" fill="#a8a8a8"/><rect x="875.76" y="20.7" width="1" height="3.8" fill="#a8a8a8"/></svg>
<div class="t" style="top:670px;line-height:17px;font-size:13px;color:#dcdcdc;left:733px;width:600px;text-align:center;letter-spacing:-0.3px;">0</div>
<div class="t" style="top:670px;line-height:17px;font-size:13px;color:#dcdcdc;left:785.28px;width:600px;text-align:center;letter-spacing:-0.3px;">15</div>
<div class="t" style="top:670px;line-height:17px;font-size:13px;color:#dcdcdc;left:837.55px;width:600px;text-align:center;letter-spacing:-0.3px;">30</div>
<div class="t" style="top:670px;line-height:17px;font-size:13px;color:#dcdcdc;left:889.83px;width:600px;text-align:center;letter-spacing:-0.3px;">45</div>
<div class="t" style="top:670px;line-height:17px;font-size:13px;color:#dcdcdc;left:942.1px;width:600px;text-align:center;letter-spacing:-0.3px;">60</div>
<div class="t" style="top:670px;line-height:17px;font-size:13px;color:#dcdcdc;left:994.38px;width:600px;text-align:center;letter-spacing:-0.3px;">75</div>
<div class="t" style="top:670px;line-height:17px;font-size:13px;color:#dcdcdc;left:1046.65px;width:600px;text-align:center;letter-spacing:-0.3px;">90</div>
<div class="t" style="top:670px;line-height:17px;font-size:13px;color:#dcdcdc;left:1098.92px;width:600px;text-align:center;letter-spacing:-0.3px;">105</div>
<div class="t" style="top:670px;line-height:17px;font-size:13px;color:#dcdcdc;left:1151.2px;width:600px;text-align:center;letter-spacing:-0.3px;">120</div>
<div class="t" style="top:670px;line-height:17px;font-size:13px;color:#dcdcdc;left:1203.47px;width:600px;text-align:center;letter-spacing:-0.3px;">135</div>
<div class="t" style="top:670px;line-height:17px;font-size:13px;color:#dcdcdc;left:1255.75px;width:600px;text-align:center;letter-spacing:-0.3px;">150</div>
<div class="t" style="top:670px;line-height:17px;font-size:13px;color:#dcdcdc;left:1308.03px;width:600px;text-align:center;letter-spacing:-0.3px;">165</div>
<div class="t" style="top:670px;line-height:17px;font-size:13px;color:#dcdcdc;left:1360.3px;width:600px;text-align:center;letter-spacing:-0.3px;">180</div>
<div class="t" style="top:670px;line-height:17px;font-size:13px;color:#dcdcdc;left:1412.57px;width:600px;text-align:center;letter-spacing:-0.3px;">195</div>
<div class="t" style="top:670px;line-height:17px;font-size:13px;color:#dcdcdc;left:1464.85px;width:600px;text-align:center;letter-spacing:-0.3px;">210</div>
<div class="t" style="top:670px;line-height:17px;font-size:13px;color:#dcdcdc;left:1517.12px;width:600px;text-align:center;letter-spacing:-0.3px;">225</div>
<div class="t" style="top:670px;line-height:17px;font-size:13px;color:#dcdcdc;left:1569.4px;width:600px;text-align:center;letter-spacing:-0.3px;">240</div>
<svg class="b" style="left:1026.5px;top:684px;" width="14" height="28" viewBox="0 0 14 28"><path d="M0.5 -0.700H14.300L7.400 9z" fill="#79c9b0"/><rect x="2.500" y="9" width="5.600" height="17.800" rx="1" fill="#79c9b0"/></svg>
<div class="b" style="left:1032px;top:711px;width:1px;height:251px;background:rgba(90,168,144,0.35);"></div>
<div class="b" style="left:1033px;top:711px;width:1px;height:251px;background:#5aa890;"></div>
<div class="b" style="left:1905px;top:693px;width:5px;height:17.8px;background:#79c9b0;border-radius:1.5px;"></div>
<div class="b" style="left:1034px;top:714px;width:870.7px;height:18px;background:#5f8fe6;border-radius:2px;background:repeating-linear-gradient(135deg,#7aa8ff 0,#6a96ea 1.8px,#6b97ec 12.6px,#7aa8ff 12.8px,#5d85d9 14.6px,#5c84d8 25.46px);"></div>
<div class="b" style="left:1034px;top:736px;width:870.7px;height:18px;background:#fdf090;border-radius:2.5px;border:1px solid #fff;box-sizing:border-box;"></div>
<div class="b" style="left:1035px;top:737px;width:869px;height:16px;background:repeating-conic-gradient(#d9c95c 0 25%,#fdf090 0 100%) 0 0/2px 2px;"></div>
<div class="b" style="left:1034px;top:758.5px;width:870.7px;height:17.5px;background:#fde97e;border-radius:2px;"></div>
<div class="b" style="left:1034px;top:780.5px;width:870.7px;height:17.5px;background:#fde97e;border-radius:2px;"></div>
<div class="b" style="left:1034px;top:802.5px;width:870.7px;height:17.5px;background:#ff87b0;border-radius:2px;"></div>
<div class="b" style="left:1034px;top:824.5px;width:870.7px;height:17.5px;background:#fde97e;border-radius:2px;"></div>
<div class="t" style="top:714px;line-height:17px;font-size:13px;color:#fff;left:1042px;-webkit-text-stroke:0.4px #fff;text-shadow:0 1px 1px rgba(40,60,120,.5);letter-spacing:-0.41px;">Group Array</div>
<div class="t" style="top:736px;line-height:17px;font-size:13px;color:#262626;left:1042px;letter-spacing:-0.34px;">Duplicator</div>
<div class="t" style="top:758px;line-height:17px;font-size:13px;color:#262626;left:1042px;letter-spacing:-1.15px;">Basic Shape</div>
<div class="t" style="top:780px;line-height:17px;font-size:13px;color:#262626;left:1042px;letter-spacing:-0.24px;">profile</div>
<div class="t" style="top:802px;line-height:17px;font-size:13px;color:#fff;left:1042px;-webkit-text-stroke:0.4px #fff;text-shadow:0 1px 1px rgba(150,40,80,.4);letter-spacing:-0.67px;">profile Image Shader</div>
<div class="t" style="top:824px;line-height:17px;font-size:13px;color:#262626;left:1042px;letter-spacing:-0.87px;">Background Shape</div>
<div class="b" style="left:1025.8px;top:963px;width:888.2px;height:12.3px;background:#2e2e2e;"></div>
<div class="b" style="left:1027px;top:964.2px;width:884.7px;height:9.5px;background:#4f4f4f;border-radius:4.7px;"></div>
<div class="b" style="left:1025.8px;top:975.3px;width:888.2px;height:23px;background:#444;"></div>
<svg class="b" style="left:1030px;top:980px;" width="15" height="15" viewBox="0 0 15 15"><rect x="0" y="0" width="15" height="15" rx="3" fill="#2e2e2e"/><path d="M2 4H13M2 8H13" stroke="#e8e8e8" stroke-width="1.6"/><path d="M2 12H9" stroke="#e8e8e8" stroke-width="1.6" stroke-dasharray="2.5 1.2"/><path d="M14.5 11.5V14.5H11.5z" fill="#2ecc71"/></svg>
<div class="b" style="left:1049.3px;top:978px;width:150.7px;height:18.5px;background:#2b2b2b;border-radius:2px;"></div>
<div class="t" style="top:978.5px;line-height:17px;font-size:13px;color:#e6e6e6;left:1052px;letter-spacing:-0.6px;">Default Keyframe Layer</div>
<div class="b" style="left:1206px;top:978px;width:70px;height:18.5px;background:#2b2b2b;border-radius:2px;"></div>
<div class="t" style="top:978.5px;line-height:17px;font-size:13px;color:#585858;left:1211px;">F</div>
<div class="t" style="top:978.5px;line-height:17px;font-size:13px;color:#dcdcdc;left:1223.5px;">-</div>
<div class="t" style="top:978.5px;line-height:17px;font-size:13px;color:#e6e6e6;left:1282px;letter-spacing:-0.57px;">Align:</div>
<div class="b" style="left:1318.3px;top:977.3px;width:52.4px;height:19px;background:#2e2e2e;border-radius:3px;border:1px solid #242424;box-sizing:border-box;"></div>
<div class="b" style="left:1335.3px;top:978.3px;width:1px;height:17px;background:#444;"></div>
<div class="b" style="left:1352.7px;top:978.3px;width:1px;height:17px;background:#444;"></div>
<svg class="b" style="left:1321px;top:980.8px;" width="12" height="12" viewBox="0 0 12 12"><path d="M1 0V12" stroke="#e8e8e8" stroke-width="1.2"/><path d="M3 3H6M3 9H11" stroke="#e8e8e8" stroke-width="1.6" stroke-dasharray="2.5 1.3"/></svg>
<svg class="b" style="left:1338.5px;top:980.8px;" width="12" height="12" viewBox="0 0 12 12"><path d="M6 0V12" stroke="#7fd1b4" stroke-width="1.2"/><path d="M1 3H11M2.5 9H9.5" stroke="#e8e8e8" stroke-width="1.6" stroke-dasharray="2.5 1.3"/></svg>
<svg class="b" style="left:1356px;top:980.8px;" width="12" height="12" viewBox="0 0 12 12"><path d="M11 0V12" stroke="#e8e8e8" stroke-width="1.2"/><path d="M6 3H9M1 9H9" stroke="#e8e8e8" stroke-width="1.6" stroke-dasharray="2.5 1.3"/></svg>
<div class="b" style="left:1375px;top:977.3px;width:17.7px;height:19px;background:#2e2e2e;border-radius:3px;border:1px solid #242424;box-sizing:border-box;"></div>
<svg class="b" style="left:1377.5px;top:980.5px;" width="12.5" height="12.5" viewBox="0 0 12.5 12.5"><rect x="1.5" y="1.5" width="9.5" height="9.5" fill="none" stroke="#bdbdbd" stroke-width="1"/><rect x="0" y="0" width="2.6" height="2.6" fill="#bdbdbd"/><rect x="0" y="9.9" width="2.6" height="2.6" fill="#bdbdbd"/><rect x="9.9" y="0" width="2.6" height="2.6" fill="#bdbdbd"/><rect x="9.9" y="9.9" width="2.6" height="2.6" fill="#bdbdbd"/><rect x="5" y="5" width="2.5" height="2.5" fill="#bdbdbd"/></svg>
<div class="b" style="left:1396px;top:977.3px;width:31.3px;height:19px;background:#2e2e2e;border-radius:3px;border:1px solid #242424;box-sizing:border-box;"></div>
<div class="b" style="left:1414px;top:978.3px;width:1px;height:17px;background:#242424;"></div>
<svg class="b" style="left:1399.5px;top:980px;" width="13" height="13" viewBox="0 0 13 13"><g transform="rotate(-45 6.5 6.5)"><path d="M2 12V6A4.5 4.5 0 0 1 11 6V12H8V6A1.500 1.500 0 0 0 5 6V12z" fill="#e8e8e8"/><path d="M1.500 9.700H5.500M7.500 9.700H11.500" stroke="#2e2e2e" stroke-width="1"/></g></svg>
<svg class="b" style="left:1418px;top:983px;" width="6" height="8" viewBox="0 0 6 8"><path d="M0.5 0.5L5.5 4L0.5 7.5z" fill="none" stroke="#8a8a8a" stroke-width="1"/></svg>
<div class="b" style="left:1430.7px;top:977.3px;width:32px;height:19px;background:#2e2e2e;border-radius:3px;border:1px solid #242424;box-sizing:border-box;"></div>
<div class="b" style="left:1449px;top:978.3px;width:1px;height:17px;background:#242424;"></div>
<svg class="b" style="left:1433.5px;top:980.5px;" width="14" height="12" viewBox="0 0 14 12"><path d="M0 6H14" stroke="#e8e8e8" stroke-width="0.9"/><path d="M4 0.5V11.5M7 3V9M9.5 4.5V7.5" stroke="#e8e8e8" stroke-width="1"/></svg>
<svg class="b" style="left:1453px;top:983px;" width="6" height="8" viewBox="0 0 6 8"><path d="M0.5 0.5L5.5 4L0.5 7.5z" fill="none" stroke="#8a8a8a" stroke-width="1"/></svg>
<svg class="b" style="left:1743px;top:980.5px;" width="14" height="14" viewBox="0 0 14 14"><circle cx="6" cy="6" r="5" fill="none" stroke="#cfcfcf" stroke-width="1.1"/><path d="M3.5 6H8.5M10 10L13 13" stroke="#cfcfcf" stroke-width="1.2"/></svg>
<div class="b" style="left:1766px;top:986px;width:116px;height:2px;background:#4f4f4f;border-radius:1px;"></div>
<svg class="b" style="left:1761.5px;top:981.5px;" width="11" height="11" viewBox="0 0 11 11"><circle cx="5.5" cy="5.5" r="5" fill="#7fd1b4"/><circle cx="5.5" cy="5.5" r="3.2" fill="#58b896"/></svg>
<svg class="b" style="left:1887.5px;top:980.5px;" width="14" height="14" viewBox="0 0 14 14"><circle cx="6" cy="6" r="5" fill="none" stroke="#cfcfcf" stroke-width="1.1"/><path d="M3.5 6H8.5M6 3.5V8.5M10 10L13 13" stroke="#cfcfcf" stroke-width="1.2"/></svg>
<div class="b" style="left:494px;top:998.3px;width:1420px;height:5px;background:#121212;"></div>
<div class="b" style="left:494px;top:1003.3px;width:1420px;height:22.7px;background:#3a3a3a;"></div>
<div class="t" style="top:1007px;line-height:17px;font-size:13px;color:#e0e0e0;left:331.5px;width:600px;text-align:right;word-spacing:-0.5px;letter-spacing:-0.45px;">Scene saved to: D:/DATA/AI Creator/Cavalry/images-in-duplicators.cv.</div>
<div class="t" style="top:1006.5px;line-height:17px;font-size:13px;color:#e6e6e6;left:1349px;font-style:italic;letter-spacing:-1.2px;">Click to see next message</div>
<div class="b" style="left:1477.3px;top:1006px;width:79.4px;height:18px;background:#d2ba5e;border-radius:2px;"></div>
<div class="t" style="top:1007px;line-height:17px;font-size:13px;color:#222;left:1482.7px;letter-spacing:-1.08px;">Feedback</div>
<div class="b" style="left:1560.3px;top:1006px;width:108.4px;height:18px;background:#2ecc71;border-radius:2px;"></div>
<div class="t" style="top:1007px;line-height:17px;font-size:13px;color:#222;left:1565.3px;letter-spacing:-0.63px;">Upgrade to Pro</div>
<div class="b" style="left:1672px;top:1006px;width:129.7px;height:18px;background:#b98df5;border-radius:2px;"></div>
<div class="t" style="top:1007px;line-height:17px;font-size:13px;color:#222;left:1677px;letter-spacing:-0.6px;">New Beta Available</div>
<div class="b" style="left:1805px;top:1006px;width:105.7px;height:18px;background:#2ba5f2;border-radius:2px;"></div>
<div class="t" style="top:1007px;line-height:17px;font-size:13px;color:#222;left:1810.3px;letter-spacing:-0.75px;">Tips and Tricks</div>
<svg class="b" style="left:1538px;top:1009px;" width="12" height="12" viewBox="0 0 12 12"><path d="M1.5 0.5H8L10.5 3V11.5H1.5z" fill="#f4f4f4"/><path d="M3 5H8M3 7.5H7" stroke="#9ab" stroke-width="1"/><path d="M5.5 10L10.8 4.2L12 5.4L6.7 11z" fill="#e8683a"/></svg>
<svg class="b" style="left:1649px;top:1010px;" width="14" height="11" viewBox="0 0 14 11"><path d="M1 5C1 2 3 1 4.5 1.5L6 10H2.5C1 9 1 7 1 5z" fill="#f7c531"/><path d="M13 5C13 2 11 1 9.5 1.5L8 10H11.500C13 9 13 7 13 5z" fill="#f7c531"/></svg>
<svg class="b" style="left:1783px;top:1009px;" width="13" height="13" viewBox="0 0 13 13"><circle cx="6" cy="7" r="5.5" fill="#f9c23c"/><path d="M3 1.5L9 0.5L7.5 5z" fill="#e05fa0"/><path d="M3.5 9Q6 11.5 8.500 9" stroke="#8a4b12" fill="none"/><circle cx="11" cy="3" r="1" fill="#5fc0f0"/><circle cx="11.500" cy="9.500" r="0.9" fill="#e05f5f"/></svg>
<svg class="b" style="left:1893px;top:1009px;" width="13" height="13" viewBox="0 0 13 13"><path d="M12.500 0.500C8 0.500 4.500 4 3.500 7.500L5.500 9.500C9 8.500 12.500 5 12.500 0.500z" fill="#e8e8f4"/><circle cx="8.700" cy="4.300" r="1.300" fill="#4aa0e8"/><path d="M3.500 7.500L1 7L3 4.500zM5.500 9.500L6 12L8.500 10z" fill="#e0483a"/><path d="M2.500 10.500L0.500 12.500" stroke="#f7a531" stroke-width="1.500"/></svg>
<!-- p_taskbar -->
<div class="b" style="left:0px;top:1024px;width:494px;height:8px;background:#1c1c1c;"></div>
<div class="b" style="left:494px;top:1026px;width:1426px;height:6px;background:#1c1c1c;"></div>
<div class="b" style="left:0px;top:1032px;width:1920px;height:48px;background:linear-gradient(90deg,#e5e1d9 0%,#e3e0d2 30%,#dde4bc 42%,#dde3bf 50%,#dcdfcb 60%,#dbdbd5 70%,#dcdcdb 100%);"></div>
<svg class="b" style="left:20px;top:1044px;" width="24" height="24" viewBox="0 0 24 24"><defs><linearGradient id="wg" x1="0" y1="0" x2="1" y2="1"><stop offset="0" stop-color="#4cc2f5"/><stop offset="1" stop-color="#0a6fd0"/></linearGradient></defs><rect x="0.5" y="0.5" width="11" height="11" rx="0.800" fill="url(#wg)"/><rect x="0.5" y="12.5" width="11" height="11" rx="0.800" fill="url(#wg)"/><rect x="12.5" y="0.5" width="11" height="11" rx="0.800" fill="url(#wg)"/><rect x="12.5" y="12.5" width="11" height="11" rx="0.800" fill="url(#wg)"/></svg>
<svg class="b" style="left:64px;top:1044px;" width="24" height="24" viewBox="0 0 24 24"><circle cx="10" cy="10" r="7.800" fill="none" stroke="#1a86d8" stroke-width="2.600"/><path d="M15.500 15.500L22 22" stroke="#1a86d8" stroke-width="3" stroke-linecap="round"/></svg>
<svg class="b" style="left:108px;top:1044px;" width="24" height="24" viewBox="0 0 24 24"><rect x="7.500" y="1.500" width="16" height="15" rx="1.500" fill="#f2f2f2"/><rect x="0.500" y="7" width="17" height="15.500" rx="1.500" fill="#2a2a2a"/><rect x="7.500" y="7" width="10" height="9.500" fill="#8a8a8a"/></svg>
<svg class="b" style="left:152px;top:1044px;" width="24" height="24" viewBox="0 0 24 24"><defs><linearGradient id="cg" x1="0" y1="0" x2="1" y2="1"><stop offset="0" stop-color="#2a7cf0"/><stop offset="0.350" stop-color="#3bd0a0"/><stop offset="0.600" stop-color="#f7c531"/><stop offset="0.800" stop-color="#f0603a"/><stop offset="1" stop-color="#c050e0"/></linearGradient></defs><path d="M7 1.500H14C16 1.500 17 3 17.500 5L21.500 17C22.500 20 21 22.500 18 22.500H10C8 22.500 7 21 6.500 19L2.500 7C1.500 4 4 1.500 7 1.500z" fill="url(#cg)"/><path d="M9.500 7.500H13.500L15.500 16.500H11.500z" fill="#e6e2d9"/></svg>
<svg class="b" style="left:196px;top:1044px;" width="24" height="24" viewBox="0 0 24 24"><path d="M0.500 4A1.500 1.500 0 0 1 2 2.500H8L10 4.500H22A1.500 1.500 0 0 1 23.500 6V8H0.500z" fill="#e8a820"/><rect x="0.500" y="6" width="23" height="15.500" rx="1.500" fill="#fcd04a"/><rect x="5" y="15" width="14" height="6.500" rx="1" fill="#2a7cd8"/></svg>
<div class="b" style="left:206.5px;top:1072px;width:5px;height:2.5px;background:#8a8a8a;border-radius:1.5px;"></div>
<svg class="b" style="left:240px;top:1044px;" width="24" height="24" viewBox="0 0 24 24"><path d="M7.5 7V5.5A4.500 4.500 0 0 1 16.500 5.500V7" fill="none" stroke="#3aa0e8" stroke-width="1.800"/><rect x="0.500" y="6" width="23" height="17.500" rx="2.500" fill="#1a5aa8"/><rect x="7" y="9.500" width="4.500" height="4.500" fill="#f0503a"/><rect x="12.500" y="9.500" width="4.500" height="4.500" fill="#7ac143"/><rect x="7" y="15" width="4.500" height="4.500" fill="#2aa0f0"/><rect x="12.500" y="15" width="4.500" height="4.500" fill="#fcc22a"/></svg>
<svg class="b" style="left:284px;top:1044px;" width="24" height="24" viewBox="0 0 24 24"><rect x="0.500" y="3" width="23" height="18" rx="1.500" fill="#2b2b2b"/><rect x="0.500" y="3" width="23" height="3" fill="#555"/><path d="M4 10L8.500 13.500L4 17" fill="none" stroke="#f0f0f0" stroke-width="1.800"/><path d="M10.500 17.500H16" stroke="#f0f0f0" stroke-width="1.800"/></svg>
<div class="b" style="left:294.5px;top:1072px;width:5px;height:2.5px;background:#8a8a8a;border-radius:1.5px;"></div>
<svg class="b" style="left:328px;top:1044px;" width="24" height="24" viewBox="0 0 24 24"><g transform="rotate(45 12 12)"><rect x="4" y="4" width="7.500" height="7.500" rx="1" fill="#e87a8a"/><rect x="12.500" y="4" width="7.500" height="7.500" rx="1" fill="#8fd08a"/><rect x="4" y="12.500" width="7.500" height="7.500" rx="1" fill="#9ab8f0"/><rect x="12.500" y="12.500" width="7.500" height="7.500" rx="1" fill="#f5e27a"/></g></svg>
<div class="b" style="left:338.5px;top:1072px;width:5px;height:2.5px;background:#8a8a8a;border-radius:1.5px;"></div>
<svg class="b" style="left:372px;top:1044px;" width="24" height="24" viewBox="0 0 24 24"><circle cx="12" cy="12" r="11.500" fill="#e8453a"/><path d="M12 12L2 6A11.500 11.500 0 0 0 8 22.800z" fill="#2ba24c"/><path d="M12 12L8 22.800A11.500 11.500 0 0 0 23.500 12z" fill="#fcc22a"/><circle cx="12" cy="12" r="5.200" fill="#fff"/><circle cx="12" cy="12" r="4" fill="#3a7cf0"/></svg>
<svg class="b" style="left:1664px;top:1052px;" width="12" height="8" viewBox="0 0 12 8"><path d="M1 7L6 1.500L11 7" fill="none" stroke="#1c1c1c" stroke-width="1.400"/></svg>
<svg class="b" style="left:1695px;top:1049px;" width="14" height="14" viewBox="0 0 14 14"><path d="M0 4H14M0 10H14" stroke="#1c1c1c" stroke-width="1.600"/><rect x="8" y="1" width="2.600" height="6" fill="#1c1c1c"/><rect x="3" y="7" width="2.600" height="6" fill="#1c1c1c"/></svg>
<svg class="b" style="left:1726px;top:1050px;" width="14" height="12" viewBox="0 0 14 12"><path d="M1 0V12M13 0V12" stroke="#1c1c1c" stroke-width="1.800"/><path d="M4 11V3L7 8.500L10 3V11" fill="none" stroke="#1c1c1c" stroke-width="1.800"/></svg>
<svg class="b" style="left:1757px;top:1049px;" width="17" height="13" viewBox="0 0 17 13"><path d="M1 4.500A11 11 0 0 1 16 4.500M3.500 7.500A7.500 7.500 0 0 1 13.500 7.500M6 10.300A3.800 3.800 0 0 1 11 10.300" fill="none" stroke="#1c1c1c" stroke-width="1.300"/><circle cx="8.500" cy="12" r="1.100" fill="#1c1c1c"/></svg>
<svg class="b" style="left:1781px;top:1049px;" width="16" height="14" viewBox="0 0 16 14"><path d="M1 5H3.500L7 1.500V12.500L3.500 9H1z" fill="none" stroke="#1c1c1c" stroke-width="1.200"/><path d="M9.500 4.500A3.500 3.500 0 0 1 9.500 9.500M11.500 2.500A6.500 6.500 0 0 1 11.500 11.500" fill="none" stroke="#1c1c1c" stroke-width="1.200"/><path d="M13.500 1A9 9 0 0 1 13.500 13" fill="none" stroke="#9a9a9a" stroke-width="1.100"/></svg>
<svg class="b" style="left:1805px;top:1048px;" width="18" height="14" viewBox="0 0 18 14"><rect x="2" y="4" width="13" height="8.500" rx="2" fill="#1c1c1c"/><rect x="15.500" y="6.500" width="1.800" height="3.500" rx="0.800" fill="#1c1c1c"/><path d="M1 0.500V4M0 2.500L1 4L2.500 3" stroke="#1c1c1c" stroke-width="1.200" fill="none"/><path d="M4 1.500L7 3.500" stroke="#1c1c1c" stroke-width="1.200"/></svg>
<div class="t" style="top:1041.2px;line-height:16px;font-size:12px;color:#1c1c1c;left:1300.7px;width:600px;text-align:right;letter-spacing:-0.1px;">21.47</div>
<div class="t" style="top:1056.8px;line-height:16px;font-size:12px;color:#1c1c1c;left:1839.3px;letter-spacing:0.15px;">04/10/2025</div>
<!-- p_menus -->
<div class="b" style="left:145px;top:643px;width:237px;height:348px;background:#252525;box-shadow:0 0 0 1px #1a1a1a,0 3px 8px rgba(0,0,0,.45);overflow:visible;"></div>
<div class="b" style="left:145px;top:665.8px;width:237px;height:1.4px;background:#3c3c3c;"></div>
<div class="b" style="left:145px;top:689.8px;width:237px;height:1.4px;background:#3c3c3c;"></div>
<div class="b" style="left:145px;top:713.8px;width:237px;height:1.4px;background:#3c3c3c;"></div>
<div class="b" style="left:145px;top:737.8px;width:237px;height:1.4px;background:#3c3c3c;"></div>
<div class="b" style="left:145px;top:761.8px;width:237px;height:1.4px;background:#3c3c3c;"></div>
<div class="b" style="left:145px;top:876.3px;width:237px;height:1.4px;background:#3c3c3c;"></div>
<div class="b" style="left:145px;top:921.3px;width:237px;height:1.4px;background:#3c3c3c;"></div>
<div class="b" style="left:145px;top:945.8px;width:237px;height:1.4px;background:#3c3c3c;"></div>
<div class="t" style="top:646px;line-height:17px;font-size:13px;color:#f0f0f0;left:167px;letter-spacing:-0.8px;">Set Keyframe</div>
<div class="t" style="top:646px;line-height:17px;font-size:13px;color:#f0f0f0;left:31.5px;width:600px;text-align:center;">X</div>
<div class="t" style="top:646px;line-height:17px;font-size:13px;color:#f0f0f0;left:66px;width:600px;text-align:center;">Y</div>
<div class="t" style="top:669.5px;line-height:17px;font-size:13px;color:#6a6a6a;left:167px;letter-spacing:-0.81px;">Add Expression...</div>
<div class="t" style="top:693.5px;line-height:17px;font-size:13px;color:#f0f0f0;left:167px;letter-spacing:-0.38px;">Reset Attribute Value to Default</div>
<div class="t" style="top:718px;line-height:17px;font-size:13px;color:#f0f0f0;left:167px;letter-spacing:-1.2px;">Rename...</div>
<div class="t" style="top:742px;line-height:17px;font-size:13px;color:#f0f0f0;left:167px;letter-spacing:-0.33px;">Mute Input</div>
<div class="t" style="top:742px;line-height:17px;font-size:13px;color:#5a5a5a;left:31.5px;width:600px;text-align:center;">X</div>
<div class="t" style="top:742px;line-height:17px;font-size:13px;color:#5a5a5a;left:66px;width:600px;text-align:center;">Y</div>
<div class="t" style="top:766px;line-height:17px;font-size:13px;color:#f0f0f0;left:167px;letter-spacing:-0.29px;">Control with Null</div>
<div class="t" style="top:790px;line-height:17px;font-size:13px;color:#f0f0f0;left:167px;letter-spacing:-0.65px;">Add Behaviour</div>
<svg class="b" style="left:148.5px;top:793px;" width="10" height="10" viewBox="0 0 10 10"><path d="M5 0.5V9.5M0.5 5H9.5" stroke="#f0f0f0" stroke-width="1.5"/></svg>
<svg class="b" style="left:370px;top:794px;" width="5" height="9" viewBox="0 0 5 9"><path d="M0.7 0.7L4.3 4.5L0.7 8.3" fill="none" stroke="#bdbdbd" stroke-width="1.1"/></svg>
<div class="t" style="top:811.5px;line-height:17px;font-size:13px;color:#f0f0f0;left:167px;letter-spacing:-0.45px;">Add Array</div>
<svg class="b" style="left:148.5px;top:814.5px;" width="10" height="10" viewBox="0 0 10 10"><path d="M5 0.5V9.5M0.5 5H9.5" stroke="#f0f0f0" stroke-width="1.5"/></svg>
<svg class="b" style="left:370px;top:815.5px;" width="5" height="9" viewBox="0 0 5 9"><path d="M0.7 0.7L4.3 4.5L0.7 8.3" fill="none" stroke="#bdbdbd" stroke-width="1.1"/></svg>
<div class="t" style="top:834px;line-height:17px;font-size:13px;color:#f0f0f0;left:167px;letter-spacing:-0.44px;">Add Math/ Script</div>
<svg class="b" style="left:148.5px;top:837px;" width="10" height="10" viewBox="0 0 10 10"><path d="M5 0.5V9.5M0.5 5H9.5" stroke="#f0f0f0" stroke-width="1.5"/></svg>
<svg class="b" style="left:370px;top:838px;" width="5" height="9" viewBox="0 0 5 9"><path d="M0.7 0.7L4.3 4.5L0.7 8.3" fill="none" stroke="#bdbdbd" stroke-width="1.1"/></svg>
<div class="t" style="top:856px;line-height:17px;font-size:13px;color:#f0f0f0;left:167px;letter-spacing:-0.15px;">Add Utility</div>
<svg class="b" style="left:148.5px;top:859px;" width="10" height="10" viewBox="0 0 10 10"><path d="M5 0.5V9.5M0.5 5H9.5" stroke="#f0f0f0" stroke-width="1.5"/></svg>
<svg class="b" style="left:370px;top:860px;" width="5" height="9" viewBox="0 0 5 9"><path d="M0.7 0.7L4.3 4.5L0.7 8.3" fill="none" stroke="#bdbdbd" stroke-width="1.1"/></svg>
<div class="t" style="top:879.5px;line-height:17px;font-size:13px;color:#6a6a6a;left:167px;letter-spacing:-0.48px;">Set Selected Attributes</div>
<div class="t" style="top:902px;line-height:17px;font-size:13px;color:#f0f0f0;left:167px;letter-spacing:-0.85px;">Set Selected Layers</div>
<div class="t" style="top:925.5px;line-height:17px;font-size:13px;color:#f0f0f0;left:167px;letter-spacing:-0.81px;">Copy Value</div>
<div class="t" style="top:949.5px;line-height:17px;font-size:13px;color:#f0f0f0;left:167px;letter-spacing:-0.83px;">Copy Layer Id</div>
<div class="t" style="top:971.5px;line-height:17px;font-size:13px;color:#f0f0f0;left:167px;letter-spacing:-0.66px;">Copy Scripting Path</div>
<svg class="b" style="left:370px;top:975.5px;" width="5" height="9" viewBox="0 0 5 9"><path d="M0.7 0.7L4.3 4.5L0.7 8.3" fill="none" stroke="#bdbdbd" stroke-width="1.1"/></svg>
<div class="b" style="left:143px;top:784px;width:239px;height:31.5px;border-radius:1px;border:3px solid #b4e61e;box-sizing:border-box;"></div>
<div class="b" style="left:382px;top:618px;width:238px;height:462px;background:#252525;box-shadow:0 0 0 1px #1a1a1a,0 3px 8px rgba(0,0,0,.45);overflow:visible;"></div>
<div class="b" style="left:383px;top:970.7px;width:237px;height:21.3px;background:#2c2c2c;"></div>
<div class="b" style="left:383px;top:969.5px;width:170px;height:24.5px;background:#454545;"></div>
<div class="t" style="top:621px;line-height:17px;font-size:13px;color:#f0f0f0;left:404.4px;letter-spacing:-0.99px;">Area Range</div>
<div class="t" style="top:621px;line-height:17px;font-size:13px;color:#5a5a5a;left:268.7px;width:600px;text-align:center;">X</div>
<div class="t" style="top:621px;line-height:17px;font-size:13px;color:#5a5a5a;left:302.7px;width:600px;text-align:center;">Y</div>
<svg class="b" style="left:384px;top:622px;" width="14" height="14" viewBox="0 0 14 14"><rect x="1" y="6" width="7" height="7" fill="#9fe09f"/><path d="M3 3.5V1H13V11H10.500" fill="none" stroke="#e8e8e8" stroke-width="1.1"/><path d="M8.500 5.500L12 2" stroke="#e8e8e8" stroke-width="1"/></svg>
<div class="t" style="top:643px;line-height:17px;font-size:13px;color:#f0f0f0;left:404.4px;letter-spacing:-0.5px;">Behaviour Mixer</div>
<div class="t" style="top:643px;line-height:17px;font-size:13px;color:#f2f2f2;left:268.7px;width:600px;text-align:center;">X</div>
<div class="t" style="top:643px;line-height:17px;font-size:13px;color:#f2f2f2;left:302.7px;width:600px;text-align:center;">Y</div>
<svg class="b" style="left:384px;top:644px;" width="14" height="14" viewBox="0 0 14 14"><path d="M0.500 7H12.500A6 5.500 0 0 1 0.500 7z" fill="#9fe09f"/><path d="M6 6L10 1" stroke="#e8e8e8" stroke-width="1.800"/><ellipse cx="6.500" cy="6.500" rx="6" ry="2" fill="none" stroke="#9fe09f" stroke-width="1"/></svg>
<div class="t" style="top:665px;line-height:17px;font-size:13px;color:#f0f0f0;left:404.4px;letter-spacing:-1.14px;">Frame</div>
<div class="t" style="top:665px;line-height:17px;font-size:13px;color:#f2f2f2;left:268.7px;width:600px;text-align:center;">X</div>
<div class="t" style="top:665px;line-height:17px;font-size:13px;color:#f2f2f2;left:302.7px;width:600px;text-align:center;">Y</div>
<svg class="b" style="left:384px;top:666px;" width="14" height="14" viewBox="0 0 14 14"><path d="M3.500 1H10.500L7 5z" fill="#9fe09f"/><path d="M7 5V13" stroke="#9fe09f" stroke-width="1.500"/><path d="M2 6V8M12 6V8" stroke="#e8e8e8" stroke-width="1.200"/></svg>
<div class="t" style="top:687px;line-height:17px;font-size:13px;color:#f0f0f0;left:404.4px;letter-spacing:-0.49px;">Get Vector</div>
<div class="t" style="top:687px;line-height:17px;font-size:13px;color:#5a5a5a;left:268.7px;width:600px;text-align:center;">X</div>
<div class="t" style="top:687px;line-height:17px;font-size:13px;color:#5a5a5a;left:302.7px;width:600px;text-align:center;">Y</div>
<svg class="b" style="left:384px;top:688px;" width="14" height="14" viewBox="0 0 14 14"><path d="M1.500 0V1.500M1.500 3.500V5M1.500 7V8.500M1.500 10.500V12M3 12.500H4.500M6.500 12.500H8M10 12.500H11.500" stroke="#e8e8e8" stroke-width="1"/><path d="M3 11L12 2M7 1.500H12.500V7" fill="none" stroke="#9fe09f" stroke-width="1.300"/></svg>
<div class="t" style="top:709px;line-height:17px;font-size:13px;color:#f0f0f0;left:404.4px;letter-spacing:-0.36px;">Is Within</div>
<div class="t" style="top:709px;line-height:17px;font-size:13px;color:#f2f2f2;left:268.7px;width:600px;text-align:center;">X</div>
<div class="t" style="top:709px;line-height:17px;font-size:13px;color:#f2f2f2;left:302.7px;width:600px;text-align:center;">Y</div>
<svg class="b" style="left:384px;top:710px;" width="14" height="14" viewBox="0 0 14 14"><rect x="0.600" y="3.600" width="12.800" height="6.800" rx="3.400" fill="none" stroke="#e8e8e8" stroke-width="1.200"/><path d="M4 3.600H8V10.400H4A3.400 3.400 0 0 1 4 3.600z" fill="#9fe09f"/></svg>
<div class="t" style="top:731px;line-height:17px;font-size:13px;color:#f0f0f0;left:404.4px;letter-spacing:-0.55px;">Material Sampler</div>
<div class="t" style="top:731px;line-height:17px;font-size:13px;color:#f2f2f2;left:268.7px;width:600px;text-align:center;">X</div>
<div class="t" style="top:731px;line-height:17px;font-size:13px;color:#f2f2f2;left:302.7px;width:600px;text-align:center;">Y</div>
<svg class="b" style="left:384px;top:732px;" width="14" height="14" viewBox="0 0 14 14"><rect x="0.0" y="0.0" width="2.500" height="2.500" fill="#e8e8e8"/><rect x="0.0" y="3.5" width="2.500" height="2.500" fill="#9fe09f"/><rect x="0.0" y="7.0" width="2.500" height="2.500" fill="#9fe09f"/><rect x="0.0" y="10.5" width="2.500" height="2.500" fill="#9fe09f"/><rect x="3.5" y="0.0" width="2.500" height="2.500" fill="#9fe09f"/><rect x="3.5" y="3.5" width="2.500" height="2.500" fill="#e8e8e8"/><rect x="3.5" y="7.0" width="2.500" height="2.500" fill="#9fe09f"/><rect x="3.5" y="10.5" width="2.500" height="2.500" fill="#9fe09f"/><rect x="7.0" y="0.0" width="2.500" height="2.500" fill="#9fe09f"/><rect x="7.0" y="3.5" width="2.500" height="2.500" fill="#9fe09f"/><rect x="7.0" y="7.0" width="2.500" height="2.500" fill="#e8e8e8"/><rect x="7.0" y="10.5" width="2.500" height="2.500" fill="#9fe09f"/><rect x="10.5" y="0.0" width="2.500" height="2.500" fill="#9fe09f"/><rect x="10.5" y="3.5" width="2.500" height="2.500" fill="#9fe09f"/><rect x="10.5" y="7.0" width="2.500" height="2.500" fill="#9fe09f"/><rect x="10.5" y="10.5" width="2.500" height="2.500" fill="#e8e8e8"/></svg>
<div class="t" style="top:753px;line-height:17px;font-size:13px;color:#f0f0f0;left:404.4px;letter-spacing:-0.35px;">Modulate</div>
<div class="t" style="top:753px;line-height:17px;font-size:13px;color:#f2f2f2;left:268.7px;width:600px;text-align:center;">X</div>
<div class="t" style="top:753px;line-height:17px;font-size:13px;color:#f2f2f2;left:302.7px;width:600px;text-align:center;">Y</div>
<svg class="b" style="left:384px;top:754px;" width="14" height="14" viewBox="0 0 14 14"><path d="M0 11H2.500V2.500H5.500V11H8V2.500H11V11H14" fill="none" stroke="#9fe09f" stroke-width="1.200"/></svg>
<div class="t" style="top:775px;line-height:17px;font-size:13px;color:#f0f0f0;left:404.4px;letter-spacing:-0.81px;">Noise</div>
<div class="t" style="top:775px;line-height:17px;font-size:13px;color:#f2f2f2;left:268.7px;width:600px;text-align:center;">X</div>
<div class="t" style="top:775px;line-height:17px;font-size:13px;color:#f2f2f2;left:302.7px;width:600px;text-align:center;">Y</div>
<svg class="b" style="left:384px;top:776px;" width="14" height="14" viewBox="0 0 14 14"><rect x="0.0" y="0.0" width="2.800" height="2.800" fill="#9fe09f"/><rect x="0.0" y="2.8" width="2.800" height="2.800" fill="#5a8a5a"/><rect x="0.0" y="5.6" width="2.800" height="2.800" fill="#e8e8e8"/><rect x="0.0" y="8.399999999999999" width="2.800" height="2.800" fill="#3a5a3a"/><rect x="0.0" y="11.2" width="2.800" height="2.800" fill="#9fe09f"/><rect x="2.8" y="0.0" width="2.800" height="2.800" fill="#3a5a3a"/><rect x="2.8" y="2.8" width="2.800" height="2.800" fill="#5a8a5a"/><rect x="2.8" y="5.6" width="2.800" height="2.800" fill="#3a5a3a"/><rect x="2.8" y="8.399999999999999" width="2.800" height="2.800" fill="#5a8a5a"/><rect x="2.8" y="11.2" width="2.800" height="2.800" fill="#3a5a3a"/><rect x="5.6" y="0.0" width="2.800" height="2.800" fill="#e8e8e8"/><rect x="5.6" y="2.8" width="2.800" height="2.800" fill="#5a8a5a"/><rect x="5.6" y="5.6" width="2.800" height="2.800" fill="#9fe09f"/><rect x="5.6" y="8.399999999999999" width="2.800" height="2.800" fill="#3a5a3a"/><rect x="5.6" y="11.2" width="2.800" height="2.800" fill="#e8e8e8"/><rect x="8.399999999999999" y="0.0" width="2.800" height="2.800" fill="#5a8a5a"/><rect x="8.399999999999999" y="2.8" width="2.800" height="2.800" fill="#5a8a5a"/><rect x="8.399999999999999" y="5.6" width="2.800" height="2.800" fill="#5a8a5a"/><rect x="8.399999999999999" y="8.399999999999999" width="2.800" height="2.800" fill="#5a8a5a"/><rect x="8.399999999999999" y="11.2" width="2.800" height="2.800" fill="#5a8a5a"/><rect x="11.2" y="0.0" width="2.800" height="2.800" fill="#9fe09f"/><rect x="11.2" y="2.8" width="2.800" height="2.800" fill="#5a8a5a"/><rect x="11.2" y="5.6" width="2.800" height="2.800" fill="#e8e8e8"/><rect x="11.2" y="8.399999999999999" width="2.800" height="2.800" fill="#3a5a3a"/><rect x="11.2" y="11.2" width="2.800" height="2.800" fill="#9fe09f"/></svg>
<div class="t" style="top:797px;line-height:17px;font-size:13px;color:#f0f0f0;left:404.4px;letter-spacing:-0.92px;">Number Range</div>
<div class="t" style="top:797px;line-height:17px;font-size:13px;color:#f2f2f2;left:268.7px;width:600px;text-align:center;">X</div>
<div class="t" style="top:797px;line-height:17px;font-size:13px;color:#f2f2f2;left:302.7px;width:600px;text-align:center;">Y</div>
<svg class="b" style="left:384px;top:798px;" width="14" height="14" viewBox="0 0 14 14"><rect x="7" y="1" width="3.500" height="12" fill="#9fe09f"/><rect x="3" y="7" width="3.500" height="6" fill="#e8e8e8"/></svg>
<div class="t" style="top:819px;line-height:17px;font-size:13px;color:#f0f0f0;left:404.4px;letter-spacing:-0.35px;">Oscillator</div>
<div class="t" style="top:819px;line-height:17px;font-size:13px;color:#f2f2f2;left:268.7px;width:600px;text-align:center;">X</div>
<div class="t" style="top:819px;line-height:17px;font-size:13px;color:#f2f2f2;left:302.7px;width:600px;text-align:center;">Y</div>
<svg class="b" style="left:384px;top:820px;" width="14" height="14" viewBox="0 0 14 14"><path d="M-2 8C-0.500 0 2 0 3.500 7S6.500 14 8 7S11 0 12.500 7S15 12 16 9" fill="none" stroke="#9fe09f" stroke-width="1.400"/></svg>
<div class="t" style="top:841px;line-height:17px;font-size:13px;color:#f0f0f0;left:404.4px;letter-spacing:-0.54px;">Pathfinder</div>
<div class="t" style="top:841px;line-height:17px;font-size:13px;color:#5a5a5a;left:268.7px;width:600px;text-align:center;">X</div>
<div class="t" style="top:841px;line-height:17px;font-size:13px;color:#5a5a5a;left:302.7px;width:600px;text-align:center;">Y</div>
<svg class="b" style="left:384px;top:842px;" width="14" height="14" viewBox="0 0 14 14"><path d="M1.500 5A3 3 0 0 1 7.500 5V8A3 3 0 0 0 13.500 8" fill="none" stroke="#9fe09f" stroke-width="1.300"/><circle cx="1.200" cy="5.500" r="1.200" fill="none" stroke="#e8e8e8"/><circle cx="13.800" cy="7.500" r="1.200" fill="none" stroke="#e8e8e8"/></svg>
<div class="t" style="top:863px;line-height:17px;font-size:13px;color:#f0f0f0;left:404.4px;letter-spacing:-0.62px;">Position Blend</div>
<div class="t" style="top:863px;line-height:17px;font-size:13px;color:#5a5a5a;left:268.7px;width:600px;text-align:center;">X</div>
<div class="t" style="top:863px;line-height:17px;font-size:13px;color:#5a5a5a;left:302.7px;width:600px;text-align:center;">Y</div>
<svg class="b" style="left:384px;top:864px;" width="14" height="14" viewBox="0 0 14 14"><rect x="0" y="0" width="2.800" height="2.800" fill="#e8e8e8"/><rect x="11" y="11" width="2.800" height="2.800" fill="#e8e8e8"/><path d="M3.500 3.500L9.500 9.500M9.500 5.500V9.500H5.500" fill="none" stroke="#9fe09f" stroke-width="1.200"/></svg>
<div class="t" style="top:885px;line-height:17px;font-size:13px;color:#f0f0f0;left:404.4px;letter-spacing:-1.2px;">Random</div>
<div class="t" style="top:885px;line-height:17px;font-size:13px;color:#f2f2f2;left:268.7px;width:600px;text-align:center;">X</div>
<div class="t" style="top:885px;line-height:17px;font-size:13px;color:#f2f2f2;left:302.7px;width:600px;text-align:center;">Y</div>
<svg class="b" style="left:384px;top:886px;" width="14" height="14" viewBox="0 0 14 14"><path d="M0.7 0.19999999999999996L3.3 2.8M3.3 0.19999999999999996L0.7 2.8" stroke="#e8e8e8" stroke-width="0.900"/><path d="M10.2 0.7L12.8 3.3M12.8 0.7L10.2 3.3" stroke="#9fe09f" stroke-width="0.900"/><path d="M5.7 4.7L8.3 7.3M8.3 4.7L5.7 7.3" stroke="#e8e8e8" stroke-width="0.900"/><path d="M1.2 10.2L3.8 12.8M3.8 10.2L1.2 12.8" stroke="#9fe09f" stroke-width="0.900"/><path d="M10.2 9.7L12.8 12.3M12.8 9.7L10.2 12.3" stroke="#e8e8e8" stroke-width="0.900"/><path d="M6.2 0.19999999999999996L8.8 2.8M8.8 0.19999999999999996L6.2 2.8" stroke="#9fe09f" stroke-width="0.900"/></svg>
<div class="t" style="top:907px;line-height:17px;font-size:13px;color:#f0f0f0;left:404.4px;letter-spacing:-1.13px;">Round</div>
<div class="t" style="top:907px;line-height:17px;font-size:13px;color:#f2f2f2;left:268.7px;width:600px;text-align:center;">X</div>
<div class="t" style="top:907px;line-height:17px;font-size:13px;color:#f2f2f2;left:302.7px;width:600px;text-align:center;">Y</div>
<svg class="b" style="left:384px;top:908px;" width="14" height="14" viewBox="0 0 14 14"><path d="M1 7H13" stroke="#e8e8e8" stroke-width="1"/><path d="M7 0.500V5M5 2.500L7 0.500L9 2.500M7 13.500V9M5 11.500L7 13.500L9 11.500" fill="none" stroke="#9fe09f" stroke-width="1.100"/></svg>
<div class="t" style="top:929px;line-height:17px;font-size:13px;color:#f0f0f0;left:404.4px;letter-spacing:-1.2px;">Sound</div>
<div class="t" style="top:929px;line-height:17px;font-size:13px;color:#f2f2f2;left:268.7px;width:600px;text-align:center;">X</div>
<div class="t" style="top:929px;line-height:17px;font-size:13px;color:#f2f2f2;left:302.7px;width:600px;text-align:center;">Y</div>
<svg class="b" style="left:384px;top:930px;" width="14" height="14" viewBox="0 0 14 14"><path d="M4.500 11V2L12.500 0.500V9.500" fill="none" stroke="#9fe09f" stroke-width="1.500"/><ellipse cx="2.700" cy="11.300" rx="2.500" ry="2" fill="#9fe09f"/><ellipse cx="10.700" cy="9.800" rx="2.500" ry="2" fill="#9fe09f"/></svg>
<div class="t" style="top:951px;line-height:17px;font-size:13px;color:#f0f0f0;left:404.4px;letter-spacing:-1.04px;">Stagger</div>
<div class="t" style="top:951px;line-height:17px;font-size:13px;color:#f2f2f2;left:268.7px;width:600px;text-align:center;">X</div>
<div class="t" style="top:951px;line-height:17px;font-size:13px;color:#f2f2f2;left:302.7px;width:600px;text-align:center;">Y</div>
<svg class="b" style="left:384px;top:952px;" width="14" height="14" viewBox="0 0 14 14"><path d="M0.500 3H7" stroke="#9fe09f" stroke-width="2.200"/><path d="M3 7H10.500" stroke="#e8e8e8" stroke-width="2.200"/><path d="M6 11H13.500" stroke="#9fe09f" stroke-width="2.200"/></svg>
<div class="t" style="top:973px;line-height:17px;font-size:13px;color:#f0f0f0;left:404.4px;letter-spacing:-0.82px;">Value</div>
<div class="t" style="top:973px;line-height:17px;font-size:13px;color:#f2f2f2;left:268.7px;width:600px;text-align:center;">X</div>
<div class="t" style="top:973px;line-height:17px;font-size:13px;color:#f2f2f2;left:302.7px;width:600px;text-align:center;">Y</div>
<svg class="b" style="left:384px;top:974px;" width="14" height="14" viewBox="0 0 14 14"><path d="M2 3H12L7 11z" fill="none" stroke="#9fe09f" stroke-width="1.400"/></svg>
<div class="t" style="top:995px;line-height:17px;font-size:13px;color:#f0f0f0;left:404.4px;letter-spacing:-0.77px;">Value Blend</div>
<div class="t" style="top:995px;line-height:17px;font-size:13px;color:#f2f2f2;left:268.7px;width:600px;text-align:center;">X</div>
<div class="t" style="top:995px;line-height:17px;font-size:13px;color:#f2f2f2;left:302.7px;width:600px;text-align:center;">Y</div>
<svg class="b" style="left:384px;top:996px;" width="14" height="14" viewBox="0 0 14 14"><path d="M0.500 3H9.500L5 10.500z" fill="none" stroke="#9fe09f" stroke-width="1.200"/><path d="M7 10.500L11.500 3H13.500" fill="none" stroke="#9fe09f" stroke-width="1.200"/></svg>
<div class="t" style="top:1017px;line-height:17px;font-size:13px;color:#f0f0f0;left:404.4px;letter-spacing:-0.7px;">Value2</div>
<div class="t" style="top:1017px;line-height:17px;font-size:13px;color:#5a5a5a;left:268.7px;width:600px;text-align:center;">X</div>
<div class="t" style="top:1017px;line-height:17px;font-size:13px;color:#5a5a5a;left:302.7px;width:600px;text-align:center;">Y</div>
<svg class="b" style="left:384px;top:1018px;" width="14" height="14" viewBox="0 0 14 14"><path d="M1 5H10L5.500 12.500z" fill="none" stroke="#9fe09f" stroke-width="1.300"/></svg>
<div class="t" style="top:1013.5px;line-height:12px;font-size:8px;color:#e8e8e8;left:397px;">2</div>
<div class="t" style="top:1039px;line-height:17px;font-size:13px;color:#f0f0f0;left:404.4px;letter-spacing:-0.7px;">Value2 Blend</div>
<div class="t" style="top:1039px;line-height:17px;font-size:13px;color:#5a5a5a;left:268.7px;width:600px;text-align:center;">X</div>
<div class="t" style="top:1039px;line-height:17px;font-size:13px;color:#5a5a5a;left:302.7px;width:600px;text-align:center;">Y</div>
<svg class="b" style="left:384px;top:1040px;" width="14" height="14" viewBox="0 0 14 14"><path d="M0 5H8L4 12z" fill="none" stroke="#9fe09f" stroke-width="1.200"/><path d="M6 12L10 5" stroke="#9fe09f" stroke-width="1.200"/></svg>
<div class="t" style="top:1035.5px;line-height:12px;font-size:8px;color:#e8e8e8;left:397px;">2</div>
<div class="t" style="top:1061px;line-height:17px;font-size:13px;color:#f0f0f0;left:404.4px;letter-spacing:-0.73px;">Value2 Solver (Pro)</div>
<div class="t" style="top:1061px;line-height:17px;font-size:13px;color:#5a5a5a;left:268.7px;width:600px;text-align:center;">X</div>
<div class="t" style="top:1061px;line-height:17px;font-size:13px;color:#5a5a5a;left:302.7px;width:600px;text-align:center;">Y</div>
<svg class="b" style="left:384px;top:1062px;" width="14" height="14" viewBox="0 0 14 14"><path d="M0 4.500H7L4 10z" fill="none" stroke="#9fe09f" stroke-width="1.200"/><rect x="6.500" y="8" width="6.500" height="6.500" fill="#9fe09f"/><path d="M9.750 9V13.500M7.500 11.250H12" stroke="#222" stroke-width="1.200"/></svg>
<div class="t" style="top:1057.5px;line-height:12px;font-size:8px;color:#e8e8e8;left:397px;">2</div>
<div class="b" style="left:380px;top:966.2px;width:176px;height:30.8px;border-radius:1px;border:3px solid #b4e61e;box-sizing:border-box;"></div>
</body></html>
